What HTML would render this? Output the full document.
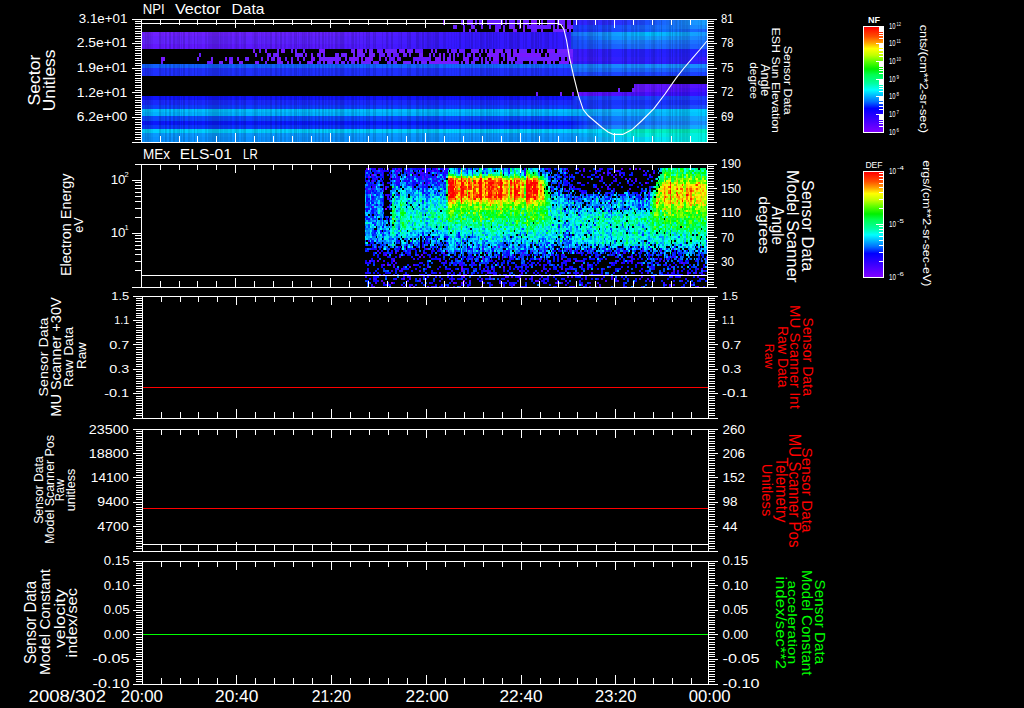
<!DOCTYPE html>
<html><head><meta charset="utf-8"><style>
html,body{margin:0;padding:0;background:#000;width:1024px;height:708px;overflow:hidden}
svg{display:block}
text{font-family:"Liberation Sans",sans-serif}
</style></head><body>
<svg width="1024" height="708" viewBox="0 0 1024 708" shape-rendering="crispEdges">
<defs><linearGradient id="g1" gradientUnits="userSpaceOnUse" x1="573" y1="0" x2="707" y2="0"><stop offset="0" stop-color="#3020ff"/><stop offset="0.35" stop-color="#2a30ff"/><stop offset="0.57" stop-color="#1a50ff"/><stop offset="0.87" stop-color="#1890ff"/><stop offset="1" stop-color="#18a0ff"/></linearGradient><linearGradient id="g2" gradientUnits="userSpaceOnUse" x1="573" y1="0" x2="707" y2="0"><stop offset="0" stop-color="#1a38ff"/><stop offset="0.35" stop-color="#1a50ff"/><stop offset="0.65" stop-color="#1870ff"/><stop offset="1" stop-color="#1890ff"/></linearGradient><linearGradient id="g3" gradientUnits="userSpaceOnUse" x1="573" y1="0" x2="707" y2="0"><stop offset="0" stop-color="#1a30ff"/><stop offset="0.35" stop-color="#1a48ff"/><stop offset="0.72" stop-color="#1070ff"/><stop offset="1" stop-color="#1a60ff"/></linearGradient><linearGradient id="g4" gradientUnits="userSpaceOnUse" x1="141" y1="0" x2="707" y2="0"><stop offset="0" stop-color="#7020ff"/><stop offset="0.33" stop-color="#6420ff"/><stop offset="0.56" stop-color="#3a18ff"/><stop offset="0.76" stop-color="#3018ff"/><stop offset="0.76" stop-color="#1870ff"/><stop offset="0.81" stop-color="#1890ff"/><stop offset="0.9" stop-color="#00c0ff"/><stop offset="1" stop-color="#1898ff"/></linearGradient><linearGradient id="g5" gradientUnits="userSpaceOnUse" x1="141" y1="0" x2="707" y2="0"><stop offset="0" stop-color="#6820ff"/><stop offset="0.33" stop-color="#5c20ff"/><stop offset="0.56" stop-color="#3618ff"/><stop offset="0.76" stop-color="#3018ff"/><stop offset="0.76" stop-color="#1a50ff"/><stop offset="0.83" stop-color="#1090ff"/><stop offset="0.9" stop-color="#10a0ff"/><stop offset="1" stop-color="#1a80ff"/></linearGradient><linearGradient id="g6" gradientUnits="userSpaceOnUse" x1="141" y1="0" x2="707" y2="0"><stop offset="0" stop-color="#6424ff"/><stop offset="0.33" stop-color="#5820ff"/><stop offset="0.56" stop-color="#3418ff"/><stop offset="0.76" stop-color="#3018ff"/><stop offset="0.76" stop-color="#1a48ff"/><stop offset="0.86" stop-color="#1a80ff"/><stop offset="1" stop-color="#1a70ff"/></linearGradient><linearGradient id="g7" gradientUnits="userSpaceOnUse" x1="141" y1="0" x2="707" y2="0"><stop offset="0" stop-color="#6418ff"/><stop offset="0.33" stop-color="#5618ff"/><stop offset="0.56" stop-color="#3218ff"/><stop offset="0.76" stop-color="#3018ff"/><stop offset="0.76" stop-color="#1a48ff"/><stop offset="0.88" stop-color="#1a70ff"/><stop offset="1" stop-color="#1a60ff"/></linearGradient><linearGradient id="g8" gradientUnits="userSpaceOnUse" x1="573" y1="0" x2="707" y2="0"><stop offset="0" stop-color="#3a18ff"/><stop offset="0.35" stop-color="#2820ff"/><stop offset="1" stop-color="#2020ff"/></linearGradient><linearGradient id="g9" gradientUnits="userSpaceOnUse" x1="573" y1="0" x2="707" y2="0"><stop offset="0" stop-color="#3a18ff"/><stop offset="0.35" stop-color="#2820ff"/><stop offset="1" stop-color="#2420ff"/></linearGradient><linearGradient id="g10" gradientUnits="userSpaceOnUse" x1="573" y1="0" x2="707" y2="0"><stop offset="0" stop-color="#4018ff"/><stop offset="0.35" stop-color="#3020ff"/><stop offset="0.87" stop-color="#2a20ff"/><stop offset="1" stop-color="#4018ff"/></linearGradient><linearGradient id="g11" gradientUnits="userSpaceOnUse" x1="573" y1="0" x2="707" y2="0"><stop offset="0" stop-color="#3018ff"/><stop offset="1" stop-color="#2a20ff"/></linearGradient><linearGradient id="g12" gradientUnits="userSpaceOnUse" x1="141" y1="0" x2="707" y2="0"><stop offset="0" stop-color="#1060ff"/><stop offset="0.6" stop-color="#1068ff"/><stop offset="0.67" stop-color="#1070ff"/><stop offset="0.76" stop-color="#1060ff"/><stop offset="0.76" stop-color="#1880ff"/><stop offset="0.9" stop-color="#1890ff"/><stop offset="1" stop-color="#1890ff"/></linearGradient><linearGradient id="g13" gradientUnits="userSpaceOnUse" x1="141" y1="0" x2="707" y2="0"><stop offset="0" stop-color="#1e30ff"/><stop offset="0.76" stop-color="#1e30ff"/><stop offset="0.76" stop-color="#1870ff"/><stop offset="1" stop-color="#1a60ff"/></linearGradient><linearGradient id="g14" gradientUnits="userSpaceOnUse" x1="141" y1="0" x2="707" y2="0"><stop offset="0" stop-color="#1e30ff"/><stop offset="0.76" stop-color="#1e30ff"/><stop offset="0.76" stop-color="#1a48ff"/><stop offset="1" stop-color="#1a40ff"/></linearGradient><linearGradient id="g15" gradientUnits="userSpaceOnUse" x1="634" y1="0" x2="707" y2="0"><stop offset="0" stop-color="#6818ff"/><stop offset="1" stop-color="#5010ff"/></linearGradient><linearGradient id="g16" gradientUnits="userSpaceOnUse" x1="634" y1="0" x2="707" y2="0"><stop offset="0" stop-color="#6818ff"/><stop offset="1" stop-color="#4010ff"/></linearGradient><linearGradient id="g17" gradientUnits="userSpaceOnUse" x1="578" y1="0" x2="707" y2="0"><stop offset="0" stop-color="#6010ff"/><stop offset="1" stop-color="#3010ff"/></linearGradient><linearGradient id="g18" gradientUnits="userSpaceOnUse" x1="141" y1="0" x2="707" y2="0"><stop offset="0" stop-color="#1014ff"/><stop offset="0.76" stop-color="#1014ff"/><stop offset="0.77" stop-color="#1848ff"/><stop offset="1" stop-color="#1a40ff"/></linearGradient><linearGradient id="g19" gradientUnits="userSpaceOnUse" x1="141" y1="0" x2="707" y2="0"><stop offset="0" stop-color="#1828ff"/><stop offset="0.76" stop-color="#1828ff"/><stop offset="0.77" stop-color="#1838ff"/><stop offset="1" stop-color="#1a30ff"/></linearGradient><linearGradient id="g20" gradientUnits="userSpaceOnUse" x1="141" y1="0" x2="707" y2="0"><stop offset="0" stop-color="#0c40ff"/><stop offset="0.76" stop-color="#0c40ff"/><stop offset="0.77" stop-color="#1838ff"/><stop offset="1" stop-color="#1a50ff"/></linearGradient><linearGradient id="g21" gradientUnits="userSpaceOnUse" x1="141" y1="0" x2="707" y2="0"><stop offset="0" stop-color="#00c0ff"/><stop offset="0.76" stop-color="#00c0ff"/><stop offset="0.81" stop-color="#10b0ff"/><stop offset="1" stop-color="#00d0ff"/></linearGradient><linearGradient id="g22" gradientUnits="userSpaceOnUse" x1="141" y1="0" x2="707" y2="0"><stop offset="0" stop-color="#00b0ff"/><stop offset="0.76" stop-color="#00b0ff"/><stop offset="0.81" stop-color="#10a0ff"/><stop offset="1" stop-color="#00c8ff"/></linearGradient><linearGradient id="g23" gradientUnits="userSpaceOnUse" x1="141" y1="0" x2="707" y2="0"><stop offset="0" stop-color="#0a48ff"/><stop offset="0.76" stop-color="#0a48ff"/><stop offset="0.81" stop-color="#1070ff"/><stop offset="1" stop-color="#10a8ff"/></linearGradient><linearGradient id="g24" gradientUnits="userSpaceOnUse" x1="141" y1="0" x2="707" y2="0"><stop offset="0" stop-color="#0a18ff"/><stop offset="0.76" stop-color="#0a18ff"/><stop offset="0.81" stop-color="#1858ff"/><stop offset="1" stop-color="#1890ff"/></linearGradient><linearGradient id="g25" gradientUnits="userSpaceOnUse" x1="141" y1="0" x2="707" y2="0"><stop offset="0" stop-color="#0a38ff"/><stop offset="0.76" stop-color="#0a38ff"/><stop offset="0.81" stop-color="#1a80ff"/><stop offset="1" stop-color="#10b0ff"/></linearGradient><linearGradient id="g26" gradientUnits="userSpaceOnUse" x1="141" y1="0" x2="707" y2="0"><stop offset="0" stop-color="#00d0ff"/><stop offset="0.76" stop-color="#00d0ff"/><stop offset="0.81" stop-color="#00e0ff"/><stop offset="0.88" stop-color="#00f0c0"/><stop offset="1" stop-color="#00f0c0"/></linearGradient><linearGradient id="g27" gradientUnits="userSpaceOnUse" x1="141" y1="0" x2="707" y2="0"><stop offset="0" stop-color="#0898ff"/><stop offset="0.76" stop-color="#0898ff"/><stop offset="0.81" stop-color="#00c0ff"/><stop offset="0.88" stop-color="#00f0e0"/><stop offset="1" stop-color="#00f0e0"/></linearGradient><linearGradient id="g28" gradientUnits="userSpaceOnUse" x1="141" y1="0" x2="707" y2="0"><stop offset="0" stop-color="#0890ff"/><stop offset="0.76" stop-color="#0890ff"/><stop offset="0.81" stop-color="#10b0ff"/><stop offset="0.88" stop-color="#00e0ff"/><stop offset="1" stop-color="#00f0e0"/></linearGradient><linearGradient id="cbg" x1="0" y1="0" x2="0" y2="1"><stop offset="0.0" stop-color="#ff0000"/><stop offset="0.092" stop-color="#ff5000"/><stop offset="0.149" stop-color="#ffa000"/><stop offset="0.206" stop-color="#ffff00"/><stop offset="0.27" stop-color="#c0ff00"/><stop offset="0.327" stop-color="#60ff00"/><stop offset="0.4" stop-color="#00f000"/><stop offset="0.455" stop-color="#00ff50"/><stop offset="0.536" stop-color="#00ffa0"/><stop offset="0.599" stop-color="#00ffff"/><stop offset="0.648" stop-color="#00c0ff"/><stop offset="0.711" stop-color="#0070ff"/><stop offset="0.776" stop-color="#0000ff"/><stop offset="0.89" stop-color="#4000ff"/><stop offset="1.0" stop-color="#8000ff"/></linearGradient></defs>
<rect width="1024" height="708" fill="#000"/>
<rect x="573" y="20" width="134" height="5" fill="url(#g1)"/><rect x="573" y="25" width="134" height="4" fill="url(#g2)"/><rect x="573" y="29" width="134" height="3" fill="url(#g3)"/><rect x="141" y="32" width="566" height="4" fill="url(#g4)"/><rect x="141" y="36" width="566" height="4" fill="url(#g5)"/><rect x="141" y="40" width="566" height="4" fill="url(#g6)"/><rect x="141" y="44" width="566" height="5" fill="url(#g7)"/><rect x="573" y="49" width="134" height="4" fill="url(#g8)"/><rect x="573" y="53" width="134" height="4" fill="url(#g9)"/><rect x="573" y="57" width="134" height="4" fill="url(#g10)"/><rect x="573" y="61" width="134" height="3" fill="url(#g11)"/><rect x="141" y="64" width="566" height="4" fill="url(#g12)"/><rect x="141" y="68" width="566" height="4" fill="url(#g13)"/><rect x="141" y="72" width="566" height="4" fill="url(#g14)"/><rect x="634" y="84" width="73" height="4" fill="url(#g15)"/><rect x="634" y="88" width="73" height="4" fill="url(#g16)"/><rect x="578" y="92" width="129" height="4" fill="url(#g17)"/><rect x="141" y="96" width="566" height="4" fill="url(#g18)"/><rect x="141" y="100" width="566" height="5" fill="url(#g19)"/><rect x="141" y="105" width="566" height="4" fill="url(#g20)"/><rect x="141" y="109" width="566" height="3" fill="url(#g21)"/><rect x="141" y="112" width="566" height="4" fill="url(#g22)"/><rect x="141" y="116" width="566" height="5" fill="url(#g23)"/><rect x="141" y="121" width="566" height="4" fill="url(#g24)"/><rect x="141" y="125" width="566" height="4" fill="url(#g25)"/><rect x="141" y="129" width="566" height="4" fill="url(#g26)"/><rect x="141" y="133" width="566" height="4" fill="url(#g27)"/><rect x="141" y="137" width="566" height="5" fill="url(#g28)"/><rect x="141" y="20" width="1" height="122" fill="#000" fill-opacity="0.1"/><rect x="142" y="20" width="1" height="122" fill="#000" fill-opacity="0.05"/><rect x="143" y="20" width="2" height="122" fill="#000" fill-opacity="0.05"/><rect x="145" y="20" width="1" height="122" fill="#000" fill-opacity="0.15"/><rect x="146" y="20" width="1" height="122" fill="#000" fill-opacity="0.1"/><rect x="147" y="20" width="2" height="122" fill="#000" fill-opacity="0.15"/><rect x="149" y="20" width="2" height="122" fill="#000" fill-opacity="0.1"/><rect x="151" y="20" width="2" height="122" fill="#000" fill-opacity="0.05"/><rect x="159" y="20" width="2" height="122" fill="#000" fill-opacity="0.15"/><rect x="161" y="20" width="1" height="122" fill="#000" fill-opacity="0.05"/><rect x="162" y="20" width="2" height="122" fill="#000" fill-opacity="0.05"/><rect x="165" y="20" width="1" height="122" fill="#000" fill-opacity="0.15"/><rect x="166" y="20" width="1" height="122" fill="#000" fill-opacity="0.1"/><rect x="169" y="20" width="1" height="122" fill="#000" fill-opacity="0.15"/><rect x="170" y="20" width="1" height="122" fill="#000" fill-opacity="0.15"/><rect x="173" y="20" width="2" height="122" fill="#000" fill-opacity="0.15"/><rect x="175" y="20" width="2" height="122" fill="#000" fill-opacity="0.05"/><rect x="177" y="20" width="2" height="122" fill="#000" fill-opacity="0.1"/><rect x="179" y="20" width="1" height="122" fill="#000" fill-opacity="0.15"/><rect x="181" y="20" width="1" height="122" fill="#000" fill-opacity="0.1"/><rect x="183" y="20" width="2" height="122" fill="#000" fill-opacity="0.15"/><rect x="188" y="20" width="2" height="122" fill="#000" fill-opacity="0.1"/><rect x="190" y="20" width="2" height="122" fill="#000" fill-opacity="0.05"/><rect x="194" y="20" width="1" height="122" fill="#000" fill-opacity="0.15"/><rect x="197" y="20" width="1" height="122" fill="#000" fill-opacity="0.1"/><rect x="198" y="20" width="2" height="122" fill="#000" fill-opacity="0.05"/><rect x="200" y="20" width="2" height="122" fill="#000" fill-opacity="0.05"/><rect x="205" y="20" width="2" height="122" fill="#000" fill-opacity="0.1"/><rect x="208" y="20" width="2" height="122" fill="#000" fill-opacity="0.1"/><rect x="210" y="20" width="1" height="122" fill="#000" fill-opacity="0.1"/><rect x="211" y="20" width="1" height="122" fill="#000" fill-opacity="0.1"/><rect x="212" y="20" width="1" height="122" fill="#000" fill-opacity="0.15"/><rect x="213" y="20" width="2" height="122" fill="#000" fill-opacity="0.15"/><rect x="215" y="20" width="1" height="122" fill="#000" fill-opacity="0.15"/><rect x="216" y="20" width="2" height="122" fill="#000" fill-opacity="0.15"/><rect x="218" y="20" width="1" height="122" fill="#000" fill-opacity="0.15"/><rect x="219" y="20" width="1" height="122" fill="#000" fill-opacity="0.05"/><rect x="220" y="20" width="1" height="122" fill="#000" fill-opacity="0.15"/><rect x="221" y="20" width="2" height="122" fill="#000" fill-opacity="0.1"/><rect x="223" y="20" width="1" height="122" fill="#000" fill-opacity="0.05"/><rect x="224" y="20" width="2" height="122" fill="#000" fill-opacity="0.1"/><rect x="226" y="20" width="2" height="122" fill="#000" fill-opacity="0.1"/><rect x="228" y="20" width="1" height="122" fill="#000" fill-opacity="0.05"/><rect x="229" y="20" width="1" height="122" fill="#000" fill-opacity="0.05"/><rect x="230" y="20" width="2" height="122" fill="#000" fill-opacity="0.1"/><rect x="234" y="20" width="1" height="122" fill="#000" fill-opacity="0.05"/><rect x="235" y="20" width="1" height="122" fill="#000" fill-opacity="0.1"/><rect x="236" y="20" width="1" height="122" fill="#000" fill-opacity="0.15"/><rect x="237" y="20" width="2" height="122" fill="#000" fill-opacity="0.1"/><rect x="241" y="20" width="1" height="122" fill="#000" fill-opacity="0.1"/><rect x="242" y="20" width="1" height="122" fill="#000" fill-opacity="0.05"/><rect x="243" y="20" width="1" height="122" fill="#000" fill-opacity="0.1"/><rect x="244" y="20" width="2" height="122" fill="#000" fill-opacity="0.15"/><rect x="252" y="20" width="2" height="122" fill="#000" fill-opacity="0.05"/><rect x="254" y="20" width="1" height="122" fill="#000" fill-opacity="0.15"/><rect x="255" y="20" width="1" height="122" fill="#000" fill-opacity="0.15"/><rect x="256" y="20" width="2" height="122" fill="#000" fill-opacity="0.1"/><rect x="259" y="20" width="1" height="122" fill="#000" fill-opacity="0.05"/><rect x="261" y="20" width="1" height="122" fill="#000" fill-opacity="0.1"/><rect x="262" y="20" width="2" height="122" fill="#000" fill-opacity="0.05"/><rect x="265" y="20" width="2" height="122" fill="#000" fill-opacity="0.1"/><rect x="267" y="20" width="1" height="122" fill="#000" fill-opacity="0.05"/><rect x="268" y="20" width="1" height="122" fill="#000" fill-opacity="0.05"/><rect x="269" y="20" width="1" height="122" fill="#000" fill-opacity="0.05"/><rect x="270" y="20" width="2" height="122" fill="#000" fill-opacity="0.15"/><rect x="275" y="20" width="1" height="122" fill="#000" fill-opacity="0.15"/><rect x="276" y="20" width="1" height="122" fill="#000" fill-opacity="0.15"/><rect x="277" y="20" width="1" height="122" fill="#000" fill-opacity="0.05"/><rect x="278" y="20" width="1" height="122" fill="#000" fill-opacity="0.05"/><rect x="280" y="20" width="2" height="122" fill="#000" fill-opacity="0.15"/><rect x="284" y="20" width="2" height="122" fill="#000" fill-opacity="0.1"/><rect x="288" y="20" width="1" height="122" fill="#000" fill-opacity="0.05"/><rect x="289" y="20" width="1" height="122" fill="#000" fill-opacity="0.05"/><rect x="290" y="20" width="1" height="122" fill="#000" fill-opacity="0.1"/><rect x="291" y="20" width="1" height="122" fill="#000" fill-opacity="0.1"/><rect x="294" y="20" width="1" height="122" fill="#000" fill-opacity="0.15"/><rect x="295" y="20" width="1" height="122" fill="#000" fill-opacity="0.1"/><rect x="296" y="20" width="1" height="122" fill="#000" fill-opacity="0.15"/><rect x="298" y="20" width="1" height="122" fill="#000" fill-opacity="0.1"/><rect x="300" y="20" width="2" height="122" fill="#000" fill-opacity="0.05"/><rect x="302" y="20" width="1" height="122" fill="#000" fill-opacity="0.15"/><rect x="303" y="20" width="1" height="122" fill="#000" fill-opacity="0.1"/><rect x="304" y="20" width="1" height="122" fill="#000" fill-opacity="0.15"/><rect x="305" y="20" width="2" height="122" fill="#000" fill-opacity="0.1"/><rect x="308" y="20" width="2" height="122" fill="#000" fill-opacity="0.15"/><rect x="310" y="20" width="1" height="122" fill="#000" fill-opacity="0.05"/><rect x="311" y="20" width="1" height="122" fill="#000" fill-opacity="0.1"/><rect x="312" y="20" width="1" height="122" fill="#000" fill-opacity="0.05"/><rect x="315" y="20" width="1" height="122" fill="#000" fill-opacity="0.15"/><rect x="316" y="20" width="1" height="122" fill="#000" fill-opacity="0.05"/><rect x="318" y="20" width="1" height="122" fill="#000" fill-opacity="0.1"/><rect x="319" y="20" width="1" height="122" fill="#000" fill-opacity="0.15"/><rect x="322" y="20" width="2" height="122" fill="#000" fill-opacity="0.15"/><rect x="325" y="20" width="1" height="122" fill="#000" fill-opacity="0.1"/><rect x="326" y="20" width="1" height="122" fill="#000" fill-opacity="0.05"/><rect x="328" y="20" width="2" height="122" fill="#000" fill-opacity="0.1"/><rect x="331" y="20" width="2" height="122" fill="#000" fill-opacity="0.1"/><rect x="335" y="20" width="2" height="122" fill="#000" fill-opacity="0.15"/><rect x="337" y="20" width="1" height="122" fill="#000" fill-opacity="0.1"/><rect x="338" y="20" width="2" height="122" fill="#000" fill-opacity="0.05"/><rect x="340" y="20" width="2" height="122" fill="#000" fill-opacity="0.15"/><rect x="342" y="20" width="2" height="122" fill="#000" fill-opacity="0.15"/><rect x="344" y="20" width="1" height="122" fill="#000" fill-opacity="0.05"/><rect x="347" y="20" width="2" height="122" fill="#000" fill-opacity="0.05"/><rect x="351" y="20" width="1" height="122" fill="#000" fill-opacity="0.1"/><rect x="352" y="20" width="2" height="122" fill="#000" fill-opacity="0.15"/><rect x="355" y="20" width="1" height="122" fill="#000" fill-opacity="0.1"/><rect x="356" y="20" width="1" height="122" fill="#000" fill-opacity="0.1"/><rect x="359" y="20" width="1" height="122" fill="#000" fill-opacity="0.1"/><rect x="363" y="20" width="1" height="122" fill="#000" fill-opacity="0.1"/><rect x="366" y="20" width="1" height="122" fill="#000" fill-opacity="0.15"/><rect x="367" y="20" width="2" height="122" fill="#000" fill-opacity="0.1"/><rect x="369" y="20" width="1" height="122" fill="#000" fill-opacity="0.15"/><rect x="373" y="20" width="1" height="122" fill="#000" fill-opacity="0.15"/><rect x="374" y="20" width="1" height="122" fill="#000" fill-opacity="0.1"/><rect x="375" y="20" width="1" height="122" fill="#000" fill-opacity="0.15"/><rect x="382" y="20" width="1" height="122" fill="#000" fill-opacity="0.1"/><rect x="386" y="20" width="2" height="122" fill="#000" fill-opacity="0.15"/><rect x="388" y="20" width="1" height="122" fill="#000" fill-opacity="0.05"/><rect x="391" y="20" width="2" height="122" fill="#000" fill-opacity="0.15"/><rect x="398" y="20" width="1" height="122" fill="#000" fill-opacity="0.05"/><rect x="399" y="20" width="2" height="122" fill="#000" fill-opacity="0.05"/><rect x="401" y="20" width="1" height="122" fill="#000" fill-opacity="0.15"/><rect x="407" y="20" width="1" height="122" fill="#000" fill-opacity="0.15"/><rect x="408" y="20" width="1" height="122" fill="#000" fill-opacity="0.1"/><rect x="409" y="20" width="2" height="122" fill="#000" fill-opacity="0.15"/><rect x="416" y="20" width="1" height="122" fill="#000" fill-opacity="0.15"/><rect x="417" y="20" width="2" height="122" fill="#000" fill-opacity="0.15"/><rect x="419" y="20" width="2" height="122" fill="#000" fill-opacity="0.05"/><rect x="422" y="20" width="2" height="122" fill="#000" fill-opacity="0.15"/><rect x="425" y="20" width="2" height="122" fill="#000" fill-opacity="0.05"/><rect x="427" y="20" width="2" height="122" fill="#000" fill-opacity="0.15"/><rect x="429" y="20" width="2" height="122" fill="#000" fill-opacity="0.1"/><rect x="431" y="20" width="2" height="122" fill="#000" fill-opacity="0.05"/><rect x="433" y="20" width="1" height="122" fill="#000" fill-opacity="0.1"/><rect x="434" y="20" width="1" height="122" fill="#000" fill-opacity="0.05"/><rect x="435" y="20" width="1" height="122" fill="#000" fill-opacity="0.15"/><rect x="436" y="20" width="1" height="122" fill="#000" fill-opacity="0.15"/><rect x="437" y="20" width="1" height="122" fill="#000" fill-opacity="0.15"/><rect x="438" y="20" width="1" height="122" fill="#000" fill-opacity="0.15"/><rect x="443" y="20" width="2" height="122" fill="#000" fill-opacity="0.1"/><rect x="445" y="20" width="1" height="122" fill="#000" fill-opacity="0.1"/><rect x="448" y="20" width="1" height="122" fill="#000" fill-opacity="0.05"/><rect x="451" y="20" width="1" height="122" fill="#000" fill-opacity="0.05"/><rect x="454" y="20" width="1" height="122" fill="#000" fill-opacity="0.05"/><rect x="456" y="20" width="1" height="122" fill="#000" fill-opacity="0.05"/><rect x="459" y="20" width="2" height="122" fill="#000" fill-opacity="0.15"/><rect x="465" y="20" width="1" height="122" fill="#000" fill-opacity="0.1"/><rect x="466" y="20" width="2" height="122" fill="#000" fill-opacity="0.05"/><rect x="468" y="20" width="1" height="122" fill="#000" fill-opacity="0.05"/><rect x="469" y="20" width="1" height="122" fill="#000" fill-opacity="0.1"/><rect x="471" y="20" width="1" height="122" fill="#000" fill-opacity="0.15"/><rect x="472" y="20" width="1" height="122" fill="#000" fill-opacity="0.15"/><rect x="475" y="20" width="1" height="122" fill="#000" fill-opacity="0.1"/><rect x="476" y="20" width="2" height="122" fill="#000" fill-opacity="0.05"/><rect x="478" y="20" width="1" height="122" fill="#000" fill-opacity="0.05"/><rect x="480" y="20" width="2" height="122" fill="#000" fill-opacity="0.15"/><rect x="482" y="20" width="2" height="122" fill="#000" fill-opacity="0.1"/><rect x="484" y="20" width="1" height="122" fill="#000" fill-opacity="0.05"/><rect x="486" y="20" width="2" height="122" fill="#000" fill-opacity="0.15"/><rect x="488" y="20" width="1" height="122" fill="#000" fill-opacity="0.05"/><rect x="489" y="20" width="1" height="122" fill="#000" fill-opacity="0.15"/><rect x="490" y="20" width="1" height="122" fill="#000" fill-opacity="0.1"/><rect x="491" y="20" width="1" height="122" fill="#000" fill-opacity="0.1"/><rect x="493" y="20" width="1" height="122" fill="#000" fill-opacity="0.15"/><rect x="494" y="20" width="2" height="122" fill="#000" fill-opacity="0.05"/><rect x="496" y="20" width="1" height="122" fill="#000" fill-opacity="0.1"/><rect x="497" y="20" width="1" height="122" fill="#000" fill-opacity="0.05"/><rect x="499" y="20" width="1" height="122" fill="#000" fill-opacity="0.1"/><rect x="504" y="20" width="1" height="122" fill="#000" fill-opacity="0.1"/><rect x="505" y="20" width="1" height="122" fill="#000" fill-opacity="0.05"/><rect x="506" y="20" width="1" height="122" fill="#000" fill-opacity="0.1"/><rect x="509" y="20" width="2" height="122" fill="#000" fill-opacity="0.15"/><rect x="511" y="20" width="2" height="122" fill="#000" fill-opacity="0.15"/><rect x="513" y="20" width="2" height="122" fill="#000" fill-opacity="0.05"/><rect x="515" y="20" width="1" height="122" fill="#000" fill-opacity="0.1"/><rect x="516" y="20" width="1" height="122" fill="#000" fill-opacity="0.05"/><rect x="517" y="20" width="1" height="122" fill="#000" fill-opacity="0.15"/><rect x="518" y="20" width="1" height="122" fill="#000" fill-opacity="0.15"/><rect x="519" y="20" width="1" height="122" fill="#000" fill-opacity="0.1"/><rect x="523" y="20" width="1" height="122" fill="#000" fill-opacity="0.1"/><rect x="525" y="20" width="1" height="122" fill="#000" fill-opacity="0.1"/><rect x="526" y="20" width="1" height="122" fill="#000" fill-opacity="0.1"/><rect x="531" y="20" width="1" height="122" fill="#000" fill-opacity="0.15"/><rect x="532" y="20" width="1" height="122" fill="#000" fill-opacity="0.15"/><rect x="533" y="20" width="1" height="122" fill="#000" fill-opacity="0.1"/><rect x="535" y="20" width="1" height="122" fill="#000" fill-opacity="0.15"/><rect x="536" y="20" width="1" height="122" fill="#000" fill-opacity="0.15"/><rect x="537" y="20" width="1" height="122" fill="#000" fill-opacity="0.05"/><rect x="538" y="20" width="1" height="122" fill="#000" fill-opacity="0.15"/><rect x="540" y="20" width="2" height="122" fill="#000" fill-opacity="0.1"/><rect x="544" y="20" width="1" height="122" fill="#000" fill-opacity="0.05"/><rect x="545" y="20" width="1" height="122" fill="#000" fill-opacity="0.1"/><rect x="546" y="20" width="1" height="122" fill="#000" fill-opacity="0.1"/><rect x="547" y="20" width="1" height="122" fill="#000" fill-opacity="0.1"/><rect x="548" y="20" width="1" height="122" fill="#000" fill-opacity="0.15"/><rect x="552" y="20" width="2" height="122" fill="#000" fill-opacity="0.1"/><rect x="556" y="20" width="1" height="122" fill="#000" fill-opacity="0.1"/><rect x="557" y="20" width="1" height="122" fill="#000" fill-opacity="0.05"/><rect x="563" y="20" width="1" height="122" fill="#000" fill-opacity="0.1"/><rect x="567" y="20" width="1" height="122" fill="#000" fill-opacity="0.05"/><rect x="568" y="20" width="2" height="122" fill="#000" fill-opacity="0.05"/><rect x="571" y="20" width="2" height="122" fill="#000" fill-opacity="0.15"/><rect x="573" y="20" width="2" height="122" fill="#000" fill-opacity="0.05"/><rect x="575" y="20" width="2" height="122" fill="#000" fill-opacity="0.05"/><rect x="577" y="20" width="1" height="122" fill="#000" fill-opacity="0.15"/><rect x="578" y="20" width="1" height="122" fill="#000" fill-opacity="0.1"/><rect x="581" y="20" width="1" height="122" fill="#000" fill-opacity="0.05"/><rect x="582" y="20" width="1" height="122" fill="#000" fill-opacity="0.1"/><rect x="583" y="20" width="1" height="122" fill="#000" fill-opacity="0.05"/><rect x="587" y="20" width="2" height="122" fill="#000" fill-opacity="0.1"/><rect x="589" y="20" width="2" height="122" fill="#000" fill-opacity="0.15"/><rect x="591" y="20" width="2" height="122" fill="#000" fill-opacity="0.15"/><rect x="593" y="20" width="1" height="122" fill="#000" fill-opacity="0.05"/><rect x="594" y="20" width="2" height="122" fill="#000" fill-opacity="0.1"/><rect x="597" y="20" width="1" height="122" fill="#000" fill-opacity="0.15"/><rect x="602" y="20" width="1" height="122" fill="#000" fill-opacity="0.15"/><rect x="603" y="20" width="2" height="122" fill="#000" fill-opacity="0.15"/><rect x="605" y="20" width="2" height="122" fill="#000" fill-opacity="0.1"/><rect x="608" y="20" width="2" height="122" fill="#000" fill-opacity="0.15"/><rect x="610" y="20" width="1" height="122" fill="#000" fill-opacity="0.15"/><rect x="611" y="20" width="1" height="122" fill="#000" fill-opacity="0.05"/><rect x="622" y="20" width="1" height="122" fill="#000" fill-opacity="0.1"/><rect x="624" y="20" width="2" height="122" fill="#000" fill-opacity="0.15"/><rect x="626" y="20" width="1" height="122" fill="#000" fill-opacity="0.15"/><rect x="631" y="20" width="2" height="122" fill="#000" fill-opacity="0.1"/><rect x="633" y="20" width="1" height="122" fill="#000" fill-opacity="0.1"/><rect x="635" y="20" width="1" height="122" fill="#000" fill-opacity="0.1"/><rect x="636" y="20" width="1" height="122" fill="#000" fill-opacity="0.15"/><rect x="637" y="20" width="1" height="122" fill="#000" fill-opacity="0.05"/><rect x="639" y="20" width="1" height="122" fill="#000" fill-opacity="0.1"/><rect x="640" y="20" width="1" height="122" fill="#000" fill-opacity="0.1"/><rect x="641" y="20" width="2" height="122" fill="#000" fill-opacity="0.1"/><rect x="643" y="20" width="2" height="122" fill="#000" fill-opacity="0.1"/><rect x="649" y="20" width="1" height="122" fill="#000" fill-opacity="0.05"/><rect x="651" y="20" width="2" height="122" fill="#000" fill-opacity="0.1"/><rect x="653" y="20" width="2" height="122" fill="#000" fill-opacity="0.15"/><rect x="655" y="20" width="1" height="122" fill="#000" fill-opacity="0.05"/><rect x="656" y="20" width="1" height="122" fill="#000" fill-opacity="0.05"/><rect x="659" y="20" width="1" height="122" fill="#000" fill-opacity="0.05"/><rect x="661" y="20" width="1" height="122" fill="#000" fill-opacity="0.15"/><rect x="666" y="20" width="1" height="122" fill="#000" fill-opacity="0.05"/><rect x="667" y="20" width="2" height="122" fill="#000" fill-opacity="0.05"/><rect x="669" y="20" width="2" height="122" fill="#000" fill-opacity="0.15"/><rect x="672" y="20" width="1" height="122" fill="#000" fill-opacity="0.15"/><rect x="674" y="20" width="1" height="122" fill="#000" fill-opacity="0.05"/><rect x="675" y="20" width="1" height="122" fill="#000" fill-opacity="0.1"/><rect x="676" y="20" width="1" height="122" fill="#000" fill-opacity="0.15"/><rect x="677" y="20" width="1" height="122" fill="#000" fill-opacity="0.05"/><rect x="679" y="20" width="2" height="122" fill="#000" fill-opacity="0.15"/><rect x="681" y="20" width="1" height="122" fill="#000" fill-opacity="0.05"/><rect x="682" y="20" width="2" height="122" fill="#000" fill-opacity="0.15"/><rect x="684" y="20" width="1" height="122" fill="#000" fill-opacity="0.15"/><rect x="685" y="20" width="1" height="122" fill="#000" fill-opacity="0.1"/><rect x="686" y="20" width="2" height="122" fill="#000" fill-opacity="0.15"/><rect x="688" y="20" width="1" height="122" fill="#000" fill-opacity="0.1"/><rect x="689" y="20" width="1" height="122" fill="#000" fill-opacity="0.1"/><rect x="698" y="20" width="1" height="122" fill="#000" fill-opacity="0.05"/><rect x="700" y="20" width="1" height="122" fill="#000" fill-opacity="0.05"/><rect x="701" y="20" width="1" height="122" fill="#000" fill-opacity="0.1"/><rect x="705" y="20" width="1" height="122" fill="#000" fill-opacity="0.1"/><rect x="443" y="20" width="2" height="5" fill="#7818ff"/><rect x="461" y="20" width="2" height="5" fill="#6a20ff"/><rect x="467" y="20" width="6" height="5" fill="#7020ff"/><rect x="475" y="20" width="2" height="5" fill="#6418ff"/><rect x="479" y="20" width="4" height="5" fill="#6418ff"/><rect x="487" y="20" width="16" height="5" fill="#6418ff"/><rect x="505" y="20" width="2" height="5" fill="#7020ff"/><rect x="509" y="20" width="6" height="5" fill="#6418ff"/><rect x="517" y="20" width="4" height="5" fill="#6a20ff"/><rect x="523" y="20" width="6" height="5" fill="#6a20ff"/><rect x="531" y="20" width="6" height="5" fill="#7818ff"/><rect x="541" y="20" width="2" height="5" fill="#6a20ff"/><rect x="547" y="20" width="8" height="5" fill="#6418ff"/><rect x="557" y="20" width="8" height="5" fill="#6a20ff"/><rect x="567" y="20" width="4" height="5" fill="#6418ff"/><rect x="453" y="25" width="4" height="4" fill="#6a20ff"/><rect x="463" y="25" width="2" height="4" fill="#6418ff"/><rect x="471" y="25" width="4" height="4" fill="#7020ff"/><rect x="481" y="25" width="2" height="4" fill="#7020ff"/><rect x="489" y="25" width="2" height="4" fill="#6a20ff"/><rect x="495" y="25" width="6" height="4" fill="#6418ff"/><rect x="503" y="25" width="2" height="4" fill="#6a20ff"/><rect x="509" y="25" width="6" height="4" fill="#7020ff"/><rect x="519" y="25" width="2" height="4" fill="#7020ff"/><rect x="523" y="25" width="2" height="4" fill="#7020ff"/><rect x="527" y="25" width="24" height="4" fill="#6418ff"/><rect x="553" y="25" width="2" height="4" fill="#6a20ff"/><rect x="557" y="25" width="2" height="4" fill="#7020ff"/><rect x="563" y="25" width="2" height="4" fill="#6418ff"/><rect x="567" y="25" width="6" height="4" fill="#7020ff"/><rect x="463" y="29" width="2" height="3" fill="#6a20ff"/><rect x="469" y="29" width="2" height="3" fill="#7818ff"/><rect x="475" y="29" width="2" height="3" fill="#6a20ff"/><rect x="495" y="29" width="4" height="3" fill="#6418ff"/><rect x="503" y="29" width="2" height="3" fill="#7020ff"/><rect x="513" y="29" width="4" height="3" fill="#7818ff"/><rect x="523" y="29" width="2" height="3" fill="#7818ff"/><rect x="531" y="29" width="6" height="3" fill="#6418ff"/><rect x="541" y="29" width="2" height="3" fill="#7818ff"/><rect x="553" y="29" width="14" height="3" fill="#7020ff"/><rect x="569" y="29" width="2" height="3" fill="#7818ff"/><rect x="253" y="49" width="2" height="4" fill="#7818ff"/><rect x="259" y="49" width="2" height="4" fill="#6418ff"/><rect x="265" y="49" width="2" height="4" fill="#7818ff"/><rect x="277" y="49" width="2" height="4" fill="#6a20ff"/><rect x="281" y="49" width="4" height="4" fill="#7818ff"/><rect x="291" y="49" width="2" height="4" fill="#6a20ff"/><rect x="295" y="49" width="2" height="4" fill="#6a20ff"/><rect x="303" y="49" width="2" height="4" fill="#6a20ff"/><rect x="319" y="49" width="6" height="4" fill="#7818ff"/><rect x="351" y="49" width="4" height="4" fill="#7020ff"/><rect x="357" y="49" width="6" height="4" fill="#7818ff"/><rect x="365" y="49" width="2" height="4" fill="#6a20ff"/><rect x="369" y="49" width="4" height="4" fill="#6a20ff"/><rect x="377" y="49" width="6" height="4" fill="#6418ff"/><rect x="385" y="49" width="12" height="4" fill="#6a20ff"/><rect x="399" y="49" width="6" height="4" fill="#7818ff"/><rect x="407" y="49" width="6" height="4" fill="#7020ff"/><rect x="415" y="49" width="8" height="4" fill="#6418ff"/><rect x="431" y="49" width="2" height="4" fill="#7818ff"/><rect x="435" y="49" width="2" height="4" fill="#7020ff"/><rect x="447" y="49" width="2" height="4" fill="#7020ff"/><rect x="451" y="49" width="6" height="4" fill="#6418ff"/><rect x="459" y="49" width="6" height="4" fill="#6418ff"/><rect x="471" y="49" width="8" height="4" fill="#7020ff"/><rect x="481" y="49" width="2" height="4" fill="#6a20ff"/><rect x="485" y="49" width="2" height="4" fill="#7818ff"/><rect x="489" y="49" width="4" height="4" fill="#6a20ff"/><rect x="495" y="49" width="8" height="4" fill="#7818ff"/><rect x="505" y="49" width="6" height="4" fill="#6a20ff"/><rect x="513" y="49" width="4" height="4" fill="#7818ff"/><rect x="519" y="49" width="8" height="4" fill="#6a20ff"/><rect x="531" y="49" width="4" height="4" fill="#6418ff"/><rect x="537" y="49" width="2" height="4" fill="#6a20ff"/><rect x="541" y="49" width="2" height="4" fill="#7020ff"/><rect x="547" y="49" width="8" height="4" fill="#7818ff"/><rect x="557" y="49" width="16" height="4" fill="#7020ff"/><rect x="199" y="53" width="2" height="4" fill="#6418ff"/><rect x="255" y="53" width="2" height="4" fill="#7020ff"/><rect x="267" y="53" width="4" height="4" fill="#6418ff"/><rect x="273" y="53" width="6" height="4" fill="#6a20ff"/><rect x="295" y="53" width="8" height="4" fill="#6a20ff"/><rect x="305" y="53" width="2" height="4" fill="#7818ff"/><rect x="311" y="53" width="2" height="4" fill="#7020ff"/><rect x="317" y="53" width="4" height="4" fill="#6a20ff"/><rect x="323" y="53" width="2" height="4" fill="#6418ff"/><rect x="335" y="53" width="4" height="4" fill="#6a20ff"/><rect x="341" y="53" width="6" height="4" fill="#6a20ff"/><rect x="353" y="53" width="2" height="4" fill="#6a20ff"/><rect x="357" y="53" width="8" height="4" fill="#6a20ff"/><rect x="369" y="53" width="6" height="4" fill="#7020ff"/><rect x="379" y="53" width="6" height="4" fill="#6418ff"/><rect x="387" y="53" width="4" height="4" fill="#6a20ff"/><rect x="393" y="53" width="6" height="4" fill="#6418ff"/><rect x="403" y="53" width="4" height="4" fill="#6a20ff"/><rect x="409" y="53" width="2" height="4" fill="#6a20ff"/><rect x="419" y="53" width="4" height="4" fill="#7020ff"/><rect x="429" y="53" width="2" height="4" fill="#7020ff"/><rect x="433" y="53" width="2" height="4" fill="#6418ff"/><rect x="439" y="53" width="2" height="4" fill="#7818ff"/><rect x="443" y="53" width="2" height="4" fill="#7818ff"/><rect x="449" y="53" width="2" height="4" fill="#6a20ff"/><rect x="453" y="53" width="2" height="4" fill="#6a20ff"/><rect x="457" y="53" width="2" height="4" fill="#6a20ff"/><rect x="463" y="53" width="2" height="4" fill="#6418ff"/><rect x="467" y="53" width="4" height="4" fill="#6418ff"/><rect x="473" y="53" width="2" height="4" fill="#7818ff"/><rect x="479" y="53" width="2" height="4" fill="#6418ff"/><rect x="487" y="53" width="12" height="4" fill="#7818ff"/><rect x="501" y="53" width="4" height="4" fill="#6418ff"/><rect x="507" y="53" width="4" height="4" fill="#7020ff"/><rect x="513" y="53" width="28" height="4" fill="#7818ff"/><rect x="545" y="53" width="2" height="4" fill="#7818ff"/><rect x="549" y="53" width="24" height="4" fill="#6a20ff"/><rect x="161" y="57" width="4" height="4" fill="#7818ff"/><rect x="197" y="57" width="2" height="4" fill="#7020ff"/><rect x="211" y="57" width="2" height="4" fill="#7020ff"/><rect x="225" y="57" width="2" height="4" fill="#7818ff"/><rect x="229" y="57" width="4" height="4" fill="#6418ff"/><rect x="237" y="57" width="2" height="4" fill="#7818ff"/><rect x="245" y="57" width="4" height="4" fill="#6a20ff"/><rect x="261" y="57" width="2" height="4" fill="#6418ff"/><rect x="267" y="57" width="2" height="4" fill="#7818ff"/><rect x="271" y="57" width="4" height="4" fill="#6a20ff"/><rect x="277" y="57" width="4" height="4" fill="#7818ff"/><rect x="285" y="57" width="2" height="4" fill="#6418ff"/><rect x="291" y="57" width="2" height="4" fill="#6a20ff"/><rect x="297" y="57" width="2" height="4" fill="#7818ff"/><rect x="303" y="57" width="2" height="4" fill="#6a20ff"/><rect x="311" y="57" width="4" height="4" fill="#7818ff"/><rect x="319" y="57" width="22" height="4" fill="#7020ff"/><rect x="345" y="57" width="2" height="4" fill="#6a20ff"/><rect x="349" y="57" width="10" height="4" fill="#7818ff"/><rect x="361" y="57" width="2" height="4" fill="#7818ff"/><rect x="365" y="57" width="8" height="4" fill="#7818ff"/><rect x="379" y="57" width="2" height="4" fill="#7818ff"/><rect x="385" y="57" width="2" height="4" fill="#7818ff"/><rect x="389" y="57" width="6" height="4" fill="#6418ff"/><rect x="397" y="57" width="4" height="4" fill="#7818ff"/><rect x="413" y="57" width="18" height="4" fill="#6418ff"/><rect x="435" y="57" width="6" height="4" fill="#7818ff"/><rect x="443" y="57" width="2" height="4" fill="#7020ff"/><rect x="447" y="57" width="4" height="4" fill="#7020ff"/><rect x="453" y="57" width="2" height="4" fill="#6418ff"/><rect x="463" y="57" width="6" height="4" fill="#7818ff"/><rect x="473" y="57" width="6" height="4" fill="#6418ff"/><rect x="481" y="57" width="2" height="4" fill="#7818ff"/><rect x="485" y="57" width="2" height="4" fill="#6a20ff"/><rect x="489" y="57" width="2" height="4" fill="#6a20ff"/><rect x="493" y="57" width="6" height="4" fill="#7818ff"/><rect x="503" y="57" width="2" height="4" fill="#6418ff"/><rect x="507" y="57" width="8" height="4" fill="#7020ff"/><rect x="517" y="57" width="42" height="4" fill="#6a20ff"/><rect x="561" y="57" width="4" height="4" fill="#6418ff"/><rect x="567" y="57" width="6" height="4" fill="#6418ff"/><rect x="161" y="61" width="2" height="3" fill="#6418ff"/><rect x="207" y="61" width="6" height="3" fill="#6418ff"/><rect x="219" y="61" width="4" height="3" fill="#7020ff"/><rect x="229" y="61" width="4" height="3" fill="#7020ff"/><rect x="239" y="61" width="4" height="3" fill="#7818ff"/><rect x="255" y="61" width="4" height="3" fill="#7818ff"/><rect x="265" y="61" width="2" height="3" fill="#6a20ff"/><rect x="277" y="61" width="6" height="3" fill="#7020ff"/><rect x="287" y="61" width="2" height="3" fill="#7818ff"/><rect x="291" y="61" width="2" height="3" fill="#7020ff"/><rect x="299" y="61" width="2" height="3" fill="#6418ff"/><rect x="307" y="61" width="6" height="3" fill="#7818ff"/><rect x="317" y="61" width="4" height="3" fill="#6418ff"/><rect x="323" y="61" width="2" height="3" fill="#7020ff"/><rect x="327" y="61" width="6" height="3" fill="#6a20ff"/><rect x="335" y="61" width="4" height="3" fill="#7818ff"/><rect x="341" y="61" width="4" height="3" fill="#6a20ff"/><rect x="347" y="61" width="2" height="3" fill="#6418ff"/><rect x="351" y="61" width="4" height="3" fill="#6a20ff"/><rect x="357" y="61" width="2" height="3" fill="#6a20ff"/><rect x="361" y="61" width="10" height="3" fill="#6a20ff"/><rect x="373" y="61" width="6" height="3" fill="#6a20ff"/><rect x="387" y="61" width="4" height="3" fill="#7020ff"/><rect x="393" y="61" width="4" height="3" fill="#7020ff"/><rect x="403" y="61" width="8" height="3" fill="#7020ff"/><rect x="413" y="61" width="2" height="3" fill="#6418ff"/><rect x="417" y="61" width="2" height="3" fill="#7020ff"/><rect x="421" y="61" width="6" height="3" fill="#7020ff"/><rect x="429" y="61" width="30" height="3" fill="#7818ff"/><rect x="461" y="61" width="2" height="3" fill="#7020ff"/><rect x="465" y="61" width="4" height="3" fill="#7020ff"/><rect x="471" y="61" width="4" height="3" fill="#7020ff"/><rect x="481" y="61" width="2" height="3" fill="#6418ff"/><rect x="485" y="61" width="4" height="3" fill="#6a20ff"/><rect x="491" y="61" width="8" height="3" fill="#6418ff"/><rect x="501" y="61" width="2" height="3" fill="#7020ff"/><rect x="507" y="61" width="2" height="3" fill="#6a20ff"/><rect x="511" y="61" width="2" height="3" fill="#6a20ff"/><rect x="515" y="61" width="8" height="3" fill="#6418ff"/><rect x="529" y="61" width="2" height="3" fill="#6a20ff"/><rect x="533" y="61" width="4" height="3" fill="#6418ff"/><rect x="543" y="61" width="2" height="3" fill="#6418ff"/><rect x="547" y="61" width="4" height="3" fill="#7818ff"/><rect x="553" y="61" width="2" height="3" fill="#7818ff"/><rect x="559" y="61" width="10" height="3" fill="#7818ff"/><rect x="571" y="61" width="2" height="3" fill="#7818ff"/><rect x="618" y="88" width="2" height="4" fill="#6a20ff"/><rect x="632" y="88" width="2" height="4" fill="#6a20ff"/><rect x="536" y="92" width="2" height="4" fill="#7020ff"/><rect x="560" y="92" width="2" height="4" fill="#7020ff"/><rect x="572" y="92" width="2" height="4" fill="#7818ff"/><path fill="#8000ff" d="M368 168v2h2v-2zM371 194v2h1v-2zM372 174v2h2v-2zM425 168v2h1v-2zM436 168v2h1v-2zM437 174v2h1v-2zM539 258v2h1v-2zM385 208h2v2h-2zM391 282h2v2h-2z"/><path fill="#6c00ff" d="M368 176v2h2v-2zM383 184v2h1v-2zM396 170v2h2v-2zM406 170v2h1v-2zM428 182v2h2v-2zM369 260h2v2h-2zM377 260h2v2h-2zM385 188h2v2h-2zM387 264h2v2h-2zM393 260h2v2h-2zM461 268h2v2h-2zM463 276h2v2h-2zM463 280h2v2h-2zM621 168h2v2h-2zM625 272h2v2h-2zM645 182h2v2h-2zM697 286h2v2h-2z"/><path fill="#5800ff" d="M366 168v2h2v-2zM366 204v2h2v-2zM372 180v2h2v-2zM372 206v2h2v-2zM390 176v2h2v-2zM395 172v2h1v-2zM398 168v2h2v-2zM412 172v2h1v-2zM422 168v2h2v-2zM422 176v4h2v-4zM426 248v2h2v-2zM432 170v2h2v-2zM436 176v2h1v-2zM437 168v2h1v-2zM443 176v2h1v-2zM472 258v2h1v-2zM482 248v2h2v-2zM498 246v2h2v-2zM498 256v2h2v-2zM532 250v2h1v-2zM564 188v2h2v-2zM578 252v2h2v-2zM648 192v2h2v-2zM706 258v2h1v-2zM383 264h2v2h-2zM383 282h2v2h-2zM385 254h2v2h-2zM403 278h2v2h-2zM409 266h2v2h-2zM413 286h2v2h-2zM419 256h2v2h-2zM419 280h2v2h-2zM421 254h2v2h-2zM443 252h2v2h-2zM453 282h2v2h-2zM459 274h2v2h-2zM459 286h2v2h-2zM461 266h2v2h-2zM461 270h2v2h-2zM461 282h2v2h-2zM463 274h2v2h-2zM481 278h2v2h-2zM481 286h2v2h-2zM487 272h2v2h-2zM491 278h2v2h-2zM503 266h2v2h-2zM513 284h2v2h-2zM521 272h2v2h-2zM535 280h2v2h-2zM547 270h2v2h-2zM561 258h2v2h-2zM575 260h2v2h-2zM579 182h2v2h-2zM581 264h2v2h-2zM583 168h2v2h-2zM587 264h2v2h-2zM601 176h2v2h-2zM603 172h2v2h-2zM617 170h2v2h-2zM617 280h2v2h-2zM619 174h2v2h-2zM635 168h2v2h-2zM671 266h2v2h-2zM681 262h2v2h-2zM687 272h2v2h-2zM695 272h2v2h-2z"/><path fill="#4400ff" d="M365 172v2h1v-2zM368 190v2h2v-2zM372 188v2h2v-2zM374 186v2h2v-2zM376 170v2h1v-2zM376 246v2h1v-2zM377 176v2h1v-2zM378 168v2h2v-2zM382 172v4h1v-4zM383 170v2h1v-2zM383 188v4h1v-4zM395 182v2h1v-2zM396 176v2h2v-2zM400 170v2h1v-2zM406 176v2h1v-2zM407 244v2h1v-2zM408 172v2h2v-2zM412 186v2h1v-2zM418 182v2h1v-2zM420 172v2h2v-2zM422 172v2h2v-2zM422 182v2h2v-2zM425 172v2h1v-2zM426 174v4h2v-4zM437 170v2h1v-2zM437 180v2h1v-2zM446 250v2h2v-2zM455 250v2h1v-2zM467 250v2h1v-2zM472 172v2h1v-2zM482 256v4h2v-4zM502 256v2h1v-2zM509 256v2h1v-2zM520 256v2h1v-2zM521 254v2h1v-2zM521 258v2h1v-2zM522 252v2h2v-2zM524 172v2h2v-2zM551 176v2h1v-2zM562 168v2h1v-2zM564 170v2h2v-2zM568 170v2h1v-2zM570 186v2h2v-2zM570 248v2h2v-2zM574 200v2h1v-2zM576 198v2h2v-2zM581 250v2h1v-2zM582 192v2h2v-2zM588 252v2h2v-2zM605 248v2h1v-2zM608 202v2h2v-2zM618 252v2h2v-2zM623 198v2h1v-2zM642 250v2h2v-2zM656 258v2h2v-2zM674 256v2h2v-2zM373 286h2v2h-2zM375 282h2v2h-2zM377 250h2v2h-2zM379 252h2v2h-2zM381 280h2v2h-2zM385 186h2v2h-2zM387 194h2v2h-2zM393 264h2v2h-2zM393 266h2v2h-2zM395 252h2v2h-2zM399 256h2v2h-2zM403 274h2v2h-2zM409 278h2v2h-2zM409 286h2v2h-2zM413 264h2v2h-2zM419 270h2v2h-2zM423 252h2v2h-2zM427 266h2v2h-2zM427 286h2v2h-2zM433 286h2v2h-2zM439 260h2v2h-2zM439 272h2v2h-2zM459 264h2v2h-2zM465 274h2v2h-2zM469 280h2v2h-2zM473 262h2v2h-2zM491 268h2v2h-2zM505 276h2v2h-2zM507 276h2v2h-2zM519 270h2v2h-2zM519 278h2v2h-2zM525 278h2v2h-2zM531 264h2v2h-2zM531 278h2v2h-2zM537 280h2v2h-2zM541 270h2v2h-2zM557 282h2v2h-2zM561 268h2v2h-2zM561 282h2v2h-2zM563 254h2v2h-2zM565 260h2v2h-2zM567 276h2v2h-2zM573 286h2v2h-2zM577 272h2v2h-2zM581 260h2v2h-2zM581 284h2v2h-2zM583 170h2v2h-2zM589 274h2v2h-2zM591 272h2v2h-2zM595 172h2v2h-2zM595 186h2v2h-2zM597 274h2v2h-2zM599 286h2v2h-2zM601 178h2v2h-2zM605 280h2v2h-2zM607 172h2v2h-2zM607 186h2v2h-2zM607 188h2v2h-2zM611 262h2v2h-2zM613 176h2v2h-2zM615 174h2v2h-2zM625 178h2v2h-2zM629 178h2v2h-2zM629 188h2v2h-2zM629 256h2v2h-2zM629 260h2v2h-2zM631 256h2v2h-2zM631 260h2v2h-2zM635 178h2v2h-2zM635 180h2v2h-2zM639 168h2v2h-2zM643 170h2v2h-2zM647 272h2v2h-2zM647 278h2v2h-2zM649 174h2v2h-2zM653 172h2v2h-2zM659 274h2v2h-2zM663 260h2v2h-2zM663 282h2v2h-2zM665 274h2v2h-2zM669 274h2v2h-2zM669 284h2v2h-2zM677 270h2v2h-2z"/><path fill="#3000ff" d="M366 180v2h2v-2zM366 188v2h2v-2zM368 192v2h2v-2zM368 240v2h2v-2zM370 244v2h1v-2zM371 174v2h1v-2zM372 176v2h2v-2zM372 184v2h2v-2zM372 198v2h2v-2zM374 168v2h2v-2zM374 178v2h2v-2zM376 174v2h1v-2zM377 178v2h1v-2zM378 172v2h2v-2zM380 170v2h2v-2zM383 168v2h1v-2zM390 174v2h2v-2zM392 168v2h2v-2zM396 174v2h2v-2zM396 178v4h2v-4zM398 170v2h2v-2zM398 180v2h2v-2zM398 194v2h2v-2zM406 180v2h1v-2zM407 176v2h1v-2zM408 174v2h2v-2zM412 168v2h1v-2zM412 180v2h1v-2zM412 188v2h1v-2zM413 172v4h1v-4zM413 180v2h1v-2zM414 174v2h2v-2zM418 172v2h1v-2zM418 176v2h1v-2zM420 170v2h2v-2zM420 174v2h2v-2zM422 174v2h2v-2zM422 184v2h2v-2zM422 246v2h2v-2zM425 176v4h1v-4zM426 172v2h2v-2zM426 242v2h2v-2zM428 168v4h2v-4zM432 178v2h2v-2zM434 176v2h2v-2zM438 182v4h2v-4zM442 170v2h1v-2zM443 168v2h1v-2zM444 168v6h2v-6zM444 176v2h2v-2zM446 168v2h2v-2zM466 258v2h1v-2zM472 246v6h1v-6zM486 252v2h2v-2zM494 246v2h2v-2zM503 250v2h1v-2zM503 254v2h1v-2zM508 250v4h1v-4zM512 254v2h2v-2zM524 168v2h2v-2zM539 250v2h1v-2zM540 258v2h2v-2zM545 168v2h1v-2zM545 250v2h1v-2zM548 168v2h2v-2zM551 254v2h1v-2zM566 168v2h2v-2zM566 176v2h2v-2zM566 180v2h2v-2zM568 192v2h1v-2zM568 248v2h1v-2zM570 250v2h2v-2zM574 252v2h1v-2zM590 248v2h2v-2zM598 196v2h1v-2zM605 192v2h1v-2zM610 200v2h1v-2zM610 252v2h1v-2zM611 212v2h1v-2zM623 194v2h1v-2zM623 252v2h1v-2zM624 252v2h2v-2zM638 194v2h2v-2zM640 250v2h1v-2zM648 194v2h2v-2zM660 250v2h2v-2zM660 258v2h2v-2zM666 258v2h2v-2zM668 256v2h2v-2zM672 248v2h2v-2zM365 262h2v2h-2zM371 284h2v2h-2zM371 286h2v2h-2zM373 260h2v2h-2zM373 278h2v2h-2zM375 278h2v2h-2zM383 168h2v2h-2zM383 274h2v2h-2zM385 194h2v2h-2zM387 168h2v2h-2zM387 196h2v2h-2zM387 198h2v2h-2zM387 206h2v2h-2zM387 284h2v2h-2zM389 284h2v2h-2zM391 258h2v2h-2zM391 270h2v2h-2zM393 258h2v2h-2zM393 274h2v2h-2zM395 262h2v2h-2zM395 278h2v2h-2zM397 250h2v2h-2zM397 268h2v2h-2zM399 270h2v2h-2zM401 268h2v2h-2zM401 270h2v2h-2zM405 284h2v2h-2zM407 274h2v2h-2zM407 276h2v2h-2zM407 280h2v2h-2zM409 250h2v2h-2zM411 284h2v2h-2zM413 258h2v2h-2zM417 254h2v2h-2zM419 278h2v2h-2zM421 274h2v2h-2zM423 256h2v2h-2zM429 274h2v2h-2zM431 286h2v2h-2zM439 258h2v2h-2zM439 280h2v2h-2zM443 262h2v2h-2zM445 260h2v2h-2zM447 272h2v2h-2zM451 278h2v2h-2zM451 280h2v2h-2zM455 282h2v2h-2zM459 262h2v2h-2zM461 262h2v2h-2zM465 282h2v2h-2zM481 280h2v2h-2zM483 268h2v2h-2zM485 270h2v2h-2zM487 270h2v2h-2zM489 276h2v2h-2zM491 272h2v2h-2zM493 274h2v2h-2zM495 260h2v2h-2zM495 274h2v2h-2zM499 280h2v2h-2zM499 282h2v2h-2zM503 284h2v2h-2zM509 272h2v2h-2zM511 276h2v2h-2zM515 266h2v2h-2zM517 276h2v2h-2zM519 276h2v2h-2zM523 264h2v2h-2zM525 286h2v2h-2zM529 260h2v2h-2zM537 262h2v2h-2zM539 264h2v2h-2zM541 276h2v2h-2zM543 268h2v2h-2zM545 278h2v2h-2zM547 278h2v2h-2zM549 268h2v2h-2zM549 274h2v2h-2zM555 282h2v2h-2zM557 280h2v2h-2zM561 262h2v2h-2zM565 264h2v2h-2zM565 270h2v2h-2zM565 280h2v2h-2zM569 260h2v2h-2zM569 272h2v2h-2zM571 268h2v2h-2zM571 276h2v2h-2zM573 186h2v2h-2zM575 272h2v2h-2zM577 188h2v2h-2zM577 260h2v2h-2zM579 170h2v2h-2zM581 174h2v2h-2zM581 274h2v2h-2zM585 278h2v2h-2zM587 268h2v2h-2zM589 282h2v2h-2zM589 286h2v2h-2zM595 170h2v2h-2zM595 256h2v2h-2zM595 286h2v2h-2zM597 188h2v2h-2zM597 282h2v2h-2zM599 168h2v2h-2zM599 180h2v2h-2zM599 274h2v2h-2zM599 284h2v2h-2zM601 168h2v2h-2zM601 278h2v2h-2zM605 184h2v2h-2zM605 274h2v2h-2zM609 172h2v2h-2zM609 266h2v2h-2zM611 276h2v2h-2zM611 278h2v2h-2zM615 170h2v2h-2zM615 178h2v2h-2zM615 180h2v2h-2zM615 256h2v2h-2zM615 262h2v2h-2zM615 278h2v2h-2zM617 260h2v2h-2zM621 262h2v2h-2zM623 286h2v2h-2zM627 182h2v2h-2zM629 168h2v2h-2zM631 180h2v2h-2zM635 254h2v2h-2zM637 262h2v2h-2zM639 278h2v2h-2zM641 264h2v2h-2zM641 276h2v2h-2zM649 186h2v2h-2zM649 266h2v2h-2zM649 280h2v2h-2zM665 264h2v2h-2zM665 284h2v2h-2zM671 272h2v2h-2zM671 276h2v2h-2zM673 270h2v2h-2zM673 284h2v2h-2zM675 274h2v2h-2zM681 280h2v2h-2zM683 262h2v2h-2zM685 262h2v2h-2zM691 284h2v2h-2zM697 268h2v2h-2zM697 276h2v2h-2zM701 268h2v2h-2zM701 272h2v2h-2zM701 278h2v2h-2zM703 270h2v2h-2zM703 274h2v2h-2z"/><path fill="#1c00ff" d="M365 170v2h1v-2zM365 188v2h1v-2zM368 184v2h2v-2zM368 208v2h2v-2zM368 218v2h2v-2zM370 190v2h1v-2zM371 168v2h1v-2zM371 180v2h1v-2zM371 188v2h1v-2zM371 196v2h1v-2zM372 168v2h2v-2zM372 186v2h2v-2zM372 216v2h2v-2zM374 172v2h2v-2zM374 224v2h2v-2zM376 178v2h1v-2zM376 208v2h1v-2zM377 204v2h1v-2zM377 238v4h1v-4zM380 180v2h2v-2zM382 170v2h1v-2zM383 176v2h1v-2zM383 182v2h1v-2zM383 198v2h1v-2zM383 204v2h1v-2zM383 234v2h1v-2zM389 218v4h1v-4zM395 170v2h1v-2zM395 178v2h1v-2zM396 172v2h2v-2zM396 182v4h2v-4zM398 176v4h2v-4zM398 182v2h2v-2zM398 240v2h2v-2zM398 246v2h2v-2zM400 246v2h1v-2zM401 168v2h1v-2zM404 180v2h2v-2zM404 246v2h2v-2zM407 170v2h1v-2zM407 180v2h1v-2zM408 168v4h2v-4zM408 184v2h2v-2zM412 178v2h1v-2zM412 184v2h1v-2zM413 168v2h1v-2zM413 178v2h1v-2zM413 186v2h1v-2zM414 180v2h2v-2zM418 168v2h1v-2zM418 178v2h1v-2zM418 184v2h1v-2zM419 178v2h1v-2zM419 188v2h1v-2zM422 188v6h2v-6zM424 168v2h1v-2zM424 186v2h1v-2zM425 182v2h1v-2zM425 248v2h1v-2zM426 170v2h2v-2zM426 178v4h2v-4zM426 184v4h2v-4zM428 176v2h2v-2zM428 236v2h2v-2zM430 172v2h1v-2zM431 170v2h1v-2zM434 168v2h2v-2zM434 174v2h2v-2zM434 180v2h2v-2zM436 178v4h1v-4zM437 172v2h1v-2zM446 172v2h2v-2zM446 236v2h2v-2zM446 242v2h2v-2zM456 242v2h2v-2zM456 258v2h2v-2zM460 256v2h1v-2zM468 248v2h2v-2zM470 254v2h2v-2zM472 170v2h1v-2zM476 256v2h2v-2zM484 258v2h1v-2zM491 258v2h1v-2zM502 258v2h1v-2zM503 168v2h1v-2zM503 172v2h1v-2zM503 256v2h1v-2zM506 256v2h2v-2zM508 254v2h1v-2zM509 258v2h1v-2zM510 258v2h2v-2zM512 246v2h2v-2zM515 258v2h1v-2zM524 170v2h2v-2zM524 250v2h2v-2zM524 254v2h2v-2zM526 258v2h1v-2zM538 258v2h1v-2zM544 168v2h1v-2zM544 246v2h1v-2zM545 252v2h1v-2zM550 168v2h1v-2zM551 182v2h1v-2zM552 188v2h2v-2zM552 250v2h2v-2zM552 254v2h2v-2zM558 178v2h2v-2zM558 182v2h2v-2zM563 208v2h1v-2zM564 184v2h2v-2zM564 194v2h2v-2zM564 248v2h2v-2zM566 184v2h2v-2zM568 190v2h1v-2zM569 186v2h1v-2zM576 250v2h2v-2zM578 196v2h2v-2zM584 192v2h2v-2zM588 194v2h2v-2zM588 250v2h2v-2zM593 250v2h1v-2zM604 196v2h1v-2zM604 250v2h1v-2zM606 194v2h2v-2zM608 192v2h2v-2zM614 252v2h2v-2zM620 194v2h2v-2zM623 250v2h1v-2zM634 192v2h1v-2zM635 246v2h1v-2zM640 196v4h1v-4zM642 198v2h2v-2zM642 204v2h2v-2zM642 248v2h2v-2zM646 200v2h1v-2zM648 246v2h2v-2zM648 258v2h2v-2zM650 254v2h2v-2zM658 256v2h1v-2zM660 254v2h2v-2zM671 250v2h1v-2zM671 256v4h1v-4zM672 256v2h2v-2zM678 258v2h2v-2zM701 252v2h1v-2zM365 272h2v2h-2zM365 276h2v2h-2zM367 250h2v2h-2zM367 268h2v2h-2zM367 272h2v2h-2zM369 262h2v2h-2zM371 248h2v2h-2zM375 248h2v2h-2zM377 280h2v2h-2zM379 274h2v2h-2zM381 264h2v2h-2zM383 170h2v2h-2zM383 252h2v2h-2zM383 254h2v2h-2zM383 260h2v2h-2zM385 252h2v2h-2zM387 170h2v2h-2zM387 182h2v2h-2zM387 256h2v2h-2zM389 198h2v2h-2zM391 250h2v2h-2zM391 262h2v2h-2zM395 268h2v2h-2zM399 254h2v2h-2zM401 278h2v2h-2zM401 284h2v2h-2zM403 254h2v2h-2zM403 266h2v2h-2zM403 268h2v2h-2zM403 286h2v2h-2zM405 252h2v2h-2zM405 274h2v2h-2zM409 276h2v2h-2zM409 284h2v2h-2zM415 264h2v2h-2zM415 268h2v2h-2zM419 262h2v2h-2zM421 262h2v2h-2zM423 274h2v2h-2zM423 276h2v2h-2zM427 276h2v2h-2zM429 256h2v2h-2zM429 282h2v2h-2zM431 250h2v2h-2zM431 258h2v2h-2zM431 272h2v2h-2zM435 256h2v2h-2zM435 276h2v2h-2zM435 284h2v2h-2zM437 250h2v2h-2zM437 258h2v2h-2zM437 268h2v2h-2zM439 266h2v2h-2zM439 286h2v2h-2zM441 278h2v2h-2zM445 254h2v2h-2zM445 262h2v2h-2zM445 268h2v2h-2zM447 276h2v2h-2zM447 286h2v2h-2zM449 262h2v2h-2zM449 268h2v2h-2zM449 272h2v2h-2zM451 270h2v2h-2zM451 274h2v2h-2zM453 262h2v2h-2zM453 278h2v2h-2zM453 286h2v2h-2zM459 272h2v2h-2zM461 264h2v2h-2zM461 276h2v2h-2zM463 268h2v2h-2zM463 284h2v2h-2zM467 272h2v2h-2zM467 286h2v2h-2zM469 284h2v2h-2zM471 260h2v2h-2zM471 264h2v2h-2zM473 264h2v2h-2zM473 268h2v2h-2zM477 260h2v2h-2zM477 278h2v2h-2zM479 266h2v2h-2zM483 260h2v2h-2zM483 282h2v2h-2zM485 264h2v2h-2zM485 274h2v2h-2zM487 278h2v2h-2zM489 260h2v2h-2zM489 270h2v2h-2zM489 282h2v2h-2zM491 284h2v2h-2zM493 262h2v2h-2zM493 268h2v2h-2zM493 272h2v2h-2zM497 264h2v2h-2zM503 268h2v2h-2zM503 270h2v2h-2zM503 278h2v2h-2zM503 286h2v2h-2zM505 274h2v2h-2zM507 280h2v2h-2zM509 266h2v2h-2zM509 282h2v2h-2zM511 282h2v2h-2zM511 286h2v2h-2zM517 268h2v2h-2zM517 280h2v2h-2zM519 274h2v2h-2zM521 286h2v2h-2zM523 270h2v2h-2zM523 286h2v2h-2zM525 266h2v2h-2zM527 266h2v2h-2zM527 270h2v2h-2zM531 276h2v2h-2zM533 272h2v2h-2zM537 272h2v2h-2zM539 278h2v2h-2zM541 280h2v2h-2zM543 264h2v2h-2zM543 266h2v2h-2zM543 282h2v2h-2zM545 282h2v2h-2zM547 260h2v2h-2zM547 262h2v2h-2zM553 276h2v2h-2zM553 286h2v2h-2zM557 256h2v2h-2zM557 270h2v2h-2zM557 274h2v2h-2zM559 272h2v2h-2zM561 254h2v2h-2zM561 266h2v2h-2zM565 268h2v2h-2zM565 284h2v2h-2zM567 260h2v2h-2zM567 282h2v2h-2zM569 266h2v2h-2zM571 174h2v2h-2zM571 286h2v2h-2zM573 188h2v2h-2zM579 190h2v2h-2zM579 280h2v2h-2zM581 190h2v2h-2zM581 272h2v2h-2zM583 176h2v2h-2zM583 268h2v2h-2zM585 254h2v2h-2zM587 176h2v2h-2zM587 182h2v2h-2zM595 264h2v2h-2zM597 278h2v2h-2zM599 174h2v2h-2zM601 186h2v2h-2zM603 268h2v2h-2zM605 258h2v2h-2zM607 170h2v2h-2zM607 174h2v2h-2zM609 254h2v2h-2zM611 174h2v2h-2zM611 182h2v2h-2zM613 180h2v2h-2zM613 188h2v2h-2zM613 190h2v2h-2zM615 270h2v2h-2zM619 268h2v2h-2zM621 172h2v2h-2zM621 176h2v2h-2zM623 172h2v2h-2zM627 262h2v2h-2zM627 278h2v2h-2zM631 262h2v2h-2zM633 182h2v2h-2zM633 258h2v2h-2zM633 272h2v2h-2zM639 262h2v2h-2zM639 270h2v2h-2zM641 268h2v2h-2zM641 272h2v2h-2zM641 286h2v2h-2zM643 174h2v2h-2zM645 172h2v2h-2zM645 174h2v2h-2zM647 264h2v2h-2zM651 176h2v2h-2zM651 266h2v2h-2zM653 170h2v2h-2zM653 268h2v2h-2zM653 276h2v2h-2zM653 278h2v2h-2zM657 262h2v2h-2zM659 260h2v2h-2zM669 286h2v2h-2zM673 272h2v2h-2zM675 264h2v2h-2zM679 260h2v2h-2zM679 276h2v2h-2zM685 278h2v2h-2zM689 272h2v2h-2zM695 260h2v2h-2zM701 274h2v2h-2zM703 264h2v2h-2z"/><path fill="#0800ff" d="M366 170v2h2v-2zM366 174v4h2v-4zM366 192v2h2v-2zM366 198v4h2v-4zM366 208v4h2v-4zM368 172v2h2v-2zM368 178v2h2v-2zM368 182v2h2v-2zM368 198v2h2v-2zM368 202v2h2v-2zM368 244v2h2v-2zM370 192v2h1v-2zM371 176v2h1v-2zM371 184v2h1v-2zM371 206v2h1v-2zM371 210v2h1v-2zM371 240v2h1v-2zM372 190v2h2v-2zM372 196v2h2v-2zM372 202v2h2v-2zM372 210v4h2v-4zM372 242v2h2v-2zM372 246v2h2v-2zM374 176v2h2v-2zM374 192v2h2v-2zM374 230v2h2v-2zM376 172v2h1v-2zM376 182v2h1v-2zM376 190v2h1v-2zM376 204v2h1v-2zM376 212v2h1v-2zM376 230v2h1v-2zM376 244v2h1v-2zM377 214v2h1v-2zM380 168v2h2v-2zM380 176v2h2v-2zM380 230v2h2v-2zM382 168v2h1v-2zM382 182v2h1v-2zM382 188v2h1v-2zM382 206v2h1v-2zM382 226v2h1v-2zM383 172v4h1v-4zM383 178v2h1v-2zM383 200v2h1v-2zM383 208v4h1v-4zM383 224v4h1v-4zM386 218v2h2v-2zM389 232v2h1v-2zM390 202v2h2v-2zM392 178v2h2v-2zM394 168v2h1v-2zM394 178v2h1v-2zM396 168v2h2v-2zM396 248v2h2v-2zM398 184v2h2v-2zM398 248v2h2v-2zM400 168v2h1v-2zM401 172v2h1v-2zM401 248v2h1v-2zM404 170v2h2v-2zM406 172v2h1v-2zM406 244v2h1v-2zM407 182v2h1v-2zM407 202v2h1v-2zM407 248v2h1v-2zM408 176v2h2v-2zM408 180v2h2v-2zM410 242v2h2v-2zM412 240v2h1v-2zM413 182v4h1v-4zM413 198v2h1v-2zM414 182v2h2v-2zM414 248v2h2v-2zM416 168v2h2v-2zM416 174v4h2v-4zM416 246v2h2v-2zM418 234v2h1v-2zM419 168v2h1v-2zM419 182v2h1v-2zM420 168v2h2v-2zM422 234v2h2v-2zM422 242v4h2v-4zM424 170v2h1v-2zM424 174v2h1v-2zM426 182v2h2v-2zM426 194v2h2v-2zM426 236v2h2v-2zM426 240v2h2v-2zM430 170v2h1v-2zM430 174v2h1v-2zM430 184v2h1v-2zM432 168v2h2v-2zM432 246v2h2v-2zM434 170v2h2v-2zM434 192v2h2v-2zM436 170v2h1v-2zM436 184v2h1v-2zM437 182v2h1v-2zM437 192v2h1v-2zM438 170v2h2v-2zM438 248v2h2v-2zM440 168v2h2v-2zM440 172v2h2v-2zM443 172v4h1v-4zM443 180v2h1v-2zM444 182v2h2v-2zM444 188v2h2v-2zM446 238v2h2v-2zM452 256v2h2v-2zM454 252v2h1v-2zM458 232v2h2v-2zM458 236v2h2v-2zM460 168v2h1v-2zM462 240v2h2v-2zM462 258v2h2v-2zM466 168v2h1v-2zM467 168v2h1v-2zM467 256v4h1v-4zM468 246v2h2v-2zM470 256v2h2v-2zM472 244v2h1v-2zM472 252v2h1v-2zM472 256v2h1v-2zM478 246v2h1v-2zM478 254v2h1v-2zM479 256v2h1v-2zM492 248v4h2v-4zM506 252v2h2v-2zM509 168v2h1v-2zM509 172v2h1v-2zM512 256v4h2v-4zM515 254v4h1v-4zM520 172v2h1v-2zM521 250v2h1v-2zM522 250v2h2v-2zM524 246v2h2v-2zM527 254v2h1v-2zM528 254v2h2v-2zM530 252v2h2v-2zM530 258v2h2v-2zM532 242v2h1v-2zM532 246v2h1v-2zM532 256v4h1v-4zM533 248v2h1v-2zM533 258v2h1v-2zM534 254v2h2v-2zM538 252v2h1v-2zM539 168v4h1v-4zM539 254v2h1v-2zM542 256v2h2v-2zM544 244v2h1v-2zM544 248v4h1v-4zM548 170v2h2v-2zM550 170v2h1v-2zM551 252v2h1v-2zM554 250v2h2v-2zM556 178v2h1v-2zM556 248v2h1v-2zM557 172v2h1v-2zM557 178v2h1v-2zM557 186v2h1v-2zM558 174v2h2v-2zM558 184v4h2v-4zM558 192v4h2v-4zM558 226v2h2v-2zM558 250v2h2v-2zM560 250v2h2v-2zM562 242v2h1v-2zM563 178v2h1v-2zM563 250v2h1v-2zM564 174v4h2v-4zM564 182v2h2v-2zM564 236v2h2v-2zM566 182v2h2v-2zM566 230v2h2v-2zM566 250v2h2v-2zM568 182v2h1v-2zM568 234v2h1v-2zM570 184v2h2v-2zM570 188v2h2v-2zM570 252v2h2v-2zM574 196v4h1v-4zM574 204v2h1v-2zM575 208v2h1v-2zM575 250v2h1v-2zM576 244v2h2v-2zM578 208v2h2v-2zM578 214v2h2v-2zM580 208v2h1v-2zM580 224v2h1v-2zM580 252v2h1v-2zM581 192v2h1v-2zM582 252v2h2v-2zM592 194v2h1v-2zM594 208v2h2v-2zM594 244v2h2v-2zM594 252v2h2v-2zM599 198v2h1v-2zM605 198v2h1v-2zM605 208v2h1v-2zM605 250v2h1v-2zM608 198v2h2v-2zM608 210v2h2v-2zM608 250v2h2v-2zM610 194v2h1v-2zM611 198v2h1v-2zM611 208v2h1v-2zM617 246v2h1v-2zM617 250v4h1v-4zM618 250v2h2v-2zM622 248v2h1v-2zM623 248v2h1v-2zM624 194v2h2v-2zM629 206v2h1v-2zM630 196v2h2v-2zM630 248v2h2v-2zM635 192v2h1v-2zM636 192v2h2v-2zM638 196v2h2v-2zM638 200v2h2v-2zM638 208v2h2v-2zM640 252v2h1v-2zM641 196v2h1v-2zM647 250v2h1v-2zM648 196v4h2v-4zM648 254v4h2v-4zM650 248v2h2v-2zM654 252v2h2v-2zM658 252v2h1v-2zM659 258v2h1v-2zM660 248v2h2v-2zM674 250v2h2v-2zM678 252v4h2v-4zM680 244v2h2v-2zM680 254v2h2v-2zM683 250v2h1v-2zM689 258v2h1v-2zM698 256v2h2v-2zM701 254v2h1v-2zM706 240v2h1v-2zM365 248h2v2h-2zM365 260h2v2h-2zM367 262h2v2h-2zM369 278h2v2h-2zM371 258h2v2h-2zM373 248h2v2h-2zM373 252h2v2h-2zM373 272h2v2h-2zM373 276h2v2h-2zM373 280h2v2h-2zM375 276h2v2h-2zM375 280h2v2h-2zM377 256h2v2h-2zM377 272h2v2h-2zM379 248h2v2h-2zM381 250h2v2h-2zM381 266h2v2h-2zM383 284h2v2h-2zM385 170h2v2h-2zM385 272h2v2h-2zM387 262h2v2h-2zM387 272h2v2h-2zM389 172h2v2h-2zM389 178h2v2h-2zM389 182h2v2h-2zM389 194h2v2h-2zM389 252h2v2h-2zM391 252h2v2h-2zM391 260h2v2h-2zM393 282h2v2h-2zM395 256h2v2h-2zM403 250h2v2h-2zM403 276h2v2h-2zM407 250h2v2h-2zM407 254h2v2h-2zM409 254h2v2h-2zM411 270h2v2h-2zM415 250h2v2h-2zM417 258h2v2h-2zM419 266h2v2h-2zM425 252h2v2h-2zM425 268h2v2h-2zM425 278h2v2h-2zM427 254h2v2h-2zM427 262h2v2h-2zM431 252h2v2h-2zM431 270h2v2h-2zM431 282h2v2h-2zM433 250h2v2h-2zM433 258h2v2h-2zM435 258h2v2h-2zM435 272h2v2h-2zM439 254h2v2h-2zM441 286h2v2h-2zM443 254h2v2h-2zM443 286h2v2h-2zM447 268h2v2h-2zM449 278h2v2h-2zM451 276h2v2h-2zM453 264h2v2h-2zM453 272h2v2h-2zM453 274h2v2h-2zM455 262h2v2h-2zM455 268h2v2h-2zM457 278h2v2h-2zM459 278h2v2h-2zM461 260h2v2h-2zM461 284h2v2h-2zM463 264h2v2h-2zM467 268h2v2h-2zM467 284h2v2h-2zM471 274h2v2h-2zM473 272h2v2h-2zM479 262h2v2h-2zM479 280h2v2h-2zM481 270h2v2h-2zM481 272h2v2h-2zM485 266h2v2h-2zM491 260h2v2h-2zM493 266h2v2h-2zM499 274h2v2h-2zM503 262h2v2h-2zM503 274h2v2h-2zM503 282h2v2h-2zM507 264h2v2h-2zM509 260h2v2h-2zM509 268h2v2h-2zM509 284h2v2h-2zM511 284h2v2h-2zM513 268h2v2h-2zM515 264h2v2h-2zM515 276h2v2h-2zM519 266h2v2h-2zM521 264h2v2h-2zM521 268h2v2h-2zM521 270h2v2h-2zM521 274h2v2h-2zM527 262h2v2h-2zM529 278h2v2h-2zM539 260h2v2h-2zM539 274h2v2h-2zM543 260h2v2h-2zM543 280h2v2h-2zM545 264h2v2h-2zM547 280h2v2h-2zM553 260h2v2h-2zM553 268h2v2h-2zM555 274h2v2h-2zM557 254h2v2h-2zM559 266h2v2h-2zM563 260h2v2h-2zM563 278h2v2h-2zM565 262h2v2h-2zM567 258h2v2h-2zM569 258h2v2h-2zM569 268h2v2h-2zM569 286h2v2h-2zM571 180h2v2h-2zM571 266h2v2h-2zM573 178h2v2h-2zM573 258h2v2h-2zM575 188h2v2h-2zM575 274h2v2h-2zM575 276h2v2h-2zM577 168h2v2h-2zM579 274h2v2h-2zM579 282h2v2h-2zM581 184h2v2h-2zM581 254h2v2h-2zM581 266h2v2h-2zM581 278h2v2h-2zM581 282h2v2h-2zM583 184h2v2h-2zM583 190h2v2h-2zM583 260h2v2h-2zM585 190h2v2h-2zM585 258h2v2h-2zM585 276h2v2h-2zM585 284h2v2h-2zM585 286h2v2h-2zM589 170h2v2h-2zM589 176h2v2h-2zM589 258h2v2h-2zM589 266h2v2h-2zM591 258h2v2h-2zM591 264h2v2h-2zM591 266h2v2h-2zM591 278h2v2h-2zM593 274h2v2h-2zM595 176h2v2h-2zM595 184h2v2h-2zM595 190h2v2h-2zM597 256h2v2h-2zM597 260h2v2h-2zM597 268h2v2h-2zM599 190h2v2h-2zM599 254h2v2h-2zM599 258h2v2h-2zM601 180h2v2h-2zM601 258h2v2h-2zM601 270h2v2h-2zM601 272h2v2h-2zM601 274h2v2h-2zM603 276h2v2h-2zM607 168h2v2h-2zM609 188h2v2h-2zM611 264h2v2h-2zM613 254h2v2h-2zM613 262h2v2h-2zM613 264h2v2h-2zM613 272h2v2h-2zM617 184h2v2h-2zM619 170h2v2h-2zM619 258h2v2h-2zM621 254h2v2h-2zM621 266h2v2h-2zM621 276h2v2h-2zM623 260h2v2h-2zM623 262h2v2h-2zM623 278h2v2h-2zM623 282h2v2h-2zM625 286h2v2h-2zM627 190h2v2h-2zM627 260h2v2h-2zM627 270h2v2h-2zM629 184h2v2h-2zM631 184h2v2h-2zM633 282h2v2h-2zM635 266h2v2h-2zM635 278h2v2h-2zM635 280h2v2h-2zM637 186h2v2h-2zM637 258h2v2h-2zM641 184h2v2h-2zM641 190h2v2h-2zM641 258h2v2h-2zM643 190h2v2h-2zM647 182h2v2h-2zM651 262h2v2h-2zM651 276h2v2h-2zM661 272h2v2h-2zM663 286h2v2h-2zM667 272h2v2h-2zM667 278h2v2h-2zM669 268h2v2h-2zM673 262h2v2h-2zM673 274h2v2h-2zM673 280h2v2h-2zM675 276h2v2h-2zM677 276h2v2h-2zM679 262h2v2h-2zM679 274h2v2h-2zM681 260h2v2h-2zM681 270h2v2h-2zM681 274h2v2h-2zM681 286h2v2h-2zM683 268h2v2h-2zM687 260h2v2h-2zM687 270h2v2h-2zM687 274h2v2h-2zM689 264h2v2h-2zM691 270h2v2h-2zM693 282h2v2h-2zM695 286h2v2h-2zM703 266h2v2h-2zM703 278h2v2h-2zM703 286h2v2h-2z"/><path fill="#0018ff" d="M365 178v4h1v-4zM365 208v2h1v-2zM365 216v2h1v-2zM365 244v2h1v-2zM366 186v2h2v-2zM366 190v2h2v-2zM366 196v2h2v-2zM366 216v4h2v-4zM368 170v2h2v-2zM368 186v2h2v-2zM368 204v2h2v-2zM370 184v2h1v-2zM370 242v2h1v-2zM371 172v2h1v-2zM371 182v2h1v-2zM371 200v4h1v-4zM371 214v2h1v-2zM371 242v2h1v-2zM372 170v2h2v-2zM372 178v2h2v-2zM372 208v2h2v-2zM372 222v2h2v-2zM372 234v2h2v-2zM372 240v2h2v-2zM374 170v2h2v-2zM374 180v2h2v-2zM374 184v2h2v-2zM374 232v2h2v-2zM376 194v2h1v-2zM376 216v2h1v-2zM376 220v2h1v-2zM377 172v2h1v-2zM377 180v2h1v-2zM377 194v2h1v-2zM378 176v2h2v-2zM380 172v2h2v-2zM380 190v2h2v-2zM380 204v2h2v-2zM380 218v2h2v-2zM380 244v2h2v-2zM382 176v2h1v-2zM382 180v2h1v-2zM382 200v2h1v-2zM382 234v2h1v-2zM383 186v2h1v-2zM383 194v2h1v-2zM383 202v2h1v-2zM383 214v2h1v-2zM383 220v2h1v-2zM383 238v2h1v-2zM383 242v6h1v-6zM384 230v2h2v-2zM390 170v2h2v-2zM390 194v2h2v-2zM394 172v2h1v-2zM394 176v2h1v-2zM394 248v2h1v-2zM396 194v2h2v-2zM396 234v2h2v-2zM396 240v4h2v-4zM398 186v2h2v-2zM406 168v2h1v-2zM406 178v2h1v-2zM406 182v4h1v-4zM407 168v2h1v-2zM407 174v2h1v-2zM408 178v2h2v-2zM408 248v2h2v-2zM410 248v2h2v-2zM412 176v2h1v-2zM412 182v2h1v-2zM412 244v2h1v-2zM413 176v2h1v-2zM413 188v2h1v-2zM413 248v2h1v-2zM414 168v4h2v-4zM414 184v2h2v-2zM416 172v2h2v-2zM416 182v2h2v-2zM418 180v2h1v-2zM418 204v2h1v-2zM418 242v4h1v-4zM419 176v2h1v-2zM419 180v2h1v-2zM419 248v2h1v-2zM420 176v4h2v-4zM422 186v2h2v-2zM422 200v2h2v-2zM422 232v2h2v-2zM422 238v2h2v-2zM424 172v2h1v-2zM424 176v2h1v-2zM424 192v2h1v-2zM424 248v2h1v-2zM425 180v2h1v-2zM425 186v2h1v-2zM425 242v2h1v-2zM426 168v2h2v-2zM426 188v2h2v-2zM426 238v2h2v-2zM428 174v2h2v-2zM428 180v2h2v-2zM428 192v2h2v-2zM428 242v2h2v-2zM430 176v2h1v-2zM430 180v2h1v-2zM430 186v2h1v-2zM430 236v2h1v-2zM431 174v4h1v-4zM432 176v2h2v-2zM432 180v4h2v-4zM434 184v2h2v-2zM434 238v2h2v-2zM436 240v4h1v-4zM436 246v4h1v-4zM437 178v2h1v-2zM437 186v2h1v-2zM437 194v2h1v-2zM438 178v2h2v-2zM438 236v2h2v-2zM440 176v2h2v-2zM440 180v2h2v-2zM440 242v2h2v-2zM440 246v2h2v-2zM442 168v2h1v-2zM442 194v2h1v-2zM443 184v4h1v-4zM444 174v2h2v-2zM444 178v2h2v-2zM444 194v2h2v-2zM444 236v2h2v-2zM446 170v2h2v-2zM448 236v2h1v-2zM448 244v2h1v-2zM448 252v2h1v-2zM456 246v2h2v-2zM458 168v4h2v-4zM458 234v2h2v-2zM458 244v2h2v-2zM458 254v2h2v-2zM460 250v4h1v-4zM462 256v2h2v-2zM467 170v4h1v-4zM467 238v2h1v-2zM467 248v2h1v-2zM467 252v2h1v-2zM468 256v2h2v-2zM470 248v2h2v-2zM472 234v2h1v-2zM473 256v2h1v-2zM476 248v2h2v-2zM476 252v2h2v-2zM478 244v2h1v-2zM478 248v2h1v-2zM478 258v2h1v-2zM479 252v2h1v-2zM482 172v2h2v-2zM482 246v2h2v-2zM482 250v2h2v-2zM484 168v2h1v-2zM484 242v2h1v-2zM485 256v2h1v-2zM486 256v2h2v-2zM488 256v4h2v-4zM491 248v2h1v-2zM492 256v2h2v-2zM494 252v2h2v-2zM494 256v2h2v-2zM496 250v2h1v-2zM497 252v4h1v-4zM498 254v2h2v-2zM502 252v2h1v-2zM503 170v2h1v-2zM503 242v4h1v-4zM504 254v2h2v-2zM506 250v2h2v-2zM506 254v2h2v-2zM508 168v4h1v-4zM509 250v6h1v-6zM518 252v2h2v-2zM520 234v2h1v-2zM520 250v2h1v-2zM521 240v2h1v-2zM524 174v2h2v-2zM536 258v2h2v-2zM538 244v2h1v-2zM539 248v2h1v-2zM540 244v2h2v-2zM540 250v2h2v-2zM542 254v2h2v-2zM544 252v2h1v-2zM545 172v2h1v-2zM545 254v2h1v-2zM546 244v2h2v-2zM546 248v2h2v-2zM546 258v2h2v-2zM548 176v4h2v-4zM548 242v2h2v-2zM548 254v2h2v-2zM550 176v4h1v-4zM551 188v2h1v-2zM551 198v2h1v-2zM551 244v2h1v-2zM552 224v2h2v-2zM552 244v4h2v-4zM554 176v2h2v-2zM556 168v2h1v-2zM557 174v2h1v-2zM558 168v2h2v-2zM558 190v2h2v-2zM558 248v2h2v-2zM562 172v2h1v-2zM563 168v8h1v-8zM563 180v2h1v-2zM563 240v2h1v-2zM564 180v2h2v-2zM564 190v2h2v-2zM564 196v2h2v-2zM564 210v2h2v-2zM564 222v2h2v-2zM566 172v2h2v-2zM568 200v2h1v-2zM568 208v2h1v-2zM568 244v2h1v-2zM569 174v2h1v-2zM569 184v2h1v-2zM569 190v2h1v-2zM569 198v2h1v-2zM569 242v2h1v-2zM570 194v4h2v-4zM570 234v2h2v-2zM574 250v2h1v-2zM575 202v2h1v-2zM576 248v2h2v-2zM576 252v2h2v-2zM578 200v2h2v-2zM580 206v2h1v-2zM581 224v2h1v-2zM584 196v2h2v-2zM584 248v4h2v-4zM586 202v2h1v-2zM586 250v2h1v-2zM587 230v2h1v-2zM588 248v2h2v-2zM593 198v2h1v-2zM594 196v2h2v-2zM594 224v2h2v-2zM594 248v2h2v-2zM596 194v2h2v-2zM596 206v2h2v-2zM596 252v2h2v-2zM598 194v2h1v-2zM602 248v2h2v-2zM602 252v2h2v-2zM604 248v2h1v-2zM605 194v2h1v-2zM605 246v2h1v-2zM606 198v2h2v-2zM608 196v2h2v-2zM608 246v2h2v-2zM610 208v2h1v-2zM610 228v2h1v-2zM610 250v2h1v-2zM611 192v2h1v-2zM611 206v2h1v-2zM611 230v2h1v-2zM611 238v2h1v-2zM612 192v2h2v-2zM612 252v2h2v-2zM618 248v2h2v-2zM622 194v4h1v-4zM622 208v2h1v-2zM622 224v2h1v-2zM624 250v2h2v-2zM626 250v2h2v-2zM628 192v2h1v-2zM628 228v2h1v-2zM628 252v2h1v-2zM629 192v4h1v-4zM629 248v2h1v-2zM632 246v2h2v-2zM634 250v2h1v-2zM635 198v2h1v-2zM635 250v2h1v-2zM636 196v2h2v-2zM638 198v2h2v-2zM638 204v2h2v-2zM640 192v2h1v-2zM640 204v2h1v-2zM641 252v2h1v-2zM642 234v2h2v-2zM646 202v2h1v-2zM648 242v2h2v-2zM648 252v2h2v-2zM652 256v4h1v-4zM653 254v2h1v-2zM654 258v2h2v-2zM659 254v2h1v-2zM662 252v2h2v-2zM665 256v2h1v-2zM668 258v2h2v-2zM672 252v2h2v-2zM674 246v2h2v-2zM674 252v4h2v-4zM676 258v2h1v-2zM677 250v2h1v-2zM682 252v2h1v-2zM686 250v2h2v-2zM698 250v2h2v-2zM698 258v2h2v-2zM700 248v2h1v-2zM701 246v2h1v-2zM702 254v4h2v-4zM706 250v2h1v-2zM706 256v2h1v-2zM367 270h2v2h-2zM367 280h2v2h-2zM367 284h2v2h-2zM369 272h2v2h-2zM371 260h2v2h-2zM373 254h2v2h-2zM373 262h2v2h-2zM375 270h2v2h-2zM377 254h2v2h-2zM377 268h2v2h-2zM377 276h2v2h-2zM383 268h2v2h-2zM385 216h2v2h-2zM385 276h2v2h-2zM385 284h2v2h-2zM387 174h2v2h-2zM387 186h2v2h-2zM387 282h2v2h-2zM389 204h2v2h-2zM389 206h2v2h-2zM389 208h2v2h-2zM389 256h2v2h-2zM389 272h2v2h-2zM393 278h2v2h-2zM395 270h2v2h-2zM395 272h2v2h-2zM405 268h2v2h-2zM405 272h2v2h-2zM407 252h2v2h-2zM407 264h2v2h-2zM407 268h2v2h-2zM411 256h2v2h-2zM415 252h2v2h-2zM415 278h2v2h-2zM415 280h2v2h-2zM415 284h2v2h-2zM417 264h2v2h-2zM419 274h2v2h-2zM421 282h2v2h-2zM423 250h2v2h-2zM423 264h2v2h-2zM423 270h2v2h-2zM423 284h2v2h-2zM427 274h2v2h-2zM429 254h2v2h-2zM433 272h2v2h-2zM433 280h2v2h-2zM439 250h2v2h-2zM439 276h2v2h-2zM441 262h2v2h-2zM441 284h2v2h-2zM443 258h2v2h-2zM443 264h2v2h-2zM445 284h2v2h-2zM449 282h2v2h-2zM465 268h2v2h-2zM465 278h2v2h-2zM467 270h2v2h-2zM471 262h2v2h-2zM475 264h2v2h-2zM477 272h2v2h-2zM479 268h2v2h-2zM483 270h2v2h-2zM485 262h2v2h-2zM485 278h2v2h-2zM487 266h2v2h-2zM487 268h2v2h-2zM489 284h2v2h-2zM489 286h2v2h-2zM491 264h2v2h-2zM493 270h2v2h-2zM495 272h2v2h-2zM497 262h2v2h-2zM501 262h2v2h-2zM501 278h2v2h-2zM501 282h2v2h-2zM503 260h2v2h-2zM505 282h2v2h-2zM507 260h2v2h-2zM507 270h2v2h-2zM511 262h2v2h-2zM513 282h2v2h-2zM515 282h2v2h-2zM517 266h2v2h-2zM525 264h2v2h-2zM525 268h2v2h-2zM525 282h2v2h-2zM529 264h2v2h-2zM531 262h2v2h-2zM531 280h2v2h-2zM533 262h2v2h-2zM533 282h2v2h-2zM535 264h2v2h-2zM535 270h2v2h-2zM535 274h2v2h-2zM543 278h2v2h-2zM545 268h2v2h-2zM545 272h2v2h-2zM547 276h2v2h-2zM549 262h2v2h-2zM549 284h2v2h-2zM553 256h2v2h-2zM553 258h2v2h-2zM553 264h2v2h-2zM553 266h2v2h-2zM555 266h2v2h-2zM555 268h2v2h-2zM555 278h2v2h-2zM555 286h2v2h-2zM557 258h2v2h-2zM557 260h2v2h-2zM559 274h2v2h-2zM561 256h2v2h-2zM561 264h2v2h-2zM561 278h2v2h-2zM563 256h2v2h-2zM563 262h2v2h-2zM563 272h2v2h-2zM567 268h2v2h-2zM569 176h2v2h-2zM571 176h2v2h-2zM571 184h2v2h-2zM573 272h2v2h-2zM575 168h2v2h-2zM575 258h2v2h-2zM575 268h2v2h-2zM577 172h2v2h-2zM577 276h2v2h-2zM579 188h2v2h-2zM579 260h2v2h-2zM579 276h2v2h-2zM581 268h2v2h-2zM583 258h2v2h-2zM587 262h2v2h-2zM587 266h2v2h-2zM591 174h2v2h-2zM591 254h2v2h-2zM593 174h2v2h-2zM593 186h2v2h-2zM593 258h2v2h-2zM593 262h2v2h-2zM595 254h2v2h-2zM595 274h2v2h-2zM597 170h2v2h-2zM597 176h2v2h-2zM597 262h2v2h-2zM599 170h2v2h-2zM607 274h2v2h-2zM609 168h2v2h-2zM615 268h2v2h-2zM615 280h2v2h-2zM617 268h2v2h-2zM619 172h2v2h-2zM619 182h2v2h-2zM621 186h2v2h-2zM623 174h2v2h-2zM623 258h2v2h-2zM623 284h2v2h-2zM627 266h2v2h-2zM629 174h2v2h-2zM631 172h2v2h-2zM631 174h2v2h-2zM631 254h2v2h-2zM631 258h2v2h-2zM635 264h2v2h-2zM639 182h2v2h-2zM639 254h2v2h-2zM645 270h2v2h-2zM645 280h2v2h-2zM647 178h2v2h-2zM649 176h2v2h-2zM649 188h2v2h-2zM651 264h2v2h-2zM651 268h2v2h-2zM653 266h2v2h-2zM653 274h2v2h-2zM653 280h2v2h-2zM655 262h2v2h-2zM661 280h2v2h-2zM663 264h2v2h-2zM663 274h2v2h-2zM667 266h2v2h-2zM667 274h2v2h-2zM669 264h2v2h-2zM671 274h2v2h-2zM677 272h2v2h-2zM677 274h2v2h-2zM683 264h2v2h-2zM683 284h2v2h-2zM683 286h2v2h-2zM685 260h2v2h-2zM685 282h2v2h-2zM689 268h2v2h-2zM691 266h2v2h-2zM693 276h2v2h-2zM695 268h2v2h-2zM695 270h2v2h-2zM697 280h2v2h-2zM699 272h2v2h-2zM699 278h2v2h-2zM699 280h2v2h-2zM705 270h2v2h-2zM705 280h2v2h-2z"/><path fill="#0040ff" d="M365 174v2h1v-2zM365 226v2h1v-2zM365 234v2h1v-2zM365 240v2h1v-2zM366 182v2h2v-2zM366 194v2h2v-2zM366 202v2h2v-2zM368 174v2h2v-2zM368 200v2h2v-2zM368 206v2h2v-2zM368 220v2h2v-2zM368 224v4h2v-4zM370 172v2h1v-2zM370 182v2h1v-2zM370 186v2h1v-2zM370 204v2h1v-2zM370 212v2h1v-2zM370 216v2h1v-2zM370 238v2h1v-2zM371 190v2h1v-2zM371 198v2h1v-2zM371 212v2h1v-2zM371 216v2h1v-2zM371 238v2h1v-2zM372 182v2h2v-2zM372 192v2h2v-2zM372 200v2h2v-2zM372 218v2h2v-2zM372 230v4h2v-4zM372 244v2h2v-2zM374 188v4h2v-4zM374 196v4h2v-4zM374 204v2h2v-2zM374 208v4h2v-4zM374 214v2h2v-2zM374 218v2h2v-2zM374 222v2h2v-2zM374 234v2h2v-2zM376 192v2h1v-2zM376 202v2h1v-2zM376 218v2h1v-2zM376 234v2h1v-2zM377 170v2h1v-2zM377 186v2h1v-2zM377 192v2h1v-2zM378 186v2h2v-2zM378 192v4h2v-4zM378 242v2h2v-2zM378 246v2h2v-2zM380 174v2h2v-2zM380 178v2h2v-2zM380 198v4h2v-4zM380 232v2h2v-2zM380 246v2h2v-2zM382 194v2h1v-2zM382 198v2h1v-2zM382 212v2h1v-2zM383 196v2h1v-2zM383 216v2h1v-2zM383 230v4h1v-4zM383 236v2h1v-2zM384 244v2h2v-2zM386 248v2h2v-2zM388 224v2h1v-2zM388 232v2h1v-2zM388 248v2h1v-2zM389 238v2h1v-2zM389 248v2h1v-2zM390 180v2h2v-2zM390 192v2h2v-2zM390 246v2h2v-2zM392 188v2h2v-2zM392 238v2h2v-2zM394 182v6h1v-6zM395 246v4h1v-4zM396 238v2h2v-2zM398 228v2h2v-2zM398 242v2h2v-2zM401 184v2h1v-2zM402 174v2h2v-2zM402 180v2h2v-2zM404 168v2h2v-2zM404 172v2h2v-2zM404 178v2h2v-2zM404 186v2h2v-2zM406 186v2h1v-2zM406 190v2h1v-2zM406 238v4h1v-4zM407 172v2h1v-2zM407 184v2h1v-2zM407 238v2h1v-2zM407 246v2h1v-2zM410 168v2h2v-2zM410 172v2h2v-2zM410 176v4h2v-4zM410 182v4h2v-4zM410 244v2h2v-2zM412 242v2h1v-2zM412 248v2h1v-2zM413 192v2h1v-2zM413 228v2h1v-2zM414 200v2h2v-2zM416 170v2h2v-2zM416 188v2h2v-2zM418 186v2h1v-2zM418 190v2h1v-2zM419 172v2h1v-2zM419 242v2h1v-2zM420 180v2h2v-2zM420 186v2h2v-2zM422 180v2h2v-2zM422 202v2h2v-2zM424 178v2h1v-2zM425 170v2h1v-2zM425 184v2h1v-2zM425 192v2h1v-2zM425 240v2h1v-2zM425 244v2h1v-2zM426 190v2h2v-2zM426 198v4h2v-4zM426 206v2h2v-2zM428 196v2h2v-2zM430 168v2h1v-2zM430 228v2h1v-2zM430 248v2h1v-2zM431 172v2h1v-2zM432 186v4h2v-4zM432 238v2h2v-2zM432 248v2h2v-2zM434 178v2h2v-2zM434 182v2h2v-2zM434 190v2h2v-2zM434 236v2h2v-2zM434 246v2h2v-2zM436 190v2h1v-2zM436 236v2h1v-2zM436 244v2h1v-2zM437 184v2h1v-2zM437 188v2h1v-2zM437 230v4h1v-4zM438 172v2h2v-2zM438 194v2h2v-2zM438 244v2h2v-2zM440 182v2h2v-2zM440 186v2h2v-2zM440 190v2h2v-2zM440 244v2h2v-2zM442 172v4h1v-4zM442 178v2h1v-2zM442 182v2h1v-2zM443 198v2h1v-2zM444 184v4h2v-4zM444 240v2h2v-2zM444 244v2h2v-2zM446 254v2h2v-2zM448 168v2h1v-2zM449 258v2h1v-2zM450 252v2h2v-2zM454 168v2h1v-2zM454 250v2h1v-2zM454 254v2h1v-2zM455 258v2h1v-2zM456 250v2h2v-2zM458 172v2h2v-2zM460 236v2h1v-2zM460 242v2h1v-2zM460 248v2h1v-2zM462 250v2h2v-2zM464 246v2h2v-2zM464 256v2h2v-2zM466 226v2h1v-2zM468 254v2h2v-2zM468 258v2h2v-2zM470 168v2h2v-2zM470 236v2h2v-2zM470 258v2h2v-2zM472 232v2h1v-2zM472 236v2h1v-2zM472 242v2h1v-2zM474 258v2h2v-2zM478 168v2h1v-2zM478 236v2h1v-2zM478 250v4h1v-4zM479 244v2h1v-2zM479 250v2h1v-2zM482 168v2h2v-2zM482 244v2h2v-2zM484 250v4h1v-4zM485 246v2h1v-2zM486 172v2h2v-2zM486 240v2h2v-2zM488 250v2h2v-2zM490 254v2h1v-2zM498 244v2h2v-2zM498 258v2h2v-2zM502 168v2h1v-2zM502 244v2h1v-2zM502 248v2h1v-2zM503 246v2h1v-2zM503 252v2h1v-2zM504 238v2h2v-2zM504 246v2h2v-2zM504 252v2h2v-2zM506 242v2h2v-2zM506 246v2h2v-2zM508 172v2h1v-2zM508 248v2h1v-2zM509 170v2h1v-2zM509 242v4h1v-4zM510 238v2h2v-2zM510 256v2h2v-2zM512 236v2h2v-2zM518 248v2h2v-2zM518 256v4h2v-4zM520 232v2h1v-2zM520 244v4h1v-4zM520 252v2h1v-2zM521 246v2h1v-2zM521 256v2h1v-2zM522 228v2h2v-2zM522 254v4h2v-4zM524 244v2h2v-2zM524 248v2h2v-2zM526 254v2h1v-2zM527 256v2h1v-2zM528 248v2h2v-2zM530 250v2h2v-2zM532 244v2h1v-2zM536 244v2h2v-2zM536 254v2h2v-2zM539 246v2h1v-2zM540 168v2h2v-2zM542 238v4h2v-4zM542 252v2h2v-2zM544 258v2h1v-2zM545 174v2h1v-2zM545 238v2h1v-2zM545 248v2h1v-2zM546 168v2h2v-2zM546 242v2h2v-2zM548 246v2h2v-2zM550 180v2h1v-2zM550 186v2h1v-2zM551 170v2h1v-2zM551 186v2h1v-2zM551 248v2h1v-2zM552 182v2h2v-2zM552 186v2h2v-2zM552 190v2h2v-2zM554 168v2h2v-2zM556 180v4h1v-4zM557 176v2h1v-2zM558 170v2h2v-2zM558 224v2h2v-2zM560 176v2h2v-2zM560 182v2h2v-2zM562 210v2h1v-2zM563 182v4h1v-4zM564 232v4h2v-4zM564 240v2h2v-2zM566 190v2h2v-2zM566 204v2h2v-2zM566 234v2h2v-2zM566 238v2h2v-2zM566 242v2h2v-2zM566 248v2h2v-2zM568 194v4h1v-4zM568 224v2h1v-2zM568 230v2h1v-2zM568 242v2h1v-2zM568 246v2h1v-2zM569 182v2h1v-2zM569 240v2h1v-2zM569 248v4h1v-4zM570 198v2h2v-2zM570 208v2h2v-2zM570 236v2h2v-2zM570 240v4h2v-4zM574 234v2h1v-2zM575 192v2h1v-2zM576 226v2h2v-2zM578 210v2h2v-2zM578 246v4h2v-4zM580 196v2h1v-2zM580 200v2h1v-2zM580 204v2h1v-2zM580 236v2h1v-2zM581 194v2h1v-2zM581 198v4h1v-4zM581 208v2h1v-2zM581 252v2h1v-2zM586 206v2h1v-2zM587 198v2h1v-2zM587 202v2h1v-2zM587 242v2h1v-2zM587 246v2h1v-2zM587 252v2h1v-2zM588 196v2h2v-2zM588 206v2h2v-2zM588 232v2h2v-2zM590 194v2h2v-2zM590 200v2h2v-2zM590 244v2h2v-2zM590 252v2h2v-2zM592 250v2h1v-2zM594 206v2h2v-2zM600 200v2h2v-2zM604 200v2h1v-2zM604 206v2h1v-2zM604 210v2h1v-2zM604 238v2h1v-2zM606 192v2h2v-2zM606 250v2h2v-2zM610 192v2h1v-2zM610 196v2h1v-2zM610 248v2h1v-2zM611 224v2h1v-2zM611 228v2h1v-2zM611 250v2h1v-2zM612 194v2h2v-2zM614 202v2h2v-2zM614 240v2h2v-2zM616 250v2h1v-2zM617 196v2h1v-2zM617 208v2h1v-2zM622 198v2h1v-2zM622 202v2h1v-2zM622 206v2h1v-2zM622 238v2h1v-2zM623 200v2h1v-2zM623 206v2h1v-2zM623 210v2h1v-2zM623 246v2h1v-2zM624 208v2h2v-2zM626 208v2h2v-2zM628 206v2h1v-2zM630 194v2h2v-2zM630 208v2h2v-2zM632 192v4h2v-4zM632 204v2h2v-2zM634 194v2h1v-2zM634 252v2h1v-2zM635 200v2h1v-2zM636 194v2h2v-2zM636 246v4h2v-4zM638 206v2h2v-2zM638 252v2h2v-2zM641 192v2h1v-2zM641 250v2h1v-2zM642 200v4h2v-4zM642 208v2h2v-2zM642 226v2h2v-2zM642 246v2h2v-2zM646 242v2h1v-2zM646 256v2h1v-2zM647 200v2h1v-2zM647 206v2h1v-2zM652 252v2h1v-2zM664 250v2h1v-2zM664 258v2h1v-2zM666 248v2h2v-2zM666 254v2h2v-2zM670 254v2h1v-2zM671 246v2h1v-2zM672 254v2h2v-2zM678 236v2h2v-2zM680 250v4h2v-4zM683 256v2h1v-2zM695 248v2h1v-2zM696 246v2h2v-2zM696 254v2h2v-2zM698 252v2h2v-2zM701 258v2h1v-2zM706 244v2h1v-2zM365 250h2v2h-2zM365 280h2v2h-2zM367 264h2v2h-2zM367 282h2v2h-2zM369 248h2v2h-2zM369 282h2v2h-2zM373 264h2v2h-2zM379 258h2v2h-2zM383 270h2v2h-2zM385 270h2v2h-2zM387 216h2v2h-2zM387 250h2v2h-2zM387 252h2v2h-2zM389 200h2v2h-2zM389 264h2v2h-2zM395 250h2v2h-2zM397 274h2v2h-2zM401 252h2v2h-2zM403 282h2v2h-2zM409 252h2v2h-2zM415 254h2v2h-2zM417 280h2v2h-2zM423 278h2v2h-2zM425 272h2v2h-2zM425 282h2v2h-2zM427 264h2v2h-2zM431 262h2v2h-2zM433 278h2v2h-2zM435 286h2v2h-2zM441 252h2v2h-2zM443 256h2v2h-2zM445 266h2v2h-2zM447 274h2v2h-2zM447 284h2v2h-2zM449 264h2v2h-2zM451 260h2v2h-2zM455 260h2v2h-2zM455 264h2v2h-2zM457 262h2v2h-2zM457 268h2v2h-2zM457 274h2v2h-2zM461 278h2v2h-2zM463 262h2v2h-2zM463 270h2v2h-2zM465 264h2v2h-2zM467 260h2v2h-2zM469 264h2v2h-2zM469 276h2v2h-2zM469 282h2v2h-2zM471 266h2v2h-2zM471 272h2v2h-2zM475 268h2v2h-2zM475 270h2v2h-2zM479 276h2v2h-2zM481 262h2v2h-2zM483 262h2v2h-2zM487 260h2v2h-2zM487 262h2v2h-2zM487 282h2v2h-2zM489 272h2v2h-2zM497 278h2v2h-2zM501 264h2v2h-2zM507 262h2v2h-2zM509 274h2v2h-2zM513 262h2v2h-2zM513 274h2v2h-2zM521 260h2v2h-2zM521 266h2v2h-2zM523 262h2v2h-2zM525 284h2v2h-2zM549 264h2v2h-2zM555 254h2v2h-2zM561 272h2v2h-2zM565 256h2v2h-2zM569 280h2v2h-2zM571 188h2v2h-2zM573 176h2v2h-2zM573 268h2v2h-2zM575 172h2v2h-2zM577 182h2v2h-2zM579 266h2v2h-2zM583 286h2v2h-2zM587 282h2v2h-2zM589 264h2v2h-2zM591 274h2v2h-2zM593 168h2v2h-2zM593 184h2v2h-2zM595 278h2v2h-2zM597 254h2v2h-2zM599 260h2v2h-2zM601 268h2v2h-2zM603 182h2v2h-2zM609 184h2v2h-2zM609 262h2v2h-2zM611 168h2v2h-2zM611 254h2v2h-2zM611 286h2v2h-2zM615 260h2v2h-2zM617 254h2v2h-2zM617 256h2v2h-2zM621 256h2v2h-2zM625 276h2v2h-2zM625 282h2v2h-2zM627 256h2v2h-2zM627 280h2v2h-2zM631 268h2v2h-2zM631 272h2v2h-2zM639 256h2v2h-2zM641 188h2v2h-2zM641 262h2v2h-2zM645 260h2v2h-2zM645 284h2v2h-2zM647 170h2v2h-2zM647 270h2v2h-2zM651 180h2v2h-2zM651 186h2v2h-2zM651 260h2v2h-2zM651 286h2v2h-2zM655 178h2v2h-2zM659 264h2v2h-2zM659 270h2v2h-2zM663 268h2v2h-2zM663 270h2v2h-2zM663 284h2v2h-2zM669 276h2v2h-2zM677 266h2v2h-2zM679 280h2v2h-2zM687 262h2v2h-2zM687 280h2v2h-2zM691 280h2v2h-2zM693 266h2v2h-2zM693 272h2v2h-2zM695 266h2v2h-2zM697 260h2v2h-2zM697 262h2v2h-2zM701 260h2v2h-2z"/><path fill="#0068ff" d="M365 176v2h1v-2zM365 186v2h1v-2zM365 192v2h1v-2zM365 220v2h1v-2zM365 228v2h1v-2zM365 232v2h1v-2zM366 228v2h2v-2zM366 244v2h2v-2zM368 180v2h2v-2zM368 188v2h2v-2zM368 196v2h2v-2zM368 232v2h2v-2zM370 170v2h1v-2zM370 176v2h1v-2zM370 188v2h1v-2zM370 200v2h1v-2zM370 206v2h1v-2zM370 214v2h1v-2zM370 220v2h1v-2zM371 204v2h1v-2zM371 208v2h1v-2zM371 232v2h1v-2zM372 194v2h2v-2zM372 228v2h2v-2zM372 236v2h2v-2zM374 174v2h2v-2zM374 200v2h2v-2zM374 212v2h2v-2zM374 236v2h2v-2zM374 244v2h2v-2zM376 176v2h1v-2zM376 184v2h1v-2zM376 196v2h1v-2zM376 200v2h1v-2zM376 210v2h1v-2zM376 214v2h1v-2zM376 240v4h1v-4zM377 182v4h1v-4zM377 200v2h1v-2zM377 232v2h1v-2zM378 170v2h2v-2zM378 182v2h2v-2zM378 196v4h2v-4zM378 214v2h2v-2zM378 226v2h2v-2zM380 184v2h2v-2zM380 188v2h2v-2zM380 202v2h2v-2zM380 216v2h2v-2zM380 220v6h2v-6zM380 242v2h2v-2zM382 184v2h1v-2zM382 202v2h1v-2zM382 210v2h1v-2zM382 240v2h1v-2zM382 244v2h1v-2zM383 222v2h1v-2zM384 222v2h2v-2zM384 234v2h2v-2zM384 240v2h2v-2zM386 242v2h2v-2zM386 246v2h2v-2zM388 226v2h1v-2zM388 230v2h1v-2zM389 234v2h1v-2zM389 242v2h1v-2zM390 184v2h2v-2zM390 218v2h2v-2zM390 238v2h2v-2zM390 242v2h2v-2zM392 172v4h2v-4zM392 182v2h2v-2zM394 170v2h1v-2zM394 188v2h1v-2zM395 168v2h1v-2zM395 174v2h1v-2zM395 180v2h1v-2zM395 184v6h1v-6zM395 244v2h1v-2zM396 192v2h2v-2zM396 198v2h2v-2zM396 210v2h2v-2zM396 216v2h2v-2zM398 172v2h2v-2zM398 188v2h2v-2zM398 196v2h2v-2zM398 220v2h2v-2zM398 226v2h2v-2zM398 232v2h2v-2zM401 244v2h1v-2zM402 176v2h2v-2zM404 174v2h2v-2zM404 238v2h2v-2zM404 244v2h2v-2zM404 248v2h2v-2zM406 196v2h1v-2zM406 242v2h1v-2zM407 234v2h1v-2zM408 182v2h2v-2zM408 200v2h2v-2zM410 170v2h2v-2zM410 192v2h2v-2zM410 232v2h2v-2zM412 170v2h1v-2zM412 190v2h1v-2zM412 194v2h1v-2zM412 224v2h1v-2zM412 238v2h1v-2zM413 200v2h1v-2zM414 176v2h2v-2zM414 188v4h2v-4zM414 196v2h2v-2zM414 242v2h2v-2zM416 178v2h2v-2zM416 186v2h2v-2zM416 236v2h2v-2zM416 240v2h2v-2zM416 244v2h2v-2zM418 194v4h1v-4zM418 236v2h1v-2zM418 240v2h1v-2zM418 246v2h1v-2zM419 186v2h1v-2zM419 244v2h1v-2zM420 184v2h2v-2zM420 190v2h2v-2zM420 228v2h2v-2zM422 194v2h2v-2zM422 208v2h2v-2zM422 214v2h2v-2zM422 226v2h2v-2zM422 240v2h2v-2zM424 180v2h1v-2zM424 184v2h1v-2zM424 246v2h1v-2zM425 174v2h1v-2zM425 188v2h1v-2zM425 194v4h1v-4zM425 236v2h1v-2zM426 192v2h2v-2zM426 196v2h2v-2zM426 218v2h2v-2zM426 222v2h2v-2zM426 232v2h2v-2zM426 244v2h2v-2zM428 178v2h2v-2zM428 184v2h2v-2zM428 240v2h2v-2zM428 248v2h2v-2zM430 182v2h1v-2zM430 246v2h1v-2zM431 182v4h1v-4zM431 246v2h1v-2zM432 196v2h2v-2zM434 172v2h2v-2zM434 242v2h2v-2zM436 172v2h1v-2zM436 186v2h1v-2zM436 230v2h1v-2zM437 226v2h1v-2zM437 236v2h1v-2zM438 174v2h2v-2zM438 188v2h2v-2zM440 196v2h2v-2zM442 190v2h1v-2zM442 244v2h1v-2zM443 182v2h1v-2zM443 188v2h1v-2zM443 242v2h1v-2zM443 248v2h1v-2zM444 192v2h2v-2zM444 234v2h2v-2zM444 248v2h2v-2zM446 174v2h2v-2zM446 226v4h2v-4zM446 244v4h2v-4zM449 250v2h1v-2zM450 238v2h2v-2zM450 256v2h2v-2zM454 172v2h1v-2zM454 244v2h1v-2zM454 248v2h1v-2zM455 240v2h1v-2zM455 252v4h1v-4zM456 234v4h2v-4zM458 250v2h2v-2zM458 256v2h2v-2zM460 238v2h1v-2zM462 238v2h2v-2zM462 244v2h2v-2zM462 248v2h2v-2zM462 252v4h2v-4zM464 170v2h2v-2zM464 240v2h2v-2zM464 248v4h2v-4zM466 172v2h1v-2zM466 238v4h1v-4zM467 236v2h1v-2zM467 242v2h1v-2zM468 252v2h2v-2zM470 250v4h2v-4zM472 174v2h1v-2zM473 252v2h1v-2zM474 168v2h2v-2zM474 236v2h2v-2zM474 252v2h2v-2zM476 242v4h2v-4zM476 258v2h2v-2zM478 238v2h1v-2zM478 256v2h1v-2zM482 240v4h2v-4zM484 228v2h1v-2zM484 238v2h1v-2zM485 168v2h1v-2zM485 234v2h1v-2zM485 240v2h1v-2zM485 254v2h1v-2zM486 244v2h2v-2zM491 244v2h1v-2zM491 252v2h1v-2zM492 168v4h2v-4zM494 254v2h2v-2zM496 242v2h1v-2zM496 254v2h1v-2zM497 244v2h1v-2zM497 248v2h1v-2zM500 242v4h2v-4zM502 242v2h1v-2zM503 236v2h1v-2zM503 240v2h1v-2zM504 244v2h2v-2zM504 250v2h2v-2zM504 256v2h2v-2zM508 174v2h1v-2zM508 244v4h1v-4zM509 248v2h1v-2zM512 244v2h2v-2zM512 248v2h2v-2zM515 240v2h1v-2zM516 238v2h2v-2zM516 242v2h2v-2zM516 250v4h2v-4zM518 234v2h2v-2zM520 168v2h1v-2zM520 174v2h1v-2zM520 254v2h1v-2zM521 238v2h1v-2zM521 244v2h1v-2zM521 252v2h1v-2zM522 244v2h2v-2zM522 258v2h2v-2zM524 232v4h2v-4zM524 252v2h2v-2zM526 248v2h1v-2zM528 246v2h2v-2zM530 242v2h2v-2zM533 250v4h1v-4zM534 242v2h2v-2zM534 250v2h2v-2zM536 248v2h2v-2zM536 252v2h2v-2zM538 168v2h1v-2zM538 172v2h1v-2zM538 240v4h1v-4zM538 248v2h1v-2zM539 172v2h1v-2zM539 238v2h1v-2zM540 248v2h2v-2zM542 172v2h2v-2zM542 246v4h2v-4zM544 170v4h1v-4zM545 240v4h1v-4zM546 230v2h2v-2zM548 172v2h2v-2zM550 174v2h1v-2zM551 184v2h1v-2zM551 214v2h1v-2zM552 194v2h2v-2zM552 206v2h2v-2zM554 174v2h2v-2zM554 182v2h2v-2zM554 240v2h2v-2zM556 174v2h1v-2zM556 190v2h1v-2zM556 200v2h1v-2zM556 244v2h1v-2zM557 188v2h1v-2zM558 176v2h2v-2zM558 238v6h2v-6zM560 180v2h2v-2zM560 188v2h2v-2zM560 196v2h2v-2zM562 184v4h1v-4zM562 190v2h1v-2zM562 246v2h1v-2zM563 224v2h1v-2zM563 234v2h1v-2zM564 168v2h2v-2zM564 178v2h2v-2zM564 200v2h2v-2zM564 244v2h2v-2zM564 250v2h2v-2zM566 196v4h2v-4zM566 226v2h2v-2zM566 240v2h2v-2zM566 244v2h2v-2zM568 202v2h1v-2zM568 212v2h1v-2zM568 220v2h1v-2zM568 236v2h1v-2zM569 178v2h1v-2zM570 200v2h2v-2zM570 204v4h2v-4zM570 246v2h2v-2zM574 194v2h1v-2zM574 208v2h1v-2zM574 212v2h1v-2zM575 198v2h1v-2zM576 196v2h2v-2zM576 206v2h2v-2zM576 242v2h2v-2zM578 198v2h2v-2zM580 230v2h1v-2zM580 250v2h1v-2zM581 212v2h1v-2zM582 194v2h2v-2zM582 202v2h2v-2zM582 244v4h2v-4zM584 242v2h2v-2zM586 192v2h1v-2zM586 196v2h1v-2zM586 220v2h1v-2zM586 248v2h1v-2zM587 194v2h1v-2zM588 198v2h2v-2zM588 204v2h2v-2zM590 198v2h2v-2zM590 202v4h2v-4zM590 212v2h2v-2zM590 226v2h2v-2zM590 250v2h2v-2zM593 206v2h1v-2zM593 252v2h1v-2zM594 194v2h2v-2zM594 198v4h2v-4zM594 218v2h2v-2zM594 230v2h2v-2zM596 204v2h2v-2zM598 202v2h1v-2zM598 206v2h1v-2zM600 194v2h2v-2zM600 204v4h2v-4zM602 204v2h2v-2zM604 198v2h1v-2zM604 208v2h1v-2zM604 246v2h1v-2zM605 216v2h1v-2zM605 228v2h1v-2zM605 252v2h1v-2zM606 204v2h2v-2zM608 216v2h2v-2zM608 248v2h2v-2zM610 234v2h1v-2zM611 196v2h1v-2zM611 202v2h1v-2zM611 216v2h1v-2zM611 236v2h1v-2zM611 246v2h1v-2zM612 208v2h2v-2zM612 248v2h2v-2zM614 242v2h2v-2zM614 250v2h2v-2zM616 194v2h1v-2zM616 198v2h1v-2zM616 248v2h1v-2zM617 200v2h1v-2zM617 248v2h1v-2zM618 194v2h2v-2zM620 202v2h2v-2zM620 208v2h2v-2zM620 248v2h2v-2zM622 200v2h1v-2zM622 204v2h1v-2zM623 196v2h1v-2zM623 208v2h1v-2zM623 226v2h1v-2zM623 244v2h1v-2zM624 196v2h2v-2zM626 230v2h2v-2zM628 194v2h1v-2zM628 202v2h1v-2zM628 248v2h1v-2zM629 232v2h1v-2zM632 198v2h2v-2zM632 202v2h2v-2zM632 250v2h2v-2zM634 240v2h1v-2zM635 196v2h1v-2zM635 202v2h1v-2zM636 206v2h2v-2zM638 202v2h2v-2zM638 248v2h2v-2zM640 206v2h1v-2zM641 206v2h1v-2zM641 240v2h1v-2zM642 206v2h2v-2zM642 232v2h2v-2zM644 196v2h2v-2zM644 254v2h2v-2zM646 194v4h1v-4zM646 206v2h1v-2zM646 250v4h1v-4zM647 248v2h1v-2zM647 254v2h1v-2zM648 202v4h2v-4zM648 208v2h2v-2zM650 196v2h2v-2zM650 250v2h2v-2zM652 244v2h1v-2zM654 242v2h2v-2zM656 254v2h2v-2zM658 168v2h1v-2zM658 244v2h1v-2zM658 254v2h1v-2zM659 236v2h1v-2zM659 250v2h1v-2zM665 254v2h1v-2zM670 256v2h1v-2zM674 258v2h2v-2zM677 256v2h1v-2zM680 256v4h2v-4zM682 256v2h1v-2zM683 246v2h1v-2zM683 252v4h1v-4zM684 242v2h2v-2zM684 252v2h2v-2zM688 246v2h1v-2zM689 252v2h1v-2zM689 256v2h1v-2zM690 258v2h2v-2zM692 250v4h2v-4zM694 244v2h1v-2zM696 258v2h2v-2zM698 248v2h2v-2zM698 254v2h2v-2zM702 252v2h2v-2zM704 258v2h2v-2zM367 248h2v2h-2zM375 252h2v2h-2zM385 278h2v2h-2zM387 270h2v2h-2zM397 276h2v2h-2zM405 250h2v2h-2zM419 250h2v2h-2zM423 268h2v2h-2zM427 260h2v2h-2zM429 266h2v2h-2zM435 252h2v2h-2zM441 250h2v2h-2zM451 262h2v2h-2zM457 260h2v2h-2zM457 286h2v2h-2zM459 260h2v2h-2zM463 272h2v2h-2zM473 270h2v2h-2zM475 260h2v2h-2zM489 278h2v2h-2zM491 266h2v2h-2zM499 266h2v2h-2zM511 272h2v2h-2zM521 262h2v2h-2zM523 260h2v2h-2zM525 272h2v2h-2zM531 266h2v2h-2zM537 284h2v2h-2zM549 260h2v2h-2zM551 264h2v2h-2zM557 264h2v2h-2zM559 282h2v2h-2zM573 262h2v2h-2zM575 270h2v2h-2zM583 270h2v2h-2zM607 254h2v2h-2zM607 266h2v2h-2zM607 272h2v2h-2zM611 190h2v2h-2zM615 276h2v2h-2zM627 180h2v2h-2zM631 286h2v2h-2zM645 188h2v2h-2zM645 190h2v2h-2zM647 262h2v2h-2zM649 190h2v2h-2zM649 262h2v2h-2zM649 268h2v2h-2zM649 270h2v2h-2zM651 272h2v2h-2zM653 260h2v2h-2zM655 274h2v2h-2zM659 272h2v2h-2zM661 274h2v2h-2zM665 262h2v2h-2zM667 260h2v2h-2zM671 260h2v2h-2zM673 266h2v2h-2zM673 268h2v2h-2zM677 260h2v2h-2zM681 266h2v2h-2zM693 264h2v2h-2zM693 284h2v2h-2zM697 264h2v2h-2zM701 270h2v2h-2zM705 260h2v2h-2z"/><path fill="#008fff" d="M365 184v2h1v-2zM365 190v2h1v-2zM365 202v2h1v-2zM365 210v2h1v-2zM365 214v2h1v-2zM365 218v2h1v-2zM365 224v2h1v-2zM366 172v2h2v-2zM366 184v2h2v-2zM366 206v2h2v-2zM366 224v2h2v-2zM366 230v4h2v-4zM368 194v2h2v-2zM368 228v4h2v-4zM368 234v2h2v-2zM368 238v2h2v-2zM370 168v2h1v-2zM370 210v2h1v-2zM370 218v2h1v-2zM370 228v2h1v-2zM371 192v2h1v-2zM371 220v2h1v-2zM372 220v2h2v-2zM372 238v2h2v-2zM374 238v2h2v-2zM374 246v2h2v-2zM376 206v2h1v-2zM376 222v2h1v-2zM377 190v2h1v-2zM377 198v2h1v-2zM377 210v4h1v-4zM377 226v4h1v-4zM378 180v2h2v-2zM378 188v4h2v-4zM378 204v4h2v-4zM378 236v2h2v-2zM380 192v2h2v-2zM380 206v4h2v-4zM380 212v4h2v-4zM380 240v2h2v-2zM382 190v2h1v-2zM382 204v2h1v-2zM382 218v2h1v-2zM382 228v2h1v-2zM382 232v2h1v-2zM382 236v2h1v-2zM383 212v2h1v-2zM383 228v2h1v-2zM383 240v2h1v-2zM384 224v2h2v-2zM384 228v2h2v-2zM384 242v2h2v-2zM386 220v2h2v-2zM386 226v2h2v-2zM386 230v2h2v-2zM388 234v2h1v-2zM388 242v2h1v-2zM389 230v2h1v-2zM389 236v2h1v-2zM389 240v2h1v-2zM389 244v2h1v-2zM390 190v2h2v-2zM390 196v2h2v-2zM390 200v2h2v-2zM390 226v2h2v-2zM390 236v2h2v-2zM390 240v2h2v-2zM392 176v2h2v-2zM392 180v2h2v-2zM392 190v2h2v-2zM394 190v2h1v-2zM394 202v2h1v-2zM394 236v2h1v-2zM395 192v2h1v-2zM395 236v2h1v-2zM396 202v2h2v-2zM396 236v2h2v-2zM396 246v2h2v-2zM398 198v2h2v-2zM398 208v2h2v-2zM398 224v2h2v-2zM401 170v2h1v-2zM401 174v2h1v-2zM401 178v2h1v-2zM401 182v2h1v-2zM401 192v2h1v-2zM401 230v2h1v-2zM401 242v2h1v-2zM402 182v2h2v-2zM404 184v2h2v-2zM406 192v4h1v-4zM406 236v2h1v-2zM407 178v2h1v-2zM407 190v4h1v-4zM407 196v2h1v-2zM407 204v2h1v-2zM407 242v2h1v-2zM408 190v4h2v-4zM408 204v2h2v-2zM410 186v2h2v-2zM410 194v2h2v-2zM410 246v2h2v-2zM412 202v2h1v-2zM412 236v2h1v-2zM413 190v2h1v-2zM413 194v2h1v-2zM413 216v2h1v-2zM413 238v2h1v-2zM414 232v2h2v-2zM414 236v2h2v-2zM414 244v2h2v-2zM416 194v2h2v-2zM416 206v2h2v-2zM418 192v2h1v-2zM418 232v2h1v-2zM419 170v2h1v-2zM419 184v2h1v-2zM419 208v2h1v-2zM420 232v2h2v-2zM422 218v2h2v-2zM422 230v2h2v-2zM422 236v2h2v-2zM424 244v2h1v-2zM425 190v2h1v-2zM425 210v4h1v-4zM425 222v2h1v-2zM425 226v2h1v-2zM425 232v2h1v-2zM426 204v2h2v-2zM426 210v2h2v-2zM426 224v2h2v-2zM426 228v2h2v-2zM428 188v2h2v-2zM428 194v2h2v-2zM428 232v2h2v-2zM428 238v2h2v-2zM430 190v2h1v-2zM430 238v2h1v-2zM431 178v4h1v-4zM431 228v2h1v-2zM431 244v2h1v-2zM432 232v2h2v-2zM434 186v2h2v-2zM434 194v2h2v-2zM434 204v2h2v-2zM434 218v2h2v-2zM434 232v2h2v-2zM436 182v2h1v-2zM436 194v2h1v-2zM436 214v2h1v-2zM436 224v2h1v-2zM437 200v2h1v-2zM437 204v2h1v-2zM437 242v2h1v-2zM438 176v2h2v-2zM438 180v2h2v-2zM438 186v2h2v-2zM438 192v2h2v-2zM438 234v2h2v-2zM438 242v2h2v-2zM440 178v2h2v-2zM440 184v2h2v-2zM440 202v2h2v-2zM440 232v2h2v-2zM440 248v2h2v-2zM442 184v6h1v-6zM442 240v2h1v-2zM443 178v2h1v-2zM443 192v2h1v-2zM443 240v2h1v-2zM444 190v2h2v-2zM444 198v2h2v-2zM444 206v2h2v-2zM446 234v2h2v-2zM446 248v2h2v-2zM448 242v2h1v-2zM448 248v2h1v-2zM449 246v2h1v-2zM449 252v2h1v-2zM450 242v2h2v-2zM450 250v2h2v-2zM452 252v2h2v-2zM454 238v6h1v-6zM454 246v2h1v-2zM455 224v2h1v-2zM455 248v2h1v-2zM456 168v2h2v-2zM456 244v2h2v-2zM458 242v2h2v-2zM460 240v2h1v-2zM462 170v2h2v-2zM462 242v2h2v-2zM464 234v4h2v-4zM464 244v2h2v-2zM466 170v2h1v-2zM467 174v2h1v-2zM468 168v2h2v-2zM468 238v2h2v-2zM472 230v2h1v-2zM472 240v2h1v-2zM473 236v2h1v-2zM474 240v2h2v-2zM474 248v4h2v-4zM476 168v2h2v-2zM476 240v2h2v-2zM476 246v2h2v-2zM478 170v2h1v-2zM478 240v2h1v-2zM480 250v2h2v-2zM482 170v2h2v-2zM482 228v2h2v-2zM482 232v2h2v-2zM484 232v2h1v-2zM484 244v4h1v-4zM485 258v2h1v-2zM486 168v4h2v-4zM486 234v2h2v-2zM486 246v2h2v-2zM486 250v2h2v-2zM486 258v2h2v-2zM488 242v2h2v-2zM488 248v2h2v-2zM488 252v2h2v-2zM491 250v2h1v-2zM491 254v4h1v-4zM492 238v2h2v-2zM492 246v2h2v-2zM494 168v2h2v-2zM494 242v2h2v-2zM494 248v2h2v-2zM496 234v2h1v-2zM496 238v2h1v-2zM496 246v2h1v-2zM497 168v2h1v-2zM497 236v2h1v-2zM497 240v2h1v-2zM498 242v2h2v-2zM498 248v2h2v-2zM500 248v4h2v-4zM502 246v2h1v-2zM504 236v2h2v-2zM506 168v2h2v-2zM506 240v2h2v-2zM508 234v4h1v-4zM509 234v4h1v-4zM509 240v2h1v-2zM510 242v2h2v-2zM510 248v2h2v-2zM512 168v2h2v-2zM512 222v2h2v-2zM514 242v2h1v-2zM514 246v4h1v-4zM514 256v2h1v-2zM515 250v2h1v-2zM516 246v2h2v-2zM516 258v2h2v-2zM518 246v2h2v-2zM518 250v2h2v-2zM520 170v2h1v-2zM520 248v2h1v-2zM521 170v2h1v-2zM521 228v2h1v-2zM522 170v2h2v-2zM522 246v2h2v-2zM524 240v4h2v-4zM526 238v2h1v-2zM526 250v4h1v-4zM527 258v2h1v-2zM530 168v2h2v-2zM530 248v2h2v-2zM532 170v2h1v-2zM532 254v2h1v-2zM534 258v2h2v-2zM538 174v2h1v-2zM539 174v2h1v-2zM540 170v2h2v-2zM540 238v2h2v-2zM540 242v2h2v-2zM542 170v2h2v-2zM542 236v2h2v-2zM542 250v2h2v-2zM544 176v2h1v-2zM544 238v2h1v-2zM544 254v2h1v-2zM545 176v2h1v-2zM545 234v2h1v-2zM545 246v2h1v-2zM546 172v2h2v-2zM546 254v4h2v-4zM548 238v2h2v-2zM548 256v2h2v-2zM550 236v2h1v-2zM551 190v2h1v-2zM551 194v2h1v-2zM551 228v2h1v-2zM551 238v2h1v-2zM552 176v2h2v-2zM552 196v2h2v-2zM552 252v2h2v-2zM554 178v4h2v-4zM554 194v2h2v-2zM554 200v2h2v-2zM554 216v2h2v-2zM556 186v2h1v-2zM556 194v2h1v-2zM556 206v2h1v-2zM557 234v2h1v-2zM557 240v2h1v-2zM558 198v2h2v-2zM558 202v2h2v-2zM558 212v2h2v-2zM558 216v2h2v-2zM558 228v2h2v-2zM558 232v2h2v-2zM558 244v2h2v-2zM560 168v2h2v-2zM560 172v2h2v-2zM560 192v2h2v-2zM560 244v4h2v-4zM562 194v4h1v-4zM562 202v2h1v-2zM562 206v2h1v-2zM562 218v2h1v-2zM562 238v2h1v-2zM562 248v2h1v-2zM562 252v2h1v-2zM563 202v2h1v-2zM563 226v2h1v-2zM563 242v2h1v-2zM564 204v2h2v-2zM564 224v2h2v-2zM564 242v2h2v-2zM564 246v2h2v-2zM566 200v2h2v-2zM566 212v2h2v-2zM566 224v2h2v-2zM568 206v2h1v-2zM568 210v2h1v-2zM568 222v2h1v-2zM568 232v2h1v-2zM568 252v2h1v-2zM569 188v2h1v-2zM569 194v4h1v-4zM569 202v2h1v-2zM569 206v2h1v-2zM569 222v2h1v-2zM569 236v2h1v-2zM570 192v2h2v-2zM570 226v6h2v-6zM570 244v2h2v-2zM572 196v2h2v-2zM572 250v2h2v-2zM574 210v2h1v-2zM574 238v2h1v-2zM574 246v2h1v-2zM575 196v2h1v-2zM575 200v2h1v-2zM575 218v2h1v-2zM575 224v2h1v-2zM575 232v2h1v-2zM576 200v2h2v-2zM576 204v2h2v-2zM576 228v2h2v-2zM576 246v2h2v-2zM578 202v2h2v-2zM578 234v2h2v-2zM580 198v2h1v-2zM580 214v4h1v-4zM581 202v2h1v-2zM582 196v4h2v-4zM582 240v2h2v-2zM584 210v2h2v-2zM586 194v2h1v-2zM586 204v2h1v-2zM586 228v2h1v-2zM586 244v2h1v-2zM587 196v2h1v-2zM587 250v2h1v-2zM588 230v2h2v-2zM588 246v2h2v-2zM590 236v4h2v-4zM593 192v2h1v-2zM593 202v2h1v-2zM593 248v2h1v-2zM594 202v4h2v-4zM594 236v2h2v-2zM594 242v2h2v-2zM598 200v2h1v-2zM598 204v2h1v-2zM598 214v2h1v-2zM598 248v4h1v-4zM599 192v2h1v-2zM599 202v4h1v-4zM599 242v4h1v-4zM600 198v2h2v-2zM600 234v2h2v-2zM600 244v2h2v-2zM600 248v6h2v-6zM602 198v2h2v-2zM604 194v2h1v-2zM604 202v2h1v-2zM604 244v2h1v-2zM605 196v2h1v-2zM605 200v2h1v-2zM605 210v2h1v-2zM605 236v2h1v-2zM605 242v2h1v-2zM606 196v2h2v-2zM606 200v2h2v-2zM606 206v2h2v-2zM606 214v2h2v-2zM606 232v2h2v-2zM608 204v4h2v-4zM608 212v2h2v-2zM608 222v2h2v-2zM608 244v2h2v-2zM610 218v2h1v-2zM611 194v2h1v-2zM611 214v2h1v-2zM611 232v2h1v-2zM612 198v2h2v-2zM612 204v2h2v-2zM612 244v2h2v-2zM616 202v4h1v-4zM617 202v2h1v-2zM617 230v2h1v-2zM620 196v4h2v-4zM620 206v2h2v-2zM620 250v2h2v-2zM622 216v2h1v-2zM622 222v2h1v-2zM622 226v2h1v-2zM622 250v2h1v-2zM623 204v2h1v-2zM623 232v2h1v-2zM623 242v2h1v-2zM624 198v4h2v-4zM626 196v2h2v-2zM626 206v2h2v-2zM628 246v2h1v-2zM629 198v6h1v-6zM629 224v2h1v-2zM629 244v2h1v-2zM630 198v2h2v-2zM634 248v2h1v-2zM635 204v2h1v-2zM636 198v2h2v-2zM636 204v2h2v-2zM636 210v2h2v-2zM638 224v2h2v-2zM638 232v2h2v-2zM640 210v2h1v-2zM640 230v2h1v-2zM640 248v2h1v-2zM641 200v2h1v-2zM642 224v2h2v-2zM642 240v6h2v-6zM644 194v2h2v-2zM644 198v2h2v-2zM644 228v2h2v-2zM644 250v2h2v-2zM646 246v2h1v-2zM647 194v2h1v-2zM647 220v2h1v-2zM647 240v2h1v-2zM648 206v2h2v-2zM648 232v2h2v-2zM648 236v4h2v-4zM650 258v2h2v-2zM652 254v2h1v-2zM653 244v2h1v-2zM653 250v2h1v-2zM654 250v2h2v-2zM656 250v2h2v-2zM658 172v2h1v-2zM658 248v2h1v-2zM659 244v2h1v-2zM660 236v2h2v-2zM660 242v2h2v-2zM660 252v2h2v-2zM662 236v4h2v-4zM662 244v2h2v-2zM665 250v4h1v-4zM668 250v2h2v-2zM671 230v2h1v-2zM671 244v2h1v-2zM674 238v2h2v-2zM674 244v2h2v-2zM677 248v2h1v-2zM677 252v2h1v-2zM678 244v2h2v-2zM678 248v4h2v-4zM682 258v2h1v-2zM684 246v2h2v-2zM686 252v2h2v-2zM686 258v2h2v-2zM688 248v2h1v-2zM692 246v2h2v-2zM694 252v4h1v-4zM700 244v2h1v-2zM700 252v2h1v-2zM704 252v2h2v-2zM706 242v2h1v-2zM706 252v2h1v-2zM383 248h2v2h-2zM389 254h2v2h-2zM389 286h2v2h-2zM397 266h2v2h-2zM401 254h2v2h-2zM405 266h2v2h-2zM479 264h2v2h-2zM485 260h2v2h-2zM493 278h2v2h-2zM583 262h2v2h-2zM589 256h2v2h-2zM591 178h2v2h-2zM591 268h2v2h-2zM603 256h2v2h-2zM605 272h2v2h-2zM611 274h2v2h-2zM617 270h2v2h-2zM625 260h2v2h-2zM633 280h2v2h-2zM643 286h2v2h-2zM647 266h2v2h-2zM653 264h2v2h-2zM657 264h2v2h-2zM667 268h2v2h-2zM705 262h2v2h-2zM705 266h2v2h-2z"/><path fill="#00b7ff" d="M365 194v2h1v-2zM365 204v4h1v-4zM365 242v2h1v-2zM366 212v2h2v-2zM366 220v2h2v-2zM366 226v2h2v-2zM366 234v4h2v-4zM368 210v4h2v-4zM368 216v2h2v-2zM368 236v2h2v-2zM371 218v2h1v-2zM371 224v2h1v-2zM371 228v2h1v-2zM371 234v2h1v-2zM372 204v2h2v-2zM372 226v2h2v-2zM374 202v2h2v-2zM374 220v2h2v-2zM376 188v2h1v-2zM376 224v2h1v-2zM376 238v2h1v-2zM377 188v2h1v-2zM377 196v2h1v-2zM377 202v2h1v-2zM377 206v4h1v-4zM377 218v2h1v-2zM377 224v2h1v-2zM377 242v2h1v-2zM378 220v6h2v-6zM378 228v2h2v-2zM378 234v2h2v-2zM378 238v4h2v-4zM380 194v2h2v-2zM380 210v2h2v-2zM380 236v2h2v-2zM382 192v2h1v-2zM382 196v2h1v-2zM382 214v4h1v-4zM382 220v2h1v-2zM384 220v2h2v-2zM384 246v2h2v-2zM386 232v2h2v-2zM386 240v2h2v-2zM388 238v2h1v-2zM390 224v2h2v-2zM390 244v2h2v-2zM392 170v2h2v-2zM392 184v2h2v-2zM392 246v2h2v-2zM394 174v2h1v-2zM394 230v2h1v-2zM394 240v2h1v-2zM394 244v2h1v-2zM395 176v2h1v-2zM395 194v8h1v-8zM395 226v2h1v-2zM395 240v4h1v-4zM396 188v2h2v-2zM396 220v2h2v-2zM396 224v4h2v-4zM396 230v2h2v-2zM398 210v2h2v-2zM398 218v2h2v-2zM398 222v2h2v-2zM398 236v2h2v-2zM400 176v2h1v-2zM400 182v4h1v-4zM400 188v2h1v-2zM400 236v2h1v-2zM401 238v2h1v-2zM402 178v2h2v-2zM402 194v2h2v-2zM402 244v2h2v-2zM404 182v2h2v-2zM404 188v2h2v-2zM406 188v2h1v-2zM406 208v4h1v-4zM406 234v2h1v-2zM407 186v2h1v-2zM407 200v2h1v-2zM407 208v2h1v-2zM407 240v2h1v-2zM408 188v2h2v-2zM408 222v2h2v-2zM408 236v2h2v-2zM408 244v2h2v-2zM410 180v2h2v-2zM410 212v2h2v-2zM410 234v2h2v-2zM412 192v2h1v-2zM412 196v6h1v-6zM412 208v2h1v-2zM412 222v2h1v-2zM412 226v2h1v-2zM412 230v4h1v-4zM413 196v2h1v-2zM413 222v2h1v-2zM413 230v2h1v-2zM413 236v2h1v-2zM414 194v2h2v-2zM414 208v2h2v-2zM414 212v2h2v-2zM414 230v2h2v-2zM416 180v2h2v-2zM416 234v2h2v-2zM416 242v2h2v-2zM418 198v6h1v-6zM418 208v2h1v-2zM418 228v2h1v-2zM419 190v2h1v-2zM419 234v2h1v-2zM419 240v2h1v-2zM419 246v2h1v-2zM420 182v2h2v-2zM420 188v2h2v-2zM420 210v2h2v-2zM422 196v2h2v-2zM422 204v4h2v-4zM422 210v4h2v-4zM422 220v2h2v-2zM424 188v2h1v-2zM424 210v2h1v-2zM425 200v2h1v-2zM425 206v2h1v-2zM426 202v2h2v-2zM426 226v2h2v-2zM428 198v2h2v-2zM428 204v2h2v-2zM428 214v2h2v-2zM428 218v2h2v-2zM428 228v4h2v-4zM430 178v2h1v-2zM430 192v2h1v-2zM430 196v2h1v-2zM430 214v2h1v-2zM430 226v2h1v-2zM430 234v2h1v-2zM431 190v2h1v-2zM431 194v2h1v-2zM431 236v2h1v-2zM432 172v2h2v-2zM432 184v2h2v-2zM432 192v2h2v-2zM432 200v4h2v-4zM432 242v2h2v-2zM434 202v2h2v-2zM434 206v2h2v-2zM434 210v2h2v-2zM434 240v2h2v-2zM436 188v2h1v-2zM436 198v2h1v-2zM436 202v2h1v-2zM436 208v4h1v-4zM436 218v2h1v-2zM436 238v2h1v-2zM437 190v2h1v-2zM437 246v2h1v-2zM438 168v2h2v-2zM438 230v2h2v-2zM438 240v2h2v-2zM440 192v2h2v-2zM440 198v4h2v-4zM440 220v2h2v-2zM442 176v2h1v-2zM442 192v2h1v-2zM442 204v2h1v-2zM443 170v2h1v-2zM443 196v2h1v-2zM443 202v2h1v-2zM443 222v2h1v-2zM443 232v2h1v-2zM443 236v2h1v-2zM444 196v2h2v-2zM444 202v2h2v-2zM444 222v2h2v-2zM444 226v4h2v-4zM444 232v2h2v-2zM446 240v2h2v-2zM449 234v4h1v-4zM449 248v2h1v-2zM449 254v2h1v-2zM450 236v2h2v-2zM450 240v2h2v-2zM452 228v2h2v-2zM452 246v2h2v-2zM454 170v2h1v-2zM455 236v2h1v-2zM456 170v4h2v-4zM456 232v2h2v-2zM456 248v2h2v-2zM458 238v2h2v-2zM460 170v2h1v-2zM460 244v4h1v-4zM460 254v2h1v-2zM462 168v2h2v-2zM462 246v2h2v-2zM464 168v2h2v-2zM464 172v2h2v-2zM466 242v8h1v-8zM467 234v2h1v-2zM468 228v2h2v-2zM468 234v2h2v-2zM468 240v2h2v-2zM468 250v2h2v-2zM470 238v2h2v-2zM470 244v2h2v-2zM474 172v2h2v-2zM474 234v2h2v-2zM478 172v2h1v-2zM479 246v2h1v-2zM479 254v2h1v-2zM480 246v2h2v-2zM482 224v2h2v-2zM484 170v4h1v-4zM484 230v2h1v-2zM484 240v2h1v-2zM485 170v2h1v-2zM485 244v2h1v-2zM485 250v2h1v-2zM486 248v2h2v-2zM488 254v2h2v-2zM490 242v2h1v-2zM490 252v2h1v-2zM490 256v2h1v-2zM491 242v2h1v-2zM492 236v2h2v-2zM494 236v2h2v-2zM496 236v2h1v-2zM496 248v2h1v-2zM496 256v2h1v-2zM497 246v2h1v-2zM498 168v2h2v-2zM498 226v2h2v-2zM498 236v2h2v-2zM498 240v2h2v-2zM498 250v2h2v-2zM500 246v2h2v-2zM502 238v2h1v-2zM502 250v2h1v-2zM503 234v2h1v-2zM503 238v2h1v-2zM504 168v4h2v-4zM504 240v2h2v-2zM506 170v2h2v-2zM506 222v2h2v-2zM506 226v2h2v-2zM506 234v2h2v-2zM508 230v2h1v-2zM508 242v2h1v-2zM509 230v2h1v-2zM509 238v2h1v-2zM510 254v2h2v-2zM512 170v2h2v-2zM515 244v2h1v-2zM515 248v2h1v-2zM515 252v2h1v-2zM516 170v2h2v-2zM516 236v2h2v-2zM518 238v2h2v-2zM520 240v4h1v-4zM521 168v2h1v-2zM522 232v2h2v-2zM524 214v2h2v-2zM524 218v2h2v-2zM527 250v4h1v-4zM528 232v2h2v-2zM528 236v2h2v-2zM528 242v2h2v-2zM530 232v2h2v-2zM532 168v2h1v-2zM532 248v2h1v-2zM533 246v2h1v-2zM534 236v2h2v-2zM534 252v2h2v-2zM534 256v2h2v-2zM536 234v2h2v-2zM536 250v2h2v-2zM538 232v2h1v-2zM539 242v2h1v-2zM540 234v2h2v-2zM540 246v2h2v-2zM540 252v2h2v-2zM540 256v2h2v-2zM542 168v2h2v-2zM542 232v2h2v-2zM542 242v4h2v-4zM544 174v2h1v-2zM544 236v2h1v-2zM544 242v2h1v-2zM544 256v2h1v-2zM545 228v2h1v-2zM546 234v2h2v-2zM546 240v2h2v-2zM546 250v2h2v-2zM548 180v2h2v-2zM548 208v2h2v-2zM548 226v2h2v-2zM548 236v2h2v-2zM550 212v2h1v-2zM550 248v2h1v-2zM550 254v2h1v-2zM551 172v2h1v-2zM551 232v2h1v-2zM551 246v2h1v-2zM552 180v2h2v-2zM552 200v2h2v-2zM552 208v2h2v-2zM552 234v2h2v-2zM552 238v2h2v-2zM552 248v2h2v-2zM554 188v2h2v-2zM554 192v2h2v-2zM554 208v2h2v-2zM554 228v2h2v-2zM554 232v4h2v-4zM554 238v2h2v-2zM554 244v2h2v-2zM556 188v2h1v-2zM556 252v2h1v-2zM557 180v2h1v-2zM557 198v2h1v-2zM557 210v2h1v-2zM557 242v2h1v-2zM558 196v2h2v-2zM558 200v2h2v-2zM558 204v2h2v-2zM558 210v2h2v-2zM558 218v2h2v-2zM558 230v2h2v-2zM560 170v2h2v-2zM560 190v2h2v-2zM562 224v4h1v-4zM562 232v2h1v-2zM562 240v2h1v-2zM563 206v2h1v-2zM564 172v2h2v-2zM564 198v2h2v-2zM564 206v2h2v-2zM564 212v2h2v-2zM564 220v2h2v-2zM564 238v2h2v-2zM566 194v2h2v-2zM566 246v2h2v-2zM568 216v2h1v-2zM568 228v2h1v-2zM568 240v2h1v-2zM569 230v2h1v-2zM570 202v2h2v-2zM570 214v4h2v-4zM570 238v2h2v-2zM572 200v2h2v-2zM572 204v2h2v-2zM572 246v2h2v-2zM574 220v6h1v-6zM574 236v2h1v-2zM574 242v2h1v-2zM575 248v2h1v-2zM576 202v2h2v-2zM576 210v2h2v-2zM576 230v2h2v-2zM576 238v2h2v-2zM578 204v2h2v-2zM578 212v2h2v-2zM578 218v2h2v-2zM578 230v2h2v-2zM578 244v2h2v-2zM580 194v2h1v-2zM580 202v2h1v-2zM580 242v4h1v-4zM581 206v2h1v-2zM581 216v2h1v-2zM582 220v2h2v-2zM584 200v2h2v-2zM584 246v2h2v-2zM586 198v2h1v-2zM586 232v2h1v-2zM587 200v2h1v-2zM587 204v2h1v-2zM587 214v2h1v-2zM588 200v2h2v-2zM588 210v4h2v-4zM588 224v2h2v-2zM588 228v2h2v-2zM588 238v2h2v-2zM588 244v2h2v-2zM590 196v2h2v-2zM590 208v2h2v-2zM590 216v2h2v-2zM590 230v4h2v-4zM592 196v2h1v-2zM592 216v2h1v-2zM592 248v2h1v-2zM593 196v2h1v-2zM593 204v2h1v-2zM593 212v2h1v-2zM594 214v2h2v-2zM594 220v2h2v-2zM594 234v2h2v-2zM594 238v4h2v-4zM594 246v2h2v-2zM596 196v2h2v-2zM596 210v2h2v-2zM596 250v2h2v-2zM598 198v2h1v-2zM598 234v2h1v-2zM599 210v2h1v-2zM599 250v2h1v-2zM600 212v2h2v-2zM600 240v2h2v-2zM600 246v2h2v-2zM602 196v2h2v-2zM602 200v2h2v-2zM602 246v2h2v-2zM604 204v2h1v-2zM604 216v2h1v-2zM604 220v2h1v-2zM604 226v2h1v-2zM604 230v2h1v-2zM605 214v2h1v-2zM605 240v2h1v-2zM606 244v2h2v-2zM608 208v2h2v-2zM608 232v4h2v-4zM608 238v2h2v-2zM610 210v4h1v-4zM610 236v2h1v-2zM611 222v2h1v-2zM611 240v4h1v-4zM612 202v2h2v-2zM612 210v2h2v-2zM614 210v2h2v-2zM614 214v2h2v-2zM616 196v2h1v-2zM616 200v2h1v-2zM616 208v2h1v-2zM616 234v2h1v-2zM618 208v2h2v-2zM618 214v2h2v-2zM620 204v2h2v-2zM620 214v4h2v-4zM620 226v4h2v-4zM620 244v2h2v-2zM622 214v2h1v-2zM622 242v2h1v-2zM623 202v2h1v-2zM623 212v2h1v-2zM623 228v2h1v-2zM623 234v2h1v-2zM623 240v2h1v-2zM624 228v2h2v-2zM624 240v2h2v-2zM624 246v2h2v-2zM626 198v2h2v-2zM628 210v2h1v-2zM628 240v2h1v-2zM628 250v2h1v-2zM629 204v2h1v-2zM629 212v2h1v-2zM629 230v2h1v-2zM630 232v2h2v-2zM630 244v2h2v-2zM632 196v2h2v-2zM632 234v2h2v-2zM632 238v2h2v-2zM634 200v2h1v-2zM634 204v6h1v-6zM634 244v2h1v-2zM635 244v2h1v-2zM635 248v2h1v-2zM636 202v2h2v-2zM636 244v2h2v-2zM638 216v2h2v-2zM638 222v2h2v-2zM638 230v2h2v-2zM638 238v2h2v-2zM638 244v2h2v-2zM640 194v2h1v-2zM640 216v2h1v-2zM641 202v2h1v-2zM641 234v2h1v-2zM641 246v2h1v-2zM642 212v2h2v-2zM644 202v2h2v-2zM644 210v2h2v-2zM646 204v2h1v-2zM646 212v2h1v-2zM646 238v2h1v-2zM646 248v2h1v-2zM647 244v2h1v-2zM647 252v2h1v-2zM647 258v2h1v-2zM648 200v2h2v-2zM648 248v2h2v-2zM650 192v2h2v-2zM650 238v2h2v-2zM653 238v2h1v-2zM653 252v2h1v-2zM653 258v2h1v-2zM654 234v2h2v-2zM659 170v2h1v-2zM660 168v4h2v-4zM662 240v4h2v-4zM662 248v2h2v-2zM664 256v2h1v-2zM666 232v2h2v-2zM666 236v2h2v-2zM666 244v2h2v-2zM666 256v2h2v-2zM668 248v2h2v-2zM674 232v4h2v-4zM674 242v2h2v-2zM674 248v2h2v-2zM676 234v2h1v-2zM676 256v2h1v-2zM677 232v2h1v-2zM682 248v2h1v-2zM683 232v2h1v-2zM684 234v2h2v-2zM684 238v4h2v-4zM684 250v2h2v-2zM686 244v2h2v-2zM688 254v4h1v-4zM689 246v6h1v-6zM690 248v8h2v-8zM694 230v2h1v-2zM694 258v2h1v-2zM695 250v2h1v-2zM696 242v2h2v-2zM702 248v2h2v-2zM704 248v4h2v-4zM706 234v2h1v-2zM706 246v4h1v-4zM367 286h2v2h-2zM429 260h2v2h-2zM495 264h2v2h-2zM567 272h2v2h-2zM579 284h2v2h-2zM597 258h2v2h-2zM619 254h2v2h-2zM643 262h2v2h-2zM653 186h2v2h-2zM687 266h2v2h-2z"/><path fill="#00dfff" d="M365 196v6h1v-6zM365 212v2h1v-2zM365 222v2h1v-2zM365 230v2h1v-2zM365 238v2h1v-2zM366 214v2h2v-2zM366 238v2h2v-2zM368 222v2h2v-2zM370 198v2h1v-2zM370 208v2h1v-2zM370 222v2h1v-2zM370 234v2h1v-2zM370 240v2h1v-2zM371 226v2h1v-2zM371 230v2h1v-2zM374 194v2h2v-2zM374 206v2h2v-2zM374 216v2h2v-2zM374 240v2h2v-2zM376 198v2h1v-2zM376 232v2h1v-2zM377 220v2h1v-2zM377 230v2h1v-2zM378 184v2h2v-2zM378 200v4h2v-4zM378 208v2h2v-2zM378 216v2h2v-2zM378 230v2h2v-2zM380 196v2h2v-2zM380 226v2h2v-2zM380 238v2h2v-2zM382 224v2h1v-2zM384 226v2h2v-2zM384 232v2h2v-2zM384 236v2h2v-2zM386 222v2h2v-2zM386 228v2h2v-2zM386 234v6h2v-6zM388 240v2h1v-2zM388 244v2h1v-2zM389 226v2h1v-2zM390 206v2h2v-2zM390 212v2h2v-2zM390 216v2h2v-2zM390 222v2h2v-2zM390 228v2h2v-2zM392 198v2h2v-2zM392 240v4h2v-4zM394 180v2h1v-2zM394 192v2h1v-2zM394 204v2h1v-2zM394 238v2h1v-2zM395 190v2h1v-2zM395 202v2h1v-2zM395 222v2h1v-2zM395 230v2h1v-2zM395 238v2h1v-2zM396 200v2h2v-2zM396 204v2h2v-2zM396 208v2h2v-2zM396 212v2h2v-2zM396 228v2h2v-2zM396 232v2h2v-2zM398 190v2h2v-2zM398 206v2h2v-2zM398 216v2h2v-2zM398 234v2h2v-2zM400 238v2h1v-2zM401 180v2h1v-2zM401 194v2h1v-2zM402 184v4h2v-4zM402 234v2h2v-2zM402 240v2h2v-2zM404 192v2h2v-2zM404 206v2h2v-2zM404 230v2h2v-2zM406 198v4h1v-4zM406 212v2h1v-2zM406 230v4h1v-4zM407 188v2h1v-2zM407 194v2h1v-2zM407 206v2h1v-2zM407 210v2h1v-2zM407 236v2h1v-2zM408 186v2h2v-2zM408 214v2h2v-2zM408 224v2h2v-2zM408 238v2h2v-2zM410 190v2h2v-2zM410 202v2h2v-2zM410 224v2h2v-2zM410 236v2h2v-2zM412 234v2h1v-2zM413 202v4h1v-4zM413 214v2h1v-2zM413 242v2h1v-2zM414 178v2h2v-2zM414 192v2h2v-2zM414 198v2h2v-2zM414 210v2h2v-2zM414 218v4h2v-4zM414 226v2h2v-2zM416 202v2h2v-2zM416 208v2h2v-2zM416 222v2h2v-2zM416 230v4h2v-4zM418 212v2h1v-2zM418 218v2h1v-2zM418 222v2h1v-2zM418 230v2h1v-2zM419 194v2h1v-2zM419 198v2h1v-2zM419 232v2h1v-2zM419 236v2h1v-2zM420 196v2h2v-2zM420 202v2h2v-2zM422 198v2h2v-2zM422 216v2h2v-2zM422 224v2h2v-2zM422 228v2h2v-2zM424 190v2h1v-2zM424 196v4h1v-4zM424 228v4h1v-4zM424 234v2h1v-2zM425 208v2h1v-2zM425 218v4h1v-4zM425 230v2h1v-2zM425 234v2h1v-2zM426 208v2h2v-2zM426 214v2h2v-2zM426 234v2h2v-2zM428 190v2h2v-2zM428 200v2h2v-2zM428 222v2h2v-2zM428 226v2h2v-2zM430 198v2h1v-2zM430 210v2h1v-2zM431 192v2h1v-2zM431 200v2h1v-2zM431 232v4h1v-4zM431 240v4h1v-4zM432 190v2h2v-2zM432 240v2h2v-2zM432 244v2h2v-2zM434 188v2h2v-2zM434 196v2h2v-2zM434 220v2h2v-2zM434 228v4h2v-4zM436 192v2h1v-2zM436 200v2h1v-2zM436 228v2h1v-2zM437 176v2h1v-2zM437 198v2h1v-2zM437 202v2h1v-2zM437 206v2h1v-2zM437 228v2h1v-2zM437 240v2h1v-2zM438 206v2h2v-2zM438 224v2h2v-2zM440 174v2h2v-2zM440 230v2h2v-2zM442 196v2h1v-2zM442 210v2h1v-2zM442 234v2h1v-2zM443 190v2h1v-2zM443 206v2h1v-2zM443 218v2h1v-2zM443 238v2h1v-2zM444 180v2h2v-2zM444 200v2h2v-2zM444 230v2h2v-2zM446 220v2h2v-2zM446 224v2h2v-2zM446 230v4h2v-4zM448 240v2h1v-2zM448 246v2h1v-2zM448 250v2h1v-2zM449 238v4h1v-4zM450 246v4h2v-4zM452 168v2h2v-2zM452 244v2h2v-2zM452 250v2h2v-2zM454 236v2h1v-2zM456 226v2h2v-2zM456 230v2h2v-2zM456 240v2h2v-2zM458 174v2h2v-2zM458 230v2h2v-2zM458 240v2h2v-2zM458 248v2h2v-2zM460 224v2h1v-2zM460 230v2h1v-2zM461 252v2h1v-2zM461 258v2h1v-2zM462 172v2h2v-2zM462 230v2h2v-2zM464 174v2h2v-2zM464 226v2h2v-2zM466 230v2h1v-2zM466 250v2h1v-2zM467 228v4h1v-4zM468 232v2h2v-2zM468 242v2h2v-2zM470 170v2h2v-2zM470 234v2h2v-2zM470 240v2h2v-2zM472 228v2h1v-2zM472 238v2h1v-2zM473 168v4h1v-4zM473 238v2h1v-2zM473 242v2h1v-2zM473 248v4h1v-4zM474 228v2h2v-2zM474 238v2h2v-2zM474 242v6h2v-6zM474 254v2h2v-2zM476 174v2h2v-2zM476 230v4h2v-4zM476 236v4h2v-4zM479 236v4h1v-4zM479 242v2h1v-2zM480 236v2h2v-2zM480 248v2h2v-2zM480 256v2h2v-2zM482 220v2h2v-2zM482 226v2h2v-2zM482 236v2h2v-2zM484 236v2h1v-2zM484 254v2h1v-2zM485 230v2h1v-2zM485 248v2h1v-2zM486 174v2h2v-2zM486 232v2h2v-2zM486 242v2h2v-2zM488 170v2h2v-2zM488 220v2h2v-2zM488 232v2h2v-2zM488 238v2h2v-2zM490 172v2h1v-2zM490 234v2h1v-2zM490 240v2h1v-2zM490 248v4h1v-4zM492 172v2h2v-2zM492 224v2h2v-2zM492 242v4h2v-4zM494 240v2h2v-2zM496 232v2h1v-2zM497 230v2h1v-2zM497 234v2h1v-2zM497 242v2h1v-2zM497 250v2h1v-2zM498 224v2h2v-2zM498 238v2h2v-2zM498 252v2h2v-2zM500 224v2h2v-2zM500 228v2h2v-2zM500 238v2h2v-2zM502 172v2h1v-2zM502 230v2h1v-2zM502 254v2h1v-2zM504 226v2h2v-2zM506 172v2h2v-2zM506 230v2h2v-2zM508 218v2h1v-2zM508 224v2h1v-2zM508 238v2h1v-2zM509 174v2h1v-2zM510 240v2h2v-2zM510 246v2h2v-2zM510 250v4h2v-4zM512 172v2h2v-2zM512 226v2h2v-2zM512 232v4h2v-4zM512 238v2h2v-2zM512 252v2h2v-2zM515 230v2h1v-2zM515 238v2h1v-2zM515 242v2h1v-2zM516 240v2h2v-2zM516 244v2h2v-2zM516 248v2h2v-2zM520 224v4h1v-4zM520 230v2h1v-2zM521 172v2h1v-2zM521 232v2h1v-2zM522 230v2h2v-2zM522 238v2h2v-2zM522 242v2h2v-2zM522 248v2h2v-2zM524 224v2h2v-2zM524 228v2h2v-2zM524 238v2h2v-2zM526 240v2h1v-2zM526 246v2h1v-2zM527 240v2h1v-2zM527 246v4h1v-4zM528 238v4h2v-4zM528 244v2h2v-2zM532 232v2h1v-2zM532 238v2h1v-2zM533 240v4h1v-4zM534 168v2h2v-2zM534 240v2h2v-2zM536 168v2h2v-2zM536 226v2h2v-2zM536 232v2h2v-2zM536 238v2h2v-2zM538 230v2h1v-2zM538 234v2h1v-2zM538 238v2h1v-2zM539 228v2h1v-2zM539 232v2h1v-2zM539 252v2h1v-2zM540 226v2h2v-2zM540 230v2h2v-2zM540 236v2h2v-2zM544 226v2h1v-2zM544 232v4h1v-4zM544 240v2h1v-2zM545 232v2h1v-2zM546 176v2h2v-2zM546 226v2h2v-2zM548 214v2h2v-2zM548 228v2h2v-2zM548 250v2h2v-2zM550 242v6h1v-6zM550 252v2h1v-2zM551 208v2h1v-2zM551 224v2h1v-2zM551 230v2h1v-2zM551 236v2h1v-2zM551 240v4h1v-4zM552 210v2h2v-2zM554 202v6h2v-6zM556 192v2h1v-2zM556 202v2h1v-2zM556 218v6h1v-6zM557 192v6h1v-6zM557 220v2h1v-2zM557 228v2h1v-2zM557 236v2h1v-2zM558 206v2h2v-2zM560 202v2h2v-2zM560 238v2h2v-2zM560 242v2h2v-2zM562 198v2h1v-2zM562 204v2h1v-2zM562 250v2h1v-2zM563 194v2h1v-2zM563 210v2h1v-2zM563 228v4h1v-4zM563 252v2h1v-2zM564 202v2h2v-2zM564 214v6h2v-6zM566 210v2h2v-2zM566 232v2h2v-2zM568 204v2h1v-2zM569 214v4h1v-4zM569 224v2h1v-2zM569 238v2h1v-2zM569 246v2h1v-2zM570 220v4h2v-4zM572 190v2h2v-2zM572 208v4h2v-4zM572 240v2h2v-2zM572 244v2h2v-2zM572 252v2h2v-2zM574 226v6h1v-6zM575 204v2h1v-2zM575 226v2h1v-2zM575 230v2h1v-2zM575 242v2h1v-2zM575 246v2h1v-2zM576 216v2h2v-2zM576 232v2h2v-2zM576 240v2h2v-2zM578 232v2h2v-2zM578 236v2h2v-2zM580 210v2h1v-2zM580 218v2h1v-2zM580 228v2h1v-2zM580 232v4h1v-4zM580 240v2h1v-2zM581 204v2h1v-2zM581 210v2h1v-2zM581 218v2h1v-2zM581 230v2h1v-2zM581 234v2h1v-2zM581 238v2h1v-2zM581 248v2h1v-2zM582 208v2h2v-2zM582 212v4h2v-4zM582 234v2h2v-2zM582 242v2h2v-2zM584 206v4h2v-4zM584 224v2h2v-2zM584 232v2h2v-2zM586 200v2h1v-2zM586 208v2h1v-2zM586 238v2h1v-2zM586 242v2h1v-2zM587 208v2h1v-2zM587 212v2h1v-2zM587 240v2h1v-2zM588 222v2h2v-2zM588 242v2h2v-2zM590 206v2h2v-2zM590 210v2h2v-2zM590 222v2h2v-2zM590 228v2h2v-2zM592 202v2h1v-2zM593 194v2h1v-2zM593 224v2h1v-2zM593 228v2h1v-2zM593 238v2h1v-2zM593 246v2h1v-2zM594 212v2h2v-2zM596 202v2h2v-2zM596 220v2h2v-2zM596 234v2h2v-2zM596 240v2h2v-2zM596 244v2h2v-2zM599 196v2h1v-2zM599 230v2h1v-2zM599 238v2h1v-2zM599 246v2h1v-2zM600 214v2h2v-2zM600 228v4h2v-4zM600 238v2h2v-2zM602 250v2h2v-2zM604 214v2h1v-2zM604 236v2h1v-2zM604 240v4h1v-4zM605 204v4h1v-4zM605 224v2h1v-2zM605 230v4h1v-4zM606 208v4h2v-4zM606 216v2h2v-2zM606 220v2h2v-2zM608 230v2h2v-2zM610 198v2h1v-2zM610 204v4h1v-4zM610 232v2h1v-2zM611 226v2h1v-2zM611 234v2h1v-2zM612 200v2h2v-2zM612 206v2h2v-2zM612 214v2h2v-2zM612 236v2h2v-2zM614 244v4h2v-4zM616 192v2h1v-2zM616 210v2h1v-2zM616 228v2h1v-2zM616 238v2h1v-2zM616 246v2h1v-2zM616 252v2h1v-2zM618 198v4h2v-4zM620 212v2h2v-2zM620 222v2h2v-2zM620 236v2h2v-2zM620 242v2h2v-2zM622 210v2h1v-2zM622 236v2h1v-2zM623 224v2h1v-2zM624 192v2h2v-2zM624 204v2h2v-2zM624 212v2h2v-2zM624 220v2h2v-2zM624 236v2h2v-2zM626 192v4h2v-4zM626 202v2h2v-2zM626 210v2h2v-2zM626 246v4h2v-4zM628 196v4h1v-4zM628 204v2h1v-2zM628 230v2h1v-2zM629 226v4h1v-4zM629 234v2h1v-2zM629 238v4h1v-4zM629 246v2h1v-2zM630 202v4h2v-4zM630 210v4h2v-4zM630 216v4h2v-4zM630 238v2h2v-2zM632 206v2h2v-2zM632 214v2h2v-2zM632 242v2h2v-2zM632 248v2h2v-2zM632 252v2h2v-2zM634 202v2h1v-2zM634 216v2h1v-2zM634 246v2h1v-2zM635 206v4h1v-4zM635 216v2h1v-2zM635 228v4h1v-4zM636 200v2h2v-2zM636 212v2h2v-2zM636 224v2h2v-2zM636 242v2h2v-2zM638 210v4h2v-4zM640 214v2h1v-2zM640 224v4h1v-4zM640 240v4h1v-4zM640 246v2h1v-2zM641 204v2h1v-2zM641 208v2h1v-2zM641 216v2h1v-2zM641 238v2h1v-2zM642 214v2h2v-2zM642 230v2h2v-2zM642 236v2h2v-2zM644 192v2h2v-2zM644 206v2h2v-2zM644 214v2h2v-2zM644 226v2h2v-2zM644 248v2h2v-2zM646 208v2h1v-2zM646 232v2h1v-2zM646 244v2h1v-2zM647 202v2h1v-2zM647 224v2h1v-2zM647 230v4h1v-4zM647 236v2h1v-2zM648 210v2h2v-2zM648 214v2h2v-2zM648 222v2h2v-2zM648 226v2h2v-2zM648 234v2h2v-2zM650 206v2h2v-2zM650 240v2h2v-2zM652 242v2h1v-2zM654 248v2h2v-2zM656 246v2h2v-2zM658 240v2h1v-2zM659 218v2h1v-2zM659 226v2h1v-2zM659 240v4h1v-4zM660 234v2h2v-2zM662 246v2h2v-2zM664 252v4h1v-4zM665 238v2h1v-2zM665 246v4h1v-4zM666 238v2h2v-2zM666 250v2h2v-2zM671 168v2h1v-2zM671 228v2h1v-2zM671 232v2h1v-2zM671 236v2h1v-2zM672 232v2h2v-2zM674 222v2h2v-2zM677 236v2h1v-2zM677 244v2h1v-2zM678 246v2h2v-2zM680 242v2h2v-2zM680 246v2h2v-2zM682 240v4h1v-4zM683 234v2h1v-2zM684 236v2h2v-2zM688 234v2h1v-2zM688 240v4h1v-4zM692 168v2h2v-2zM692 172v2h2v-2zM692 242v4h2v-4zM692 248v2h2v-2zM694 170v2h1v-2zM694 246v4h1v-4zM695 234v6h1v-6zM695 242v2h1v-2zM696 250v2h2v-2zM700 250v2h1v-2zM701 244v2h1v-2zM701 248v4h1v-4zM704 238v2h2v-2zM704 244v2h2v-2zM706 216v2h1v-2zM706 230v2h1v-2zM443 250h2v2h-2zM481 260h2v2h-2z"/><path fill="#00fff7" d="M365 236v2h1v-2zM370 194v4h1v-4zM370 202v2h1v-2zM370 226v2h1v-2zM370 232v2h1v-2zM370 236v2h1v-2zM371 222v2h1v-2zM371 236v2h1v-2zM372 224v2h2v-2zM374 226v2h2v-2zM376 186v2h1v-2zM378 232v2h2v-2zM380 228v2h2v-2zM382 208v2h1v-2zM382 222v2h1v-2zM384 248v2h2v-2zM388 228v2h1v-2zM390 220v2h2v-2zM390 230v2h2v-2zM392 192v2h2v-2zM395 232v2h1v-2zM396 196v2h2v-2zM396 206v2h2v-2zM398 200v6h2v-6zM398 212v4h2v-4zM400 178v2h1v-2zM400 228v2h1v-2zM400 232v2h1v-2zM401 188v4h1v-4zM401 216v2h1v-2zM401 226v2h1v-2zM401 240v2h1v-2zM402 190v4h2v-4zM402 200v2h2v-2zM402 206v2h2v-2zM402 230v2h2v-2zM402 242v2h2v-2zM402 248v2h2v-2zM404 176v2h2v-2zM404 196v4h2v-4zM404 242v2h2v-2zM406 204v2h1v-2zM406 218v2h1v-2zM406 228v2h1v-2zM407 216v2h1v-2zM407 224v2h1v-2zM407 228v2h1v-2zM408 206v2h2v-2zM408 212v2h2v-2zM408 216v4h2v-4zM408 226v4h2v-4zM408 232v4h2v-4zM408 246v2h2v-2zM410 188v2h2v-2zM410 228v2h2v-2zM412 204v2h1v-2zM412 214v2h1v-2zM412 218v2h1v-2zM413 212v2h1v-2zM413 218v4h1v-4zM413 224v2h1v-2zM413 232v4h1v-4zM413 240v2h1v-2zM414 214v2h2v-2zM414 234v2h2v-2zM414 240v2h2v-2zM416 190v2h2v-2zM416 196v4h2v-4zM416 204v2h2v-2zM416 224v4h2v-4zM416 238v2h2v-2zM418 206v2h1v-2zM418 210v2h1v-2zM418 220v2h1v-2zM418 226v2h1v-2zM419 192v2h1v-2zM419 196v2h1v-2zM419 200v4h1v-4zM419 210v2h1v-2zM419 220v2h1v-2zM419 226v2h1v-2zM419 230v2h1v-2zM419 238v2h1v-2zM420 224v2h2v-2zM420 230v2h2v-2zM420 234v2h2v-2zM422 222v2h2v-2zM424 204v4h1v-4zM424 216v2h1v-2zM424 232v2h1v-2zM424 238v2h1v-2zM425 198v2h1v-2zM425 204v2h1v-2zM426 216v2h2v-2zM426 230v2h2v-2zM428 202v2h2v-2zM428 206v2h2v-2zM428 212v2h2v-2zM428 220v2h2v-2zM430 188v2h1v-2zM430 244v2h1v-2zM431 188v2h1v-2zM431 208v2h1v-2zM431 238v2h1v-2zM432 198v2h2v-2zM432 208v2h2v-2zM432 228v2h2v-2zM432 234v2h2v-2zM434 200v2h2v-2zM434 208v2h2v-2zM434 222v2h2v-2zM434 234v2h2v-2zM436 204v2h1v-2zM436 212v2h1v-2zM437 196v2h1v-2zM437 208v2h1v-2zM437 220v2h1v-2zM438 196v2h2v-2zM438 232v2h2v-2zM440 212v2h2v-2zM440 234v4h2v-4zM442 200v2h1v-2zM442 212v2h1v-2zM442 224v2h1v-2zM442 232v2h1v-2zM442 236v4h1v-4zM443 194v2h1v-2zM443 214v2h1v-2zM443 228v2h1v-2zM443 234v2h1v-2zM444 204v2h2v-2zM444 216v2h2v-2zM446 176v2h2v-2zM446 206v2h2v-2zM448 238v2h1v-2zM449 242v2h1v-2zM450 168v2h2v-2zM450 230v2h2v-2zM450 234v2h2v-2zM450 244v2h2v-2zM452 170v4h2v-4zM452 224v2h2v-2zM452 238v6h2v-6zM452 248v2h2v-2zM454 226v2h1v-2zM454 230v6h1v-6zM455 168v4h1v-4zM456 238v2h2v-2zM458 220v2h2v-2zM458 224v2h2v-2zM460 172v2h1v-2zM460 232v2h1v-2zM462 228v2h2v-2zM462 232v4h2v-4zM464 228v2h2v-2zM464 232v2h2v-2zM464 238v2h2v-2zM466 174v2h1v-2zM466 212v2h1v-2zM466 222v2h1v-2zM467 218v2h1v-2zM468 170v4h2v-4zM468 244v2h2v-2zM470 172v4h2v-4zM470 226v2h2v-2zM470 246v2h2v-2zM472 176v2h1v-2zM473 228v2h1v-2zM473 240v2h1v-2zM473 246v2h1v-2zM474 170v2h2v-2zM474 232v2h2v-2zM476 222v2h2v-2zM476 228v2h2v-2zM478 174v2h1v-2zM478 232v2h1v-2zM478 242v2h1v-2zM479 232v2h1v-2zM479 240v2h1v-2zM480 228v2h2v-2zM480 242v2h2v-2zM484 234v2h1v-2zM484 248v2h1v-2zM485 236v4h1v-4zM486 220v2h2v-2zM486 228v4h2v-4zM486 238v2h2v-2zM488 236v2h2v-2zM488 240v2h2v-2zM488 246v2h2v-2zM490 168v2h1v-2zM490 232v2h1v-2zM490 236v2h1v-2zM490 244v4h1v-4zM491 170v2h1v-2zM491 218v2h1v-2zM492 222v2h2v-2zM494 228v2h2v-2zM494 232v2h2v-2zM494 244v2h2v-2zM496 168v2h1v-2zM496 226v2h1v-2zM496 240v2h1v-2zM497 228v2h1v-2zM497 238v2h1v-2zM498 170v4h2v-4zM498 230v6h2v-6zM502 170v2h1v-2zM502 226v2h1v-2zM502 234v2h1v-2zM502 240v2h1v-2zM503 228v2h1v-2zM504 172v2h2v-2zM504 232v2h2v-2zM506 228v2h2v-2zM506 248v2h2v-2zM508 220v2h1v-2zM508 228v2h1v-2zM508 232v2h1v-2zM508 240v2h1v-2zM509 232v2h1v-2zM509 246v2h1v-2zM510 172v2h2v-2zM510 232v2h2v-2zM510 244v2h2v-2zM512 240v2h2v-2zM515 168v2h1v-2zM515 236v2h1v-2zM516 172v2h2v-2zM516 228v2h2v-2zM518 230v2h2v-2zM518 242v2h2v-2zM520 176v2h1v-2zM520 214v2h1v-2zM520 218v2h1v-2zM520 222v2h1v-2zM521 234v2h1v-2zM522 172v4h2v-4zM522 240v2h2v-2zM524 176v2h2v-2zM524 220v2h2v-2zM524 226v2h2v-2zM524 236v2h2v-2zM526 244v2h1v-2zM527 244v2h1v-2zM528 234v2h2v-2zM530 170v2h2v-2zM530 238v2h2v-2zM532 230v2h1v-2zM533 234v2h1v-2zM533 244v2h1v-2zM534 246v4h2v-4zM536 170v2h2v-2zM538 224v2h1v-2zM538 236v2h1v-2zM539 226v2h1v-2zM539 236v2h1v-2zM539 244v2h1v-2zM540 240v2h2v-2zM542 174v2h2v-2zM542 220v2h2v-2zM544 222v4h1v-4zM544 230v2h1v-2zM545 212v2h1v-2zM545 236v2h1v-2zM545 244v2h1v-2zM546 174v2h2v-2zM546 180v2h2v-2zM546 238v2h2v-2zM548 186v2h2v-2zM548 198v2h2v-2zM548 206v2h2v-2zM548 210v4h2v-4zM548 234v2h2v-2zM548 244v2h2v-2zM548 252v2h2v-2zM550 234v2h1v-2zM550 240v2h1v-2zM551 202v4h1v-4zM551 218v2h1v-2zM551 234v2h1v-2zM551 250v2h1v-2zM552 202v2h2v-2zM552 216v2h2v-2zM552 220v2h2v-2zM552 228v6h2v-6zM552 240v4h2v-4zM554 210v4h2v-4zM554 222v2h2v-2zM554 226v2h2v-2zM554 236v2h2v-2zM556 226v2h1v-2zM556 230v2h1v-2zM556 234v2h1v-2zM557 202v4h1v-4zM557 222v2h1v-2zM557 238v2h1v-2zM557 248v2h1v-2zM558 222v2h2v-2zM560 198v4h2v-4zM560 222v2h2v-2zM560 234v2h2v-2zM562 188v2h1v-2zM562 230v2h1v-2zM562 236v2h1v-2zM563 198v4h1v-4zM563 204v2h1v-2zM563 216v6h1v-6zM563 246v2h1v-2zM564 226v2h2v-2zM566 208v2h2v-2zM566 216v2h2v-2zM566 228v2h2v-2zM568 226v2h1v-2zM569 200v2h1v-2zM569 204v2h1v-2zM569 208v2h1v-2zM569 226v2h1v-2zM569 244v2h1v-2zM570 210v4h2v-4zM570 224v2h2v-2zM570 232v2h2v-2zM572 214v2h2v-2zM572 218v4h2v-4zM572 238v2h2v-2zM572 242v2h2v-2zM574 218v2h1v-2zM574 240v2h1v-2zM574 244v2h1v-2zM575 212v6h1v-6zM575 228v2h1v-2zM575 236v2h1v-2zM576 222v2h2v-2zM576 234v4h2v-4zM578 206v2h2v-2zM578 222v2h2v-2zM578 226v4h2v-4zM578 240v2h2v-2zM580 212v2h1v-2zM580 222v2h1v-2zM580 238v2h1v-2zM581 228v2h1v-2zM581 232v2h1v-2zM581 236v2h1v-2zM581 240v4h1v-4zM581 246v2h1v-2zM582 216v2h2v-2zM582 248v2h2v-2zM584 198v2h2v-2zM584 216v2h2v-2zM584 222v2h2v-2zM584 236v2h2v-2zM584 240v2h2v-2zM586 216v2h1v-2zM586 240v2h1v-2zM586 246v2h1v-2zM587 220v2h1v-2zM587 226v2h1v-2zM588 208v2h2v-2zM588 218v2h2v-2zM588 226v2h2v-2zM588 240v2h2v-2zM590 224v2h2v-2zM590 240v2h2v-2zM592 204v2h1v-2zM592 212v2h1v-2zM592 222v2h1v-2zM592 230v6h1v-6zM593 200v2h1v-2zM593 214v2h1v-2zM594 222v2h2v-2zM594 228v2h2v-2zM594 232v2h2v-2zM596 230v4h2v-4zM596 238v2h2v-2zM598 208v2h1v-2zM598 220v2h1v-2zM598 228v2h1v-2zM598 232v2h1v-2zM599 214v2h1v-2zM599 236v2h1v-2zM599 240v2h1v-2zM600 210v2h2v-2zM600 226v2h2v-2zM602 202v2h2v-2zM602 208v2h2v-2zM602 222v2h2v-2zM604 228v2h1v-2zM604 234v2h1v-2zM605 218v4h1v-4zM605 226v2h1v-2zM605 234v2h1v-2zM605 238v2h1v-2zM606 202v2h2v-2zM606 224v2h2v-2zM606 238v2h2v-2zM606 248v2h2v-2zM608 200v2h2v-2zM608 214v2h2v-2zM608 220v2h2v-2zM608 228v2h2v-2zM608 236v2h2v-2zM608 240v4h2v-4zM610 214v2h1v-2zM610 230v2h1v-2zM612 220v2h2v-2zM612 238v2h2v-2zM612 246v2h2v-2zM614 194v2h2v-2zM614 198v2h2v-2zM614 204v4h2v-4zM614 212v2h2v-2zM614 228v2h2v-2zM614 238v2h2v-2zM616 214v2h1v-2zM616 218v2h1v-2zM616 236v2h1v-2zM616 244v2h1v-2zM617 198v2h1v-2zM617 204v4h1v-4zM617 216v2h1v-2zM617 224v2h1v-2zM617 228v2h1v-2zM618 206v2h2v-2zM620 218v2h2v-2zM620 230v2h2v-2zM620 238v2h2v-2zM622 230v2h1v-2zM623 220v4h1v-4zM623 238v2h1v-2zM624 216v4h2v-4zM626 200v2h2v-2zM626 204v2h2v-2zM626 212v2h2v-2zM626 226v4h2v-4zM628 218v2h1v-2zM628 224v2h1v-2zM628 234v2h1v-2zM628 244v2h1v-2zM629 208v2h1v-2zM629 214v2h1v-2zM629 236v2h1v-2zM629 242v2h1v-2zM629 250v2h1v-2zM630 200v2h2v-2zM630 230v2h2v-2zM630 234v2h2v-2zM632 200v2h2v-2zM632 210v2h2v-2zM632 216v4h2v-4zM632 228v4h2v-4zM635 220v2h1v-2zM635 238v2h1v-2zM638 218v2h2v-2zM638 228v2h2v-2zM638 234v2h2v-2zM638 240v2h2v-2zM640 202v2h1v-2zM640 220v4h1v-4zM640 228v2h1v-2zM640 234v2h1v-2zM641 210v6h1v-6zM641 222v4h1v-4zM642 210v2h2v-2zM642 216v2h2v-2zM642 220v2h2v-2zM644 204v2h2v-2zM644 236v4h2v-4zM644 246v2h2v-2zM646 198v2h1v-2zM646 230v2h1v-2zM647 198v2h1v-2zM647 204v2h1v-2zM647 208v4h1v-4zM647 216v4h1v-4zM647 234v2h1v-2zM647 242v2h1v-2zM648 212v2h2v-2zM648 228v4h2v-4zM648 240v2h2v-2zM650 194v2h2v-2zM650 198v2h2v-2zM650 246v2h2v-2zM652 194v2h1v-2zM652 202v2h1v-2zM652 238v2h1v-2zM653 234v2h1v-2zM653 240v2h1v-2zM654 194v2h2v-2zM654 224v2h2v-2zM654 230v2h2v-2zM656 236v4h2v-4zM656 244v2h2v-2zM659 234v2h1v-2zM659 238v2h1v-2zM660 210v2h2v-2zM660 226v2h2v-2zM660 244v4h2v-4zM662 224v2h2v-2zM664 228v2h1v-2zM664 248v2h1v-2zM665 240v4h1v-4zM666 168v2h2v-2zM666 240v2h2v-2zM668 238v2h2v-2zM668 244v2h2v-2zM670 240v2h1v-2zM670 246v2h1v-2zM671 170v2h1v-2zM671 174v2h1v-2zM671 226v2h1v-2zM671 234v2h1v-2zM671 238v2h1v-2zM671 248v2h1v-2zM672 236v2h2v-2zM672 246v2h2v-2zM674 174v2h2v-2zM674 236v2h2v-2zM676 236v2h1v-2zM677 240v2h1v-2zM678 230v2h2v-2zM678 234v2h2v-2zM678 238v4h2v-4zM682 234v2h1v-2zM682 244v2h1v-2zM683 236v2h1v-2zM683 244v2h1v-2zM683 248v2h1v-2zM684 168v6h2v-6zM684 176v2h2v-2zM684 222v2h2v-2zM684 226v2h2v-2zM684 230v2h2v-2zM686 246v2h2v-2zM686 254v2h2v-2zM688 252v2h1v-2zM689 168v2h1v-2zM689 232v2h1v-2zM690 244v4h2v-4zM692 232v2h2v-2zM692 238v4h2v-4zM694 242v2h1v-2zM695 230v2h1v-2zM695 244v2h1v-2zM696 240v2h2v-2zM698 242v2h2v-2zM700 234v2h1v-2zM701 220v2h1v-2zM701 234v2h1v-2zM702 234v2h2v-2zM704 236v2h2v-2zM704 240v2h2v-2zM704 246v2h2v-2zM706 170v2h1v-2zM706 174v2h1v-2zM706 224v2h1v-2z"/><path fill="#00ffcf" d="M366 242v2h2v-2zM370 230v2h1v-2zM377 216v2h1v-2zM377 222v2h1v-2zM377 234v4h1v-4zM378 210v4h2v-4zM380 234v2h2v-2zM384 238v2h2v-2zM388 236v2h1v-2zM390 232v4h2v-4zM392 200v2h2v-2zM392 234v4h2v-4zM394 196v2h1v-2zM394 218v2h1v-2zM394 228v2h1v-2zM394 232v2h1v-2zM395 208v4h1v-4zM395 216v2h1v-2zM396 186v2h2v-2zM396 214v2h2v-2zM396 222v2h2v-2zM400 190v4h1v-4zM400 198v2h1v-2zM400 234v2h1v-2zM401 196v4h1v-4zM401 202v2h1v-2zM401 208v2h1v-2zM402 228v2h2v-2zM402 236v2h2v-2zM402 246v2h2v-2zM404 190v2h2v-2zM404 194v2h2v-2zM404 200v4h2v-4zM404 208v4h2v-4zM404 218v4h2v-4zM404 232v4h2v-4zM406 214v2h1v-2zM406 222v2h1v-2zM406 226v2h1v-2zM407 214v2h1v-2zM407 226v2h1v-2zM407 232v2h1v-2zM408 198v2h2v-2zM408 210v2h2v-2zM410 174v2h2v-2zM410 198v4h2v-4zM410 210v2h2v-2zM410 220v2h2v-2zM410 230v2h2v-2zM412 212v2h1v-2zM412 216v2h1v-2zM412 246v2h1v-2zM413 206v2h1v-2zM413 210v2h1v-2zM414 204v2h2v-2zM416 192v2h2v-2zM416 220v2h2v-2zM416 228v2h2v-2zM418 224v2h1v-2zM419 214v2h1v-2zM419 222v2h1v-2zM420 192v2h2v-2zM420 204v6h2v-6zM420 218v2h2v-2zM420 222v2h2v-2zM420 226v2h2v-2zM424 194v2h1v-2zM424 200v2h1v-2zM425 216v2h1v-2zM425 224v2h1v-2zM425 228v2h1v-2zM430 202v2h1v-2zM430 230v2h1v-2zM431 196v4h1v-4zM431 206v2h1v-2zM431 218v2h1v-2zM431 222v2h1v-2zM431 230v2h1v-2zM432 194v2h2v-2zM432 206v2h2v-2zM432 224v4h2v-4zM436 196v2h1v-2zM436 216v2h1v-2zM436 220v4h1v-4zM436 232v4h1v-4zM437 212v2h1v-2zM437 218v2h1v-2zM438 200v2h2v-2zM438 210v2h2v-2zM438 238v2h2v-2zM440 204v2h2v-2zM440 238v2h2v-2zM442 198v2h1v-2zM442 202v2h1v-2zM442 222v2h1v-2zM442 228v2h1v-2zM443 204v2h1v-2zM443 230v2h1v-2zM444 208v2h2v-2zM444 212v4h2v-4zM446 200v2h2v-2zM446 222v2h2v-2zM448 170v2h1v-2zM448 230v2h1v-2zM448 254v2h1v-2zM449 222v6h1v-6zM449 232v2h1v-2zM450 170v4h2v-4zM452 234v2h2v-2zM454 218v2h1v-2zM454 228v2h1v-2zM455 216v2h1v-2zM455 234v2h1v-2zM455 238v2h1v-2zM455 242v2h1v-2zM456 174v2h2v-2zM456 214v4h2v-4zM456 220v2h2v-2zM456 224v2h2v-2zM458 228v2h2v-2zM461 234v2h1v-2zM461 242v2h1v-2zM461 248v4h1v-4zM464 216v2h2v-2zM466 228v2h1v-2zM466 234v2h1v-2zM467 220v2h1v-2zM467 224v2h1v-2zM467 232v2h1v-2zM470 222v2h2v-2zM470 230v2h2v-2zM472 222v2h1v-2zM473 226v2h1v-2zM473 230v2h1v-2zM473 234v2h1v-2zM476 172v2h2v-2zM476 234v2h2v-2zM476 250v2h2v-2zM478 228v2h1v-2zM478 234v2h1v-2zM479 234v2h1v-2zM480 240v2h2v-2zM482 222v2h2v-2zM482 238v2h2v-2zM484 226v2h1v-2zM485 174v2h1v-2zM488 172v2h2v-2zM488 230v2h2v-2zM488 234v2h2v-2zM491 168v2h1v-2zM491 234v2h1v-2zM491 240v2h1v-2zM492 228v2h2v-2zM492 240v2h2v-2zM494 172v2h2v-2zM494 224v2h2v-2zM494 250v2h2v-2zM496 170v2h1v-2zM496 222v2h1v-2zM497 172v2h1v-2zM497 220v2h1v-2zM497 226v2h1v-2zM500 232v2h2v-2zM502 224v2h1v-2zM502 228v2h1v-2zM503 220v6h1v-6zM503 230v2h1v-2zM504 174v2h2v-2zM504 230v2h2v-2zM504 234v2h2v-2zM506 174v2h2v-2zM506 216v2h2v-2zM506 236v4h2v-4zM508 226v2h1v-2zM509 226v4h1v-4zM510 226v2h2v-2zM512 212v2h2v-2zM512 228v2h2v-2zM514 224v2h1v-2zM514 234v2h1v-2zM515 232v2h1v-2zM516 232v2h2v-2zM518 170v2h2v-2zM518 240v2h2v-2zM520 212v2h1v-2zM520 228v2h1v-2zM520 236v4h1v-4zM521 174v2h1v-2zM521 226v2h1v-2zM521 248v2h1v-2zM526 226v2h1v-2zM526 242v2h1v-2zM527 234v4h1v-4zM528 168v2h2v-2zM530 172v2h2v-2zM530 230v2h2v-2zM530 234v2h2v-2zM532 226v2h1v-2zM532 234v2h1v-2zM533 232v2h1v-2zM533 236v4h1v-4zM534 170v2h2v-2zM534 228v2h2v-2zM534 238v2h2v-2zM536 220v2h2v-2zM536 228v4h2v-4zM538 212v2h1v-2zM538 228v2h1v-2zM539 176v2h1v-2zM539 234v2h1v-2zM540 224v2h2v-2zM542 228v2h2v-2zM544 178v2h1v-2zM545 230v2h1v-2zM546 178v2h2v-2zM546 206v2h2v-2zM546 222v2h2v-2zM546 228v2h2v-2zM546 236v2h2v-2zM546 246v2h2v-2zM548 190v2h2v-2zM548 224v2h2v-2zM548 232v2h2v-2zM548 240v2h2v-2zM550 202v2h1v-2zM550 214v2h1v-2zM550 220v2h1v-2zM550 226v2h1v-2zM551 206v2h1v-2zM551 210v2h1v-2zM552 212v4h2v-4zM552 226v2h2v-2zM552 236v2h2v-2zM554 196v4h2v-4zM554 214v2h2v-2zM554 220v2h2v-2zM554 224v2h2v-2zM556 198v2h1v-2zM556 214v2h1v-2zM556 228v2h1v-2zM556 236v2h1v-2zM556 240v2h1v-2zM557 208v2h1v-2zM557 212v2h1v-2zM557 230v2h1v-2zM558 214v2h2v-2zM560 194v2h2v-2zM560 228v2h2v-2zM562 200v2h1v-2zM562 214v2h1v-2zM563 196v2h1v-2zM563 212v2h1v-2zM566 202v2h2v-2zM566 218v2h2v-2zM566 222v2h2v-2zM566 236v2h2v-2zM568 214v2h1v-2zM569 228v2h1v-2zM572 222v2h2v-2zM572 226v2h2v-2zM572 236v2h2v-2zM574 216v2h1v-2zM574 232v2h1v-2zM575 210v2h1v-2zM575 234v2h1v-2zM575 238v4h1v-4zM576 220v2h2v-2zM576 224v2h2v-2zM578 216v2h2v-2zM581 214v2h1v-2zM582 210v2h2v-2zM582 218v2h2v-2zM582 226v2h2v-2zM582 232v2h2v-2zM584 212v2h2v-2zM584 228v4h2v-4zM584 238v2h2v-2zM586 212v4h1v-4zM586 222v2h1v-2zM587 218v2h1v-2zM587 232v2h1v-2zM587 238v2h1v-2zM588 234v2h2v-2zM590 214v2h2v-2zM590 218v4h2v-4zM590 242v2h2v-2zM592 200v2h1v-2zM592 208v2h1v-2zM592 228v2h1v-2zM592 240v2h1v-2zM592 244v2h1v-2zM593 210v2h1v-2zM593 216v4h1v-4zM593 236v2h1v-2zM593 240v6h1v-6zM596 200v2h2v-2zM596 208v2h2v-2zM596 212v6h2v-6zM596 224v2h2v-2zM596 236v2h2v-2zM598 192v2h1v-2zM598 242v2h1v-2zM599 208v2h1v-2zM599 234v2h1v-2zM600 220v2h2v-2zM600 224v2h2v-2zM600 232v2h2v-2zM600 242v2h2v-2zM602 244v2h2v-2zM604 222v2h1v-2zM605 212v2h1v-2zM606 228v4h2v-4zM606 234v2h2v-2zM608 226v2h2v-2zM610 216v2h1v-2zM610 220v4h1v-4zM610 238v4h1v-4zM610 246v2h1v-2zM611 218v4h1v-4zM611 244v2h1v-2zM612 224v2h2v-2zM612 228v4h2v-4zM614 222v2h2v-2zM614 232v2h2v-2zM614 236v2h2v-2zM616 232v2h1v-2zM616 242v2h1v-2zM617 232v2h1v-2zM617 242v4h1v-4zM618 210v2h2v-2zM618 224v2h2v-2zM618 228v4h2v-4zM618 238v4h2v-4zM618 244v2h2v-2zM620 200v2h2v-2zM622 220v2h1v-2zM622 232v2h1v-2zM622 240v2h1v-2zM623 214v2h1v-2zM623 218v2h1v-2zM624 232v4h2v-4zM626 222v4h2v-4zM628 214v2h1v-2zM628 238v2h1v-2zM628 242v2h1v-2zM629 222v2h1v-2zM630 206v2h2v-2zM630 214v2h2v-2zM630 222v2h2v-2zM630 226v4h2v-4zM630 236v2h2v-2zM632 222v2h2v-2zM632 236v2h2v-2zM632 240v2h2v-2zM634 196v2h1v-2zM634 218v2h1v-2zM634 224v2h1v-2zM634 236v2h1v-2zM635 214v2h1v-2zM635 226v2h1v-2zM635 236v2h1v-2zM635 240v2h1v-2zM636 208v2h2v-2zM636 216v2h2v-2zM636 236v2h2v-2zM640 200v2h1v-2zM640 238v2h1v-2zM641 226v8h1v-8zM641 242v4h1v-4zM642 222v2h2v-2zM642 238v2h2v-2zM644 222v4h2v-4zM644 232v2h2v-2zM646 214v2h1v-2zM646 220v2h1v-2zM646 226v2h1v-2zM646 236v2h1v-2zM647 212v2h1v-2zM647 226v2h1v-2zM650 200v2h2v-2zM650 220v2h2v-2zM650 236v2h2v-2zM652 192v2h1v-2zM652 196v2h1v-2zM652 236v2h1v-2zM653 192v2h1v-2zM653 242v2h1v-2zM653 246v4h1v-4zM654 190v2h2v-2zM654 222v2h2v-2zM654 232v2h2v-2zM654 238v2h2v-2zM658 176v2h1v-2zM658 236v4h1v-4zM658 242v2h1v-2zM659 176v4h1v-4zM659 246v2h1v-2zM660 230v2h2v-2zM660 238v4h2v-4zM662 216v2h2v-2zM662 234v2h2v-2zM664 240v2h1v-2zM664 244v2h1v-2zM665 244v2h1v-2zM666 216v2h2v-2zM666 234v2h2v-2zM666 242v2h2v-2zM668 230v2h2v-2zM668 242v2h2v-2zM672 168v2h2v-2zM672 238v2h2v-2zM672 242v2h2v-2zM676 170v2h1v-2zM676 224v2h1v-2zM676 248v2h1v-2zM677 238v2h1v-2zM678 168v2h2v-2zM678 242v2h2v-2zM682 238v2h1v-2zM682 246v2h1v-2zM684 232v2h2v-2zM684 244v2h2v-2zM688 228v2h1v-2zM688 236v4h1v-4zM688 244v2h1v-2zM689 234v2h1v-2zM689 238v2h1v-2zM692 236v2h2v-2zM694 168v2h1v-2zM694 174v2h1v-2zM694 220v2h1v-2zM694 228v2h1v-2zM695 232v2h1v-2zM695 240v2h1v-2zM696 232v2h2v-2zM698 230v2h2v-2zM698 246v2h2v-2zM700 240v2h1v-2zM701 174v2h1v-2zM701 218v2h1v-2zM701 226v2h1v-2zM701 232v2h1v-2zM701 238v6h1v-6zM702 170v2h2v-2zM702 236v2h2v-2zM702 242v2h2v-2zM706 172v2h1v-2zM706 178v2h1v-2zM706 232v2h1v-2z"/><path fill="#00ffa7" d="M366 222v2h2v-2zM370 224v2h1v-2zM392 208v2h2v-2zM392 230v2h2v-2zM394 212v2h1v-2zM394 222v2h1v-2zM394 234v2h1v-2zM395 204v2h1v-2zM395 212v2h1v-2zM395 224v2h1v-2zM395 234v2h1v-2zM396 218v2h2v-2zM398 230v2h2v-2zM400 194v2h1v-2zM400 200v2h1v-2zM400 224v2h1v-2zM401 224v2h1v-2zM401 232v4h1v-4zM402 196v4h2v-4zM402 218v4h2v-4zM402 232v2h2v-2zM404 214v2h2v-2zM404 222v2h2v-2zM404 236v2h2v-2zM406 216v2h1v-2zM406 224v2h1v-2zM407 212v2h1v-2zM407 218v4h1v-4zM408 208v2h2v-2zM410 196v2h2v-2zM410 214v2h2v-2zM410 222v2h2v-2zM413 226v2h1v-2zM414 202v2h2v-2zM414 206v2h2v-2zM414 216v2h2v-2zM416 200v2h2v-2zM416 214v2h2v-2zM416 218v2h2v-2zM419 206v2h1v-2zM419 216v4h1v-4zM419 228v2h1v-2zM420 194v2h2v-2zM420 198v2h2v-2zM424 212v2h1v-2zM424 222v4h1v-4zM425 202v2h1v-2zM426 220v2h2v-2zM428 208v2h2v-2zM428 224v2h2v-2zM430 194v2h1v-2zM430 204v2h1v-2zM430 216v2h1v-2zM430 222v2h1v-2zM431 202v4h1v-4zM431 220v2h1v-2zM431 226v2h1v-2zM432 204v2h2v-2zM432 210v2h2v-2zM432 218v2h2v-2zM432 222v2h2v-2zM434 214v4h2v-4zM434 224v2h2v-2zM437 214v4h1v-4zM437 234v2h1v-2zM438 202v4h2v-4zM438 214v2h2v-2zM438 218v4h2v-4zM438 226v2h2v-2zM440 188v2h2v-2zM440 194v2h2v-2zM440 206v4h2v-4zM440 214v4h2v-4zM442 226v2h1v-2zM442 230v2h1v-2zM443 200v2h1v-2zM443 210v4h1v-4zM443 216v2h1v-2zM443 220v2h1v-2zM444 218v2h2v-2zM444 224v2h2v-2zM446 184v2h2v-2zM448 224v2h1v-2zM448 234v2h1v-2zM449 168v2h1v-2zM450 222v2h2v-2zM452 226v2h2v-2zM452 232v2h2v-2zM454 174v2h1v-2zM454 212v2h1v-2zM454 220v4h1v-4zM455 226v2h1v-2zM455 244v4h1v-4zM456 228v2h2v-2zM458 226v2h2v-2zM460 228v2h1v-2zM460 234v2h1v-2zM461 230v2h1v-2zM461 236v4h1v-4zM461 244v2h1v-2zM462 174v2h2v-2zM462 216v2h2v-2zM462 220v2h2v-2zM462 226v2h2v-2zM462 236v2h2v-2zM464 214v2h2v-2zM464 224v2h2v-2zM464 230v2h2v-2zM466 232v2h1v-2zM467 216v2h1v-2zM468 174v2h2v-2zM468 218v2h2v-2zM468 226v2h2v-2zM468 230v2h2v-2zM470 210v2h2v-2zM470 218v4h2v-4zM472 220v2h1v-2zM472 224v4h1v-4zM473 172v2h1v-2zM473 232v2h1v-2zM474 222v2h2v-2zM478 230v2h1v-2zM479 170v4h1v-4zM479 218v2h1v-2zM479 226v2h1v-2zM480 170v2h2v-2zM480 226v2h2v-2zM480 230v6h2v-6zM480 252v2h2v-2zM482 174v2h2v-2zM482 212v2h2v-2zM482 230v2h2v-2zM484 174v2h1v-2zM484 216v2h1v-2zM485 212v2h1v-2zM485 228v2h1v-2zM485 232v2h1v-2zM485 242v2h1v-2zM486 216v2h2v-2zM486 224v2h2v-2zM488 168v2h2v-2zM490 218v2h1v-2zM490 222v2h1v-2zM490 226v4h1v-4zM491 172v2h1v-2zM492 226v2h2v-2zM492 232v4h2v-4zM494 220v4h2v-4zM494 238v2h2v-2zM496 172v2h1v-2zM496 218v2h1v-2zM496 224v2h1v-2zM496 230v2h1v-2zM496 244v2h1v-2zM498 174v2h2v-2zM498 218v2h2v-2zM500 218v4h2v-4zM500 236v2h2v-2zM504 214v2h2v-2zM506 232v2h2v-2zM508 176v2h1v-2zM509 176v2h1v-2zM509 222v2h1v-2zM510 234v2h2v-2zM512 174v2h2v-2zM512 208v2h2v-2zM512 218v4h2v-4zM514 232v2h1v-2zM514 236v6h1v-6zM514 244v2h1v-2zM515 222v2h1v-2zM515 226v2h1v-2zM515 234v2h1v-2zM515 246v2h1v-2zM516 168v2h2v-2zM516 230v2h2v-2zM518 168v2h2v-2zM518 172v4h2v-4zM518 224v2h2v-2zM518 232v2h2v-2zM518 236v2h2v-2zM521 214v2h1v-2zM522 208v2h2v-2zM522 224v2h2v-2zM524 230v2h2v-2zM526 230v2h1v-2zM526 236v2h1v-2zM527 242v2h1v-2zM528 216v2h2v-2zM528 226v2h2v-2zM528 230v2h2v-2zM530 222v4h2v-4zM530 240v2h2v-2zM532 222v2h1v-2zM533 168v4h1v-4zM536 172v2h2v-2zM536 236v2h2v-2zM536 240v2h2v-2zM538 218v4h1v-4zM539 208v2h1v-2zM539 222v4h1v-4zM539 230v2h1v-2zM540 228v2h2v-2zM540 232v2h2v-2zM542 230v2h2v-2zM542 234v2h2v-2zM544 208v2h1v-2zM544 228v2h1v-2zM545 178v2h1v-2zM545 194v2h1v-2zM545 226v2h1v-2zM548 188v2h2v-2zM548 220v2h2v-2zM550 200v2h1v-2zM550 228v2h1v-2zM550 232v2h1v-2zM550 238v2h1v-2zM551 196v2h1v-2zM551 200v2h1v-2zM551 212v2h1v-2zM551 216v2h1v-2zM551 222v2h1v-2zM552 218v2h2v-2zM556 212v2h1v-2zM556 216v2h1v-2zM556 224v2h1v-2zM557 200v2h1v-2zM557 216v4h1v-4zM557 232v2h1v-2zM558 208v2h2v-2zM558 234v2h2v-2zM560 204v2h2v-2zM560 214v2h2v-2zM560 218v2h2v-2zM562 212v2h1v-2zM562 220v4h1v-4zM562 228v2h1v-2zM563 222v2h1v-2zM564 228v4h2v-4zM568 218v2h1v-2zM569 212v2h1v-2zM569 218v4h1v-4zM570 218v2h2v-2zM572 216v2h2v-2zM572 224v2h2v-2zM572 230v2h2v-2zM574 214v2h1v-2zM575 220v4h1v-4zM576 208v2h2v-2zM576 218v2h2v-2zM578 220v2h2v-2zM578 224v2h2v-2zM578 238v2h2v-2zM578 242v2h2v-2zM581 220v4h1v-4zM581 226v2h1v-2zM582 228v2h2v-2zM582 236v2h2v-2zM584 214v2h2v-2zM584 226v2h2v-2zM586 210v2h1v-2zM586 226v2h1v-2zM586 230v2h1v-2zM587 224v2h1v-2zM587 234v2h1v-2zM588 214v2h2v-2zM588 236v2h2v-2zM592 210v2h1v-2zM592 214v2h1v-2zM592 220v2h1v-2zM592 236v4h1v-4zM592 242v2h1v-2zM592 246v2h1v-2zM594 226v2h2v-2zM596 242v2h2v-2zM598 210v4h1v-4zM598 224v2h1v-2zM598 238v4h1v-4zM599 218v2h1v-2zM599 222v2h1v-2zM600 216v4h2v-4zM600 222v2h2v-2zM600 236v2h2v-2zM602 218v2h2v-2zM602 224v6h2v-6zM602 234v2h2v-2zM602 238v4h2v-4zM604 212v2h1v-2zM604 224v2h1v-2zM604 232v2h1v-2zM605 222v2h1v-2zM606 236v2h2v-2zM606 240v4h2v-4zM608 218v2h2v-2zM608 224v2h2v-2zM612 216v2h2v-2zM612 222v2h2v-2zM612 226v2h2v-2zM612 234v2h2v-2zM612 240v4h2v-4zM614 224v2h2v-2zM614 230v2h2v-2zM616 212v2h1v-2zM617 212v4h1v-4zM617 234v2h1v-2zM617 240v2h1v-2zM618 202v2h2v-2zM618 218v2h2v-2zM618 226v2h2v-2zM618 232v6h2v-6zM620 220v2h2v-2zM622 228v2h1v-2zM622 234v2h1v-2zM623 230v2h1v-2zM624 210v2h2v-2zM624 230v2h2v-2zM624 238v2h2v-2zM624 242v4h2v-4zM626 244v2h2v-2zM628 232v2h1v-2zM629 210v2h1v-2zM629 216v2h1v-2zM630 240v2h2v-2zM632 220v2h2v-2zM634 234v2h1v-2zM634 242v2h1v-2zM635 222v2h1v-2zM635 234v2h1v-2zM635 242v2h1v-2zM636 214v2h2v-2zM636 226v6h2v-6zM638 214v2h2v-2zM638 220v2h2v-2zM638 226v2h2v-2zM638 236v2h2v-2zM640 212v2h1v-2zM640 218v2h1v-2zM640 232v2h1v-2zM640 244v2h1v-2zM641 236v2h1v-2zM644 216v2h2v-2zM644 244v2h2v-2zM646 216v2h1v-2zM646 224v2h1v-2zM646 234v2h1v-2zM647 214v2h1v-2zM647 238v2h1v-2zM647 246v2h1v-2zM648 218v2h2v-2zM648 244v2h2v-2zM650 202v2h2v-2zM650 208v2h2v-2zM650 228v4h2v-4zM650 234v2h2v-2zM650 242v2h2v-2zM652 208v2h1v-2zM652 232v2h1v-2zM653 212v2h1v-2zM653 232v2h1v-2zM654 186v2h2v-2zM654 240v2h2v-2zM656 178v2h2v-2zM656 184v2h2v-2zM656 228v2h2v-2zM656 234v2h2v-2zM656 240v2h2v-2zM658 180v2h1v-2zM658 230v2h1v-2zM659 232v2h1v-2zM660 232v2h2v-2zM662 168v2h2v-2zM662 176v2h2v-2zM664 224v2h1v-2zM665 236v2h1v-2zM666 176v2h2v-2zM666 224v2h2v-2zM666 228v4h2v-4zM668 226v2h2v-2zM668 236v2h2v-2zM670 228v2h1v-2zM670 242v2h1v-2zM670 250v4h1v-4zM672 174v2h2v-2zM672 224v2h2v-2zM674 168v2h2v-2zM676 242v4h1v-4zM677 234v2h1v-2zM678 170v2h2v-2zM680 232v2h2v-2zM680 236v6h2v-6zM683 218v2h1v-2zM683 238v2h1v-2zM684 220v2h2v-2zM686 170v2h2v-2zM686 232v2h2v-2zM686 238v2h2v-2zM688 216v2h1v-2zM689 216v2h1v-2zM689 240v6h1v-6zM690 168v2h2v-2zM690 236v2h2v-2zM694 232v2h1v-2zM694 236v6h1v-6zM695 170v2h1v-2zM695 220v2h1v-2zM695 228v2h1v-2zM696 224v2h2v-2zM698 224v2h2v-2zM698 228v2h2v-2zM698 240v2h2v-2zM698 244v2h2v-2zM701 168v4h1v-4zM701 176v2h1v-2zM701 230v2h1v-2zM702 226v2h2v-2zM702 230v4h2v-4zM702 240v2h2v-2zM704 220v2h2v-2zM704 228v2h2v-2zM704 232v2h2v-2zM704 242v2h2v-2zM706 222v2h1v-2zM706 228v2h1v-2z"/><path fill="#00ff80" d="M392 202v2h2v-2zM392 206v2h2v-2zM392 220v2h2v-2zM392 228v2h2v-2zM392 244v2h2v-2zM394 214v2h1v-2zM394 224v2h1v-2zM395 218v2h1v-2zM395 228v2h1v-2zM400 196v2h1v-2zM400 206v2h1v-2zM400 220v2h1v-2zM400 226v2h1v-2zM401 218v4h1v-4zM402 204v2h2v-2zM402 216v2h2v-2zM404 204v2h2v-2zM404 216v2h2v-2zM404 224v2h2v-2zM404 228v2h2v-2zM407 198v2h1v-2zM408 202v2h2v-2zM408 230v2h2v-2zM410 206v4h2v-4zM410 218v2h2v-2zM410 226v2h2v-2zM410 240v2h2v-2zM412 210v2h1v-2zM412 220v2h1v-2zM416 210v4h2v-4zM416 216v2h2v-2zM418 214v2h1v-2zM420 212v6h2v-6zM424 202v2h1v-2zM424 220v2h1v-2zM424 226v2h1v-2zM426 212v2h2v-2zM428 210v2h2v-2zM430 206v4h1v-4zM430 218v4h1v-4zM430 224v2h1v-2zM431 214v2h1v-2zM431 224v2h1v-2zM432 212v2h2v-2zM434 198v2h2v-2zM434 226v2h2v-2zM437 210v2h1v-2zM437 222v4h1v-4zM438 198v2h2v-2zM438 212v2h2v-2zM438 222v2h2v-2zM438 228v2h2v-2zM440 218v2h2v-2zM440 222v4h2v-4zM440 228v2h2v-2zM442 206v4h1v-4zM443 224v2h1v-2zM444 210v2h2v-2zM446 188v4h2v-4zM446 208v2h2v-2zM446 214v4h2v-4zM448 222v2h1v-2zM448 232v2h1v-2zM449 172v2h1v-2zM449 244v2h1v-2zM450 218v2h2v-2zM450 224v2h2v-2zM450 228v2h2v-2zM452 222v2h2v-2zM452 236v2h2v-2zM455 172v2h1v-2zM455 220v2h1v-2zM455 228v6h1v-6zM458 208v2h2v-2zM458 222v2h2v-2zM460 174v2h1v-2zM460 218v2h1v-2zM460 222v2h1v-2zM460 226v2h1v-2zM461 232v2h1v-2zM462 222v4h2v-4zM464 220v4h2v-4zM466 218v2h1v-2zM467 176v2h1v-2zM467 226v2h1v-2zM468 220v4h2v-4zM470 232v2h2v-2zM472 214v4h1v-4zM473 224v2h1v-2zM474 230v2h2v-2zM476 212v4h2v-4zM476 220v2h2v-2zM476 224v4h2v-4zM478 216v2h1v-2zM478 224v2h1v-2zM479 228v2h1v-2zM480 168v2h2v-2zM480 244v2h2v-2zM482 176v2h2v-2zM482 214v2h2v-2zM484 218v4h1v-4zM485 172v2h1v-2zM485 222v2h1v-2zM486 222v2h2v-2zM486 226v2h2v-2zM488 224v4h2v-4zM490 230v2h1v-2zM490 238v2h1v-2zM491 230v4h1v-4zM491 236v4h1v-4zM494 174v2h2v-2zM494 210v2h2v-2zM494 230v2h2v-2zM494 234v2h2v-2zM496 174v2h1v-2zM496 206v2h1v-2zM496 220v2h1v-2zM497 174v2h1v-2zM497 232v2h1v-2zM498 220v2h2v-2zM498 228v2h2v-2zM500 168v2h2v-2zM500 230v2h2v-2zM500 234v2h2v-2zM500 240v2h2v-2zM502 174v2h1v-2zM502 222v2h1v-2zM502 232v2h1v-2zM503 212v2h1v-2zM503 226v2h1v-2zM504 220v2h2v-2zM508 212v2h1v-2zM508 222v2h1v-2zM510 168v2h2v-2zM510 174v2h2v-2zM510 220v2h2v-2zM510 228v2h2v-2zM512 214v2h2v-2zM512 230v2h2v-2zM514 168v2h1v-2zM514 222v2h1v-2zM515 170v2h1v-2zM515 218v2h1v-2zM515 228v2h1v-2zM518 222v2h2v-2zM518 228v2h2v-2zM521 208v4h1v-4zM521 220v4h1v-4zM521 230v2h1v-2zM522 234v4h2v-4zM524 212v2h2v-2zM526 168v2h1v-2zM526 232v2h1v-2zM528 170v2h2v-2zM528 228v2h2v-2zM530 236v2h2v-2zM532 174v2h1v-2zM532 236v2h1v-2zM533 224v2h1v-2zM534 226v2h2v-2zM534 230v6h2v-6zM536 174v2h2v-2zM536 224v2h2v-2zM536 242v2h2v-2zM538 176v2h1v-2zM538 206v4h1v-4zM539 216v2h1v-2zM545 182v2h1v-2zM545 216v2h1v-2zM545 224v2h1v-2zM546 182v4h2v-4zM546 200v2h2v-2zM546 220v2h2v-2zM546 224v2h2v-2zM548 200v2h2v-2zM548 218v2h2v-2zM548 222v2h2v-2zM548 230v2h2v-2zM550 192v2h1v-2zM550 208v2h1v-2zM550 230v2h1v-2zM552 222v2h2v-2zM554 230v2h2v-2zM556 210v2h1v-2zM557 206v2h1v-2zM557 214v2h1v-2zM557 224v2h1v-2zM560 206v6h2v-6zM560 216v2h2v-2zM560 224v4h2v-4zM560 230v2h2v-2zM562 208v2h1v-2zM562 216v2h1v-2zM562 234v2h1v-2zM563 214v2h1v-2zM563 236v2h1v-2zM569 210v2h1v-2zM572 202v2h2v-2zM572 212v2h2v-2zM572 228v2h2v-2zM572 232v2h2v-2zM574 206v2h1v-2zM580 220v2h1v-2zM582 222v2h2v-2zM584 218v4h2v-4zM586 218v2h1v-2zM587 228v2h1v-2zM588 216v2h2v-2zM592 224v4h1v-4zM593 208v2h1v-2zM593 220v2h1v-2zM593 226v2h1v-2zM593 230v2h1v-2zM593 234v2h1v-2zM594 216v2h2v-2zM596 198v2h2v-2zM596 222v2h2v-2zM596 226v2h2v-2zM599 224v2h1v-2zM602 212v2h2v-2zM602 230v4h2v-4zM602 236v2h2v-2zM606 212v2h2v-2zM606 218v2h2v-2zM610 226v2h1v-2zM612 212v2h2v-2zM614 218v2h2v-2zM614 226v2h2v-2zM614 234v2h2v-2zM616 224v2h1v-2zM616 230v2h1v-2zM617 218v4h1v-4zM617 236v2h1v-2zM618 204v2h2v-2zM618 212v2h2v-2zM618 216v2h2v-2zM618 222v2h2v-2zM618 242v2h2v-2zM620 224v2h2v-2zM620 234v2h2v-2zM622 218v2h1v-2zM623 236v2h1v-2zM624 214v2h2v-2zM626 218v2h2v-2zM626 234v6h2v-6zM628 200v2h1v-2zM628 212v2h1v-2zM628 216v2h1v-2zM628 220v2h1v-2zM629 220v2h1v-2zM630 220v2h2v-2zM630 224v2h2v-2zM630 242v2h2v-2zM632 208v2h2v-2zM632 212v2h2v-2zM632 244v2h2v-2zM634 222v2h1v-2zM634 226v4h1v-4zM634 238v2h1v-2zM635 210v2h1v-2zM635 218v2h1v-2zM635 224v2h1v-2zM636 220v2h2v-2zM636 238v4h2v-4zM644 200v2h2v-2zM644 212v2h2v-2zM648 224v2h2v-2zM650 214v4h2v-4zM650 226v2h2v-2zM652 198v2h1v-2zM652 204v2h1v-2zM652 210v2h1v-2zM652 216v2h1v-2zM652 240v2h1v-2zM652 246v2h1v-2zM653 190v2h1v-2zM653 194v2h1v-2zM653 226v2h1v-2zM654 208v2h2v-2zM654 218v2h2v-2zM658 232v4h1v-4zM659 182v2h1v-2zM659 216v2h1v-2zM659 222v2h1v-2zM660 174v4h2v-4zM660 212v4h2v-4zM660 222v2h2v-2zM662 174v2h2v-2zM662 178v2h2v-2zM662 220v2h2v-2zM662 226v4h2v-4zM662 232v2h2v-2zM664 230v2h1v-2zM664 238v2h1v-2zM664 246v2h1v-2zM665 168v2h1v-2zM665 234v2h1v-2zM666 170v2h2v-2zM666 226v2h2v-2zM668 224v2h2v-2zM668 232v4h2v-4zM668 240v2h2v-2zM670 244v2h1v-2zM672 230v2h2v-2zM674 170v4h2v-4zM674 224v2h2v-2zM674 228v4h2v-4zM676 230v2h1v-2zM676 238v4h1v-4zM677 242v2h1v-2zM678 174v2h2v-2zM678 232v2h2v-2zM680 218v4h2v-4zM680 230v2h2v-2zM682 230v4h1v-4zM682 236v2h1v-2zM683 172v2h1v-2zM683 228v4h1v-4zM686 168v2h2v-2zM688 168v2h1v-2zM688 230v4h1v-4zM689 236v2h1v-2zM690 224v4h2v-4zM692 176v2h2v-2zM694 234v2h1v-2zM695 168v2h1v-2zM695 174v2h1v-2zM695 218v2h1v-2zM696 168v4h2v-4zM696 220v2h2v-2zM698 170v2h2v-2zM698 222v2h2v-2zM698 234v6h2v-6zM700 228v2h1v-2zM700 232v2h1v-2zM701 178v2h1v-2zM701 224v2h1v-2zM702 168v2h2v-2zM702 174v2h2v-2zM702 218v2h2v-2zM702 238v2h2v-2zM704 168v2h2v-2zM706 176v2h1v-2zM706 206v2h1v-2zM706 226v2h1v-2z"/><path fill="#00ff58" d="M392 186v2h2v-2zM392 204v2h2v-2zM392 212v4h2v-4zM392 226v2h2v-2zM392 232v2h2v-2zM394 200v2h1v-2zM394 206v2h1v-2zM394 210v2h1v-2zM400 210v2h1v-2zM400 214v2h1v-2zM400 218v2h1v-2zM400 222v2h1v-2zM401 206v2h1v-2zM401 210v2h1v-2zM401 222v2h1v-2zM401 228v2h1v-2zM402 202v2h2v-2zM402 208v2h2v-2zM402 226v2h2v-2zM406 220v2h1v-2zM412 228v2h1v-2zM414 222v4h2v-4zM418 216v2h1v-2zM419 212v2h1v-2zM419 224v2h1v-2zM420 200v2h2v-2zM424 214v2h1v-2zM424 218v2h1v-2zM428 216v2h2v-2zM430 212v2h1v-2zM431 210v4h1v-4zM431 216v2h1v-2zM432 214v2h2v-2zM432 220v2h2v-2zM434 212v2h2v-2zM436 206v2h1v-2zM438 208v2h2v-2zM442 216v2h1v-2zM443 208v2h1v-2zM444 220v2h2v-2zM446 186v2h2v-2zM446 202v4h2v-4zM449 230v2h1v-2zM450 226v2h2v-2zM452 216v2h2v-2zM452 220v2h2v-2zM454 214v2h1v-2zM454 224v2h1v-2zM455 174v2h1v-2zM455 212v2h1v-2zM456 208v2h2v-2zM458 212v2h2v-2zM458 218v2h2v-2zM461 224v2h1v-2zM461 240v2h1v-2zM466 176v2h1v-2zM466 220v2h1v-2zM467 222v2h1v-2zM468 214v4h2v-4zM468 224v2h2v-2zM470 214v2h2v-2zM472 206v2h1v-2zM472 212v2h1v-2zM473 216v2h1v-2zM473 222v2h1v-2zM474 174v2h2v-2zM474 224v4h2v-4zM476 218v2h2v-2zM478 220v2h1v-2zM478 226v2h1v-2zM479 220v6h1v-6zM480 222v2h2v-2zM482 206v2h2v-2zM482 234v2h2v-2zM484 210v2h1v-2zM484 224v2h1v-2zM485 210v2h1v-2zM485 216v2h1v-2zM485 220v2h1v-2zM488 228v2h2v-2zM490 170v2h1v-2zM490 212v2h1v-2zM490 224v2h1v-2zM491 214v2h1v-2zM492 174v2h2v-2zM492 230v2h2v-2zM494 212v2h2v-2zM494 216v4h2v-4zM494 226v2h2v-2zM497 218v2h1v-2zM497 222v2h1v-2zM498 222v2h2v-2zM500 170v2h2v-2zM500 222v2h2v-2zM503 176v2h1v-2zM503 214v2h1v-2zM503 218v2h1v-2zM504 218v2h2v-2zM504 222v2h2v-2zM506 212v2h2v-2zM506 218v2h2v-2zM506 224v2h2v-2zM508 210v2h1v-2zM509 210v4h1v-4zM509 224v2h1v-2zM510 170v2h2v-2zM510 218v2h2v-2zM510 222v2h2v-2zM512 176v2h2v-2zM512 216v2h2v-2zM512 224v2h2v-2zM514 216v2h1v-2zM514 220v2h1v-2zM514 226v2h1v-2zM514 250v2h1v-2zM515 172v2h1v-2zM516 174v2h2v-2zM516 218v2h2v-2zM516 226v2h2v-2zM518 226v2h2v-2zM520 220v2h1v-2zM521 176v2h1v-2zM521 216v2h1v-2zM521 224v2h1v-2zM522 216v6h2v-6zM522 226v2h2v-2zM524 192v2h2v-2zM524 206v4h2v-4zM526 212v2h1v-2zM527 228v2h1v-2zM530 212v2h2v-2zM532 172v2h1v-2zM532 224v2h1v-2zM533 210v4h1v-4zM533 228v2h1v-2zM534 222v2h2v-2zM536 212v2h2v-2zM538 210v2h1v-2zM538 214v4h1v-4zM539 212v4h1v-4zM540 206v2h2v-2zM540 216v2h2v-2zM540 222v2h2v-2zM542 178v2h2v-2zM542 206v2h2v-2zM542 222v2h2v-2zM542 226v2h2v-2zM544 180v2h1v-2zM544 216v2h1v-2zM545 180v2h1v-2zM545 186v2h1v-2zM545 208v2h1v-2zM545 220v4h1v-4zM546 198v2h2v-2zM546 208v2h2v-2zM546 216v4h2v-4zM548 194v4h2v-4zM548 204v2h2v-2zM550 204v4h1v-4zM550 224v2h1v-2zM551 226v2h1v-2zM556 208v2h1v-2zM560 212v2h2v-2zM560 232v2h2v-2zM560 236v2h2v-2zM576 214v2h2v-2zM582 224v2h2v-2zM582 230v2h2v-2zM587 222v2h1v-2zM587 236v2h1v-2zM593 232v2h1v-2zM596 218v2h2v-2zM596 228v2h2v-2zM598 216v2h1v-2zM598 236v2h1v-2zM599 226v2h1v-2zM599 232v2h1v-2zM602 206v2h2v-2zM602 242v2h2v-2zM606 222v2h2v-2zM612 218v2h2v-2zM612 232v2h2v-2zM614 216v2h2v-2zM616 216v2h1v-2zM616 220v2h1v-2zM617 222v2h1v-2zM617 238v2h1v-2zM620 232v2h2v-2zM624 224v4h2v-4zM626 216v2h2v-2zM626 240v2h2v-2zM628 236v2h1v-2zM629 218v2h1v-2zM632 232v2h2v-2zM634 212v4h1v-4zM635 232v2h1v-2zM636 222v2h2v-2zM636 232v4h2v-4zM640 236v2h1v-2zM641 220v2h1v-2zM642 218v2h2v-2zM642 228v2h2v-2zM644 234v2h2v-2zM644 242v2h2v-2zM646 218v2h1v-2zM646 222v2h1v-2zM647 222v2h1v-2zM647 228v2h1v-2zM648 216v2h2v-2zM648 220v2h2v-2zM650 222v4h2v-4zM650 232v2h2v-2zM652 226v2h1v-2zM652 234v2h1v-2zM653 214v2h1v-2zM653 220v2h1v-2zM653 236v2h1v-2zM654 220v2h2v-2zM654 236v2h2v-2zM656 222v4h2v-4zM656 230v2h2v-2zM659 220v2h1v-2zM659 228v2h1v-2zM660 178v2h2v-2zM660 220v2h2v-2zM660 224v2h2v-2zM662 170v4h2v-4zM662 180v2h2v-2zM662 230v2h2v-2zM664 170v2h1v-2zM664 234v4h1v-4zM664 242v2h1v-2zM665 218v2h1v-2zM665 232v2h1v-2zM666 212v2h2v-2zM668 218v2h2v-2zM670 236v4h1v-4zM671 172v2h1v-2zM671 180v2h1v-2zM671 210v4h1v-4zM671 222v2h1v-2zM672 170v2h2v-2zM672 178v4h2v-4zM672 222v2h2v-2zM672 228v2h2v-2zM672 234v2h2v-2zM672 240v2h2v-2zM674 214v2h2v-2zM674 218v2h2v-2zM674 226v2h2v-2zM676 168v2h1v-2zM676 172v2h1v-2zM678 172v2h2v-2zM678 224v4h2v-4zM680 172v2h2v-2zM680 228v2h2v-2zM682 228v2h1v-2zM683 168v2h1v-2zM683 222v4h1v-4zM683 240v4h1v-4zM684 174v2h2v-2zM684 224v2h2v-2zM686 230v2h2v-2zM686 234v2h2v-2zM688 170v2h1v-2zM689 228v2h1v-2zM690 170v2h2v-2zM690 234v2h2v-2zM690 242v2h2v-2zM692 178v2h2v-2zM692 230v2h2v-2zM694 218v2h1v-2zM694 224v4h1v-4zM695 212v2h1v-2zM695 226v2h1v-2zM696 172v2h2v-2zM696 214v2h2v-2zM696 226v2h2v-2zM696 230v2h2v-2zM696 238v2h2v-2zM700 168v2h1v-2zM700 172v2h1v-2zM700 222v4h1v-4zM700 230v2h1v-2zM701 212v2h1v-2zM701 216v2h1v-2zM702 228v2h2v-2zM702 244v2h2v-2zM704 174v2h2v-2zM704 226v2h2v-2zM704 234v2h2v-2zM706 218v2h1v-2zM706 238v2h1v-2z"/><path fill="#00ff30" d="M392 194v2h2v-2zM392 216v2h2v-2zM394 208v2h1v-2zM394 216v2h1v-2zM395 214v2h1v-2zM401 200v2h1v-2zM401 214v2h1v-2zM402 210v2h2v-2zM404 226v2h2v-2zM407 222v2h1v-2zM408 220v2h2v-2zM420 220v2h2v-2zM424 208v2h1v-2zM430 200v2h1v-2zM432 216v2h2v-2zM440 226v2h2v-2zM442 214v2h1v-2zM442 220v2h1v-2zM446 180v4h2v-4zM446 192v2h2v-2zM446 198v2h2v-2zM446 210v4h2v-4zM446 218v2h2v-2zM448 172v2h1v-2zM448 214v4h1v-4zM448 220v2h1v-2zM448 226v2h1v-2zM449 214v2h1v-2zM450 174v2h2v-2zM452 230v2h2v-2zM455 204v2h1v-2zM455 218v2h1v-2zM456 176v2h2v-2zM456 210v4h2v-4zM456 218v2h2v-2zM456 222v2h2v-2zM458 202v2h2v-2zM458 206v2h2v-2zM460 216v2h1v-2zM461 222v2h1v-2zM462 214v2h2v-2zM464 212v2h2v-2zM466 206v2h1v-2zM466 216v2h1v-2zM466 224v2h1v-2zM467 204v2h1v-2zM467 212v2h1v-2zM470 212v2h2v-2zM470 224v2h2v-2zM472 204v2h1v-2zM472 210v2h1v-2zM473 174v2h1v-2zM473 204v2h1v-2zM473 210v2h1v-2zM474 216v2h2v-2zM476 216v2h2v-2zM478 176v2h1v-2zM478 202v2h1v-2zM478 208v4h1v-4zM478 214v2h1v-2zM478 222v2h1v-2zM479 216v2h1v-2zM479 230v2h1v-2zM480 172v2h2v-2zM482 216v2h2v-2zM484 214v2h1v-2zM484 222v2h1v-2zM485 224v4h1v-4zM486 236v2h2v-2zM488 214v2h2v-2zM488 222v2h2v-2zM490 174v2h1v-2zM490 210v2h1v-2zM490 216v2h1v-2zM490 220v2h1v-2zM491 220v2h1v-2zM491 228v2h1v-2zM492 214v2h2v-2zM494 214v2h2v-2zM496 228v2h1v-2zM497 212v2h1v-2zM498 210v2h2v-2zM498 216v2h2v-2zM500 214v2h2v-2zM502 236v2h1v-2zM503 208v4h1v-4zM504 176v2h2v-2zM504 224v2h2v-2zM508 208v2h1v-2zM508 214v2h1v-2zM509 214v6h1v-6zM510 216v2h2v-2zM510 224v2h2v-2zM510 230v2h2v-2zM512 206v2h2v-2zM514 170v4h1v-4zM514 218v2h1v-2zM515 174v2h1v-2zM515 224v2h1v-2zM516 216v2h2v-2zM518 214v6h2v-6zM520 210v2h1v-2zM521 218v2h1v-2zM524 178v2h2v-2zM524 202v2h2v-2zM524 210v2h2v-2zM526 220v2h1v-2zM526 228v2h1v-2zM527 212v2h1v-2zM528 172v2h2v-2zM528 220v6h2v-6zM530 174v2h2v-2zM530 214v2h2v-2zM530 220v2h2v-2zM530 226v4h2v-4zM532 204v2h1v-2zM532 214v2h1v-2zM532 228v2h1v-2zM533 226v2h1v-2zM534 172v4h2v-4zM534 218v4h2v-4zM534 224v2h2v-2zM538 226v2h1v-2zM540 218v4h2v-4zM542 176v2h2v-2zM542 208v4h2v-4zM542 224v2h2v-2zM544 190v2h1v-2zM544 206v2h1v-2zM544 212v2h1v-2zM544 220v2h1v-2zM545 188v6h1v-6zM545 196v2h1v-2zM545 218v2h1v-2zM546 190v2h2v-2zM546 196v2h2v-2zM546 204v2h2v-2zM546 232v2h2v-2zM548 202v2h2v-2zM548 216v2h2v-2zM550 216v2h1v-2zM550 222v2h1v-2zM551 220v2h1v-2zM557 226v2h1v-2zM560 220v2h2v-2zM560 240v2h2v-2zM582 238v2h2v-2zM587 216v2h1v-2zM598 230v2h1v-2zM599 212v2h1v-2zM599 216v2h1v-2zM599 220v2h1v-2zM602 214v4h2v-4zM602 220v2h2v-2zM604 218v2h1v-2zM606 226v2h2v-2zM614 220v2h2v-2zM616 222v2h1v-2zM618 220v2h2v-2zM624 222v2h2v-2zM626 242v2h2v-2zM628 222v2h1v-2zM632 224v2h2v-2zM634 220v2h1v-2zM634 230v2h1v-2zM636 218v2h2v-2zM641 218v2h1v-2zM644 220v2h2v-2zM644 230v2h2v-2zM650 204v2h2v-2zM650 218v2h2v-2zM652 206v2h1v-2zM652 214v2h1v-2zM652 218v2h1v-2zM652 224v2h1v-2zM652 228v4h1v-4zM653 198v2h1v-2zM653 208v2h1v-2zM653 224v2h1v-2zM653 228v4h1v-4zM654 192v2h2v-2zM654 198v2h2v-2zM654 210v2h2v-2zM656 186v2h2v-2zM656 226v2h2v-2zM656 242v2h2v-2zM658 220v2h1v-2zM658 224v6h1v-6zM659 184v2h1v-2zM659 212v4h1v-4zM660 180v2h2v-2zM660 218v2h2v-2zM662 204v2h2v-2zM662 212v2h2v-2zM664 210v2h1v-2zM665 220v2h1v-2zM666 178v2h2v-2zM666 222v2h2v-2zM668 170v4h2v-4zM668 176v2h2v-2zM668 222v2h2v-2zM668 228v2h2v-2zM670 168v2h1v-2zM670 224v2h1v-2zM670 232v2h1v-2zM671 178v2h1v-2zM671 206v2h1v-2zM671 218v4h1v-4zM672 172v2h2v-2zM672 204v2h2v-2zM672 218v2h2v-2zM676 222v2h1v-2zM676 226v2h1v-2zM676 232v2h1v-2zM677 168v2h1v-2zM677 230v2h1v-2zM678 176v2h2v-2zM678 218v4h2v-4zM678 228v2h2v-2zM680 174v2h2v-2zM680 222v2h2v-2zM682 224v2h1v-2zM683 210v2h1v-2zM683 220v2h1v-2zM684 204v2h2v-2zM684 212v2h2v-2zM684 216v2h2v-2zM684 228v2h2v-2zM686 172v2h2v-2zM686 218v2h2v-2zM686 222v2h2v-2zM686 228v2h2v-2zM686 236v2h2v-2zM686 240v2h2v-2zM688 172v4h1v-4zM689 174v2h1v-2zM689 214v2h1v-2zM689 224v4h1v-4zM690 218v2h2v-2zM690 228v4h2v-4zM692 174v2h2v-2zM692 206v2h2v-2zM692 212v2h2v-2zM692 222v2h2v-2zM692 226v4h2v-4zM694 176v2h1v-2zM694 214v2h1v-2zM694 222v2h1v-2zM695 222v2h1v-2zM696 222v2h2v-2zM696 228v2h2v-2zM696 236v2h2v-2zM698 226v2h2v-2zM700 174v2h1v-2zM700 178v2h1v-2zM700 218v2h1v-2zM701 172v2h1v-2zM702 224v2h2v-2zM704 224v2h2v-2zM706 220v2h1v-2z"/><path fill="#00ff08" d="M394 198v2h1v-2zM394 226v2h1v-2zM400 202v4h1v-4zM400 208v2h1v-2zM400 216v2h1v-2zM401 212v2h1v-2zM402 212v4h2v-4zM402 224v2h2v-2zM404 212v2h2v-2zM410 216v2h2v-2zM414 228v2h2v-2zM442 218v2h1v-2zM446 196v2h2v-2zM448 174v2h1v-2zM448 228v2h1v-2zM449 210v2h1v-2zM449 216v4h1v-4zM449 228v2h1v-2zM452 174v2h2v-2zM454 206v6h1v-6zM455 214v2h1v-2zM458 204v2h2v-2zM458 210v2h2v-2zM458 216v2h2v-2zM460 204v2h1v-2zM461 214v2h1v-2zM462 208v4h2v-4zM462 218v2h2v-2zM464 210v2h2v-2zM466 236v2h1v-2zM467 208v2h1v-2zM467 214v2h1v-2zM468 210v2h2v-2zM470 206v2h2v-2zM472 218v2h1v-2zM473 218v2h1v-2zM474 220v2h2v-2zM476 204v2h2v-2zM478 218v2h1v-2zM479 168v2h1v-2zM480 212v2h2v-2zM480 238v2h2v-2zM482 210v2h2v-2zM484 176v2h1v-2zM484 212v2h1v-2zM486 212v2h2v-2zM486 218v2h2v-2zM488 210v2h2v-2zM488 216v2h2v-2zM490 214v2h1v-2zM491 216v2h1v-2zM491 222v4h1v-4zM492 212v2h2v-2zM496 204v2h1v-2zM496 210v2h1v-2zM496 214v4h1v-4zM500 216v2h2v-2zM500 226v2h2v-2zM502 208v2h1v-2zM502 214v4h1v-4zM502 220v2h1v-2zM503 204v2h1v-2zM503 216v2h1v-2zM504 210v4h2v-4zM504 216v2h2v-2zM506 208v2h2v-2zM506 214v2h2v-2zM508 216v2h1v-2zM509 220v2h1v-2zM510 210v2h2v-2zM512 202v2h2v-2zM514 228v2h1v-2zM515 206v2h1v-2zM515 212v4h1v-4zM515 220v2h1v-2zM516 212v2h2v-2zM516 224v2h2v-2zM518 206v4h2v-4zM520 204v4h1v-4zM520 216v2h1v-2zM522 176v2h2v-2zM522 222v2h2v-2zM524 196v2h2v-2zM524 204v2h2v-2zM524 216v2h2v-2zM526 170v4h1v-4zM526 210v2h1v-2zM526 214v2h1v-2zM526 224v2h1v-2zM527 216v4h1v-4zM527 226v2h1v-2zM528 218v2h2v-2zM530 176v2h2v-2zM533 220v2h1v-2zM533 230v2h1v-2zM534 210v2h2v-2zM534 214v2h2v-2zM536 214v2h2v-2zM538 204v2h1v-2zM540 176v4h2v-4zM540 210v2h2v-2zM542 212v2h2v-2zM544 182v2h1v-2zM544 186v2h1v-2zM544 210v2h1v-2zM544 218v2h1v-2zM545 204v2h1v-2zM545 210v2h1v-2zM545 214v2h1v-2zM546 192v4h2v-4zM546 202v2h2v-2zM546 210v4h2v-4zM550 198v2h1v-2zM550 218v2h1v-2zM592 218v2h1v-2zM598 222v2h1v-2zM623 216v2h1v-2zM634 232v2h1v-2zM644 218v2h2v-2zM652 200v2h1v-2zM652 212v2h1v-2zM653 204v2h1v-2zM653 218v2h1v-2zM653 222v2h1v-2zM654 206v2h2v-2zM656 182v2h2v-2zM656 192v2h2v-2zM658 186v2h1v-2zM658 208v4h1v-4zM658 216v2h1v-2zM658 222v2h1v-2zM659 202v2h1v-2zM659 210v2h1v-2zM659 224v2h1v-2zM660 216v2h2v-2zM660 228v2h2v-2zM662 214v2h2v-2zM662 222v2h2v-2zM664 168v2h1v-2zM664 172v2h1v-2zM665 170v2h1v-2zM665 180v2h1v-2zM665 216v2h1v-2zM665 222v2h1v-2zM665 228v4h1v-4zM666 174v2h2v-2zM668 168v2h2v-2zM668 174v2h2v-2zM668 220v2h2v-2zM670 170v2h1v-2zM670 216v2h1v-2zM670 230v2h1v-2zM671 176v2h1v-2zM671 208v2h1v-2zM671 224v2h1v-2zM672 212v2h2v-2zM672 220v2h2v-2zM674 220v2h2v-2zM677 218v2h1v-2zM677 222v2h1v-2zM677 228v2h1v-2zM678 210v2h2v-2zM680 168v2h2v-2zM680 176v2h2v-2zM680 234v2h2v-2zM682 168v2h1v-2zM682 208v2h1v-2zM682 220v2h1v-2zM683 170v2h1v-2zM683 174v2h1v-2zM683 214v2h1v-2zM683 226v2h1v-2zM684 180v4h2v-4zM684 208v2h2v-2zM684 218v2h2v-2zM686 212v2h2v-2zM686 220v2h2v-2zM686 224v2h2v-2zM688 218v2h1v-2zM688 222v2h1v-2zM689 170v2h1v-2zM689 176v2h1v-2zM689 212v2h1v-2zM690 172v2h2v-2zM690 214v2h2v-2zM692 170v2h2v-2zM692 208v2h2v-2zM692 220v2h2v-2zM694 178v2h1v-2zM694 208v2h1v-2zM695 172v2h1v-2zM695 206v2h1v-2zM695 224v2h1v-2zM696 216v2h2v-2zM698 172v2h2v-2zM698 210v4h2v-4zM700 170v2h1v-2zM700 216v2h1v-2zM700 236v2h1v-2zM701 214v2h1v-2zM701 222v2h1v-2zM702 172v2h2v-2zM702 220v2h2v-2zM704 170v4h2v-4zM704 222v2h2v-2zM704 230v2h2v-2zM706 182v2h1v-2zM706 186v2h1v-2z"/><path fill="#20ff00" d="M392 210v2h2v-2zM392 222v2h2v-2zM395 220v2h1v-2zM400 212v2h1v-2zM400 230v2h1v-2zM402 222v2h2v-2zM438 216v2h2v-2zM448 210v2h1v-2zM449 220v2h1v-2zM450 208v2h2v-2zM452 206v2h2v-2zM452 214v2h2v-2zM452 218v2h2v-2zM455 210v2h1v-2zM455 222v2h1v-2zM458 176v2h2v-2zM460 212v2h1v-2zM460 220v2h1v-2zM461 168v2h1v-2zM461 208v2h1v-2zM461 228v2h1v-2zM462 204v2h2v-2zM464 204v2h2v-2zM464 208v2h2v-2zM470 208v2h2v-2zM470 216v2h2v-2zM472 180v2h1v-2zM472 202v2h1v-2zM472 208v2h1v-2zM473 208v2h1v-2zM473 214v2h1v-2zM474 210v2h2v-2zM474 218v2h2v-2zM476 176v2h2v-2zM478 204v2h1v-2zM478 212v2h1v-2zM479 174v2h1v-2zM480 210v2h2v-2zM480 224v2h2v-2zM482 204v2h2v-2zM484 204v4h1v-4zM485 204v2h1v-2zM485 214v2h1v-2zM485 218v2h1v-2zM486 206v2h2v-2zM486 210v2h2v-2zM486 214v2h2v-2zM488 212v2h2v-2zM491 212v2h1v-2zM492 206v2h2v-2zM492 210v2h2v-2zM492 216v2h2v-2zM496 208v2h1v-2zM497 210v2h1v-2zM497 214v4h1v-4zM497 224v2h1v-2zM500 174v2h2v-2zM502 176v2h1v-2zM502 212v2h1v-2zM504 204v4h2v-4zM504 228v2h2v-2zM506 176v2h2v-2zM506 220v2h2v-2zM508 204v4h1v-4zM509 204v2h1v-2zM510 204v2h2v-2zM512 204v2h2v-2zM512 210v2h2v-2zM515 210v2h1v-2zM515 216v2h1v-2zM516 210v2h2v-2zM516 214v2h2v-2zM518 176v2h2v-2zM518 204v2h2v-2zM518 220v2h2v-2zM520 208v2h1v-2zM521 206v2h1v-2zM522 202v2h2v-2zM522 214v2h2v-2zM524 188v4h2v-4zM524 222v2h2v-2zM526 216v2h1v-2zM527 170v2h1v-2zM527 214v2h1v-2zM527 222v2h1v-2zM527 232v2h1v-2zM528 208v2h2v-2zM530 218v2h2v-2zM532 206v4h1v-4zM532 220v2h1v-2zM533 174v2h1v-2zM533 204v2h1v-2zM533 216v2h1v-2zM534 206v4h2v-4zM536 210v2h2v-2zM536 216v4h2v-4zM536 222v2h2v-2zM538 178v2h1v-2zM539 202v2h1v-2zM539 210v2h1v-2zM539 218v2h1v-2zM540 208v2h2v-2zM540 212v2h2v-2zM542 204v2h2v-2zM544 198v2h1v-2zM544 214v2h1v-2zM545 184v2h1v-2zM545 198v6h1v-6zM545 206v2h1v-2zM546 214v2h2v-2zM598 226v2h1v-2zM650 212v2h2v-2zM652 220v4h1v-4zM653 196v2h1v-2zM653 200v2h1v-2zM653 206v2h1v-2zM653 210v2h1v-2zM653 216v2h1v-2zM654 200v2h2v-2zM654 216v2h2v-2zM654 228v2h2v-2zM656 218v4h2v-4zM658 182v2h1v-2zM659 180v2h1v-2zM659 196v2h1v-2zM659 206v2h1v-2zM660 182v2h2v-2zM660 192v2h2v-2zM660 208v2h2v-2zM662 206v2h2v-2zM662 218v2h2v-2zM665 178v2h1v-2zM665 210v4h1v-4zM665 224v4h1v-4zM666 172v2h2v-2zM668 216v2h2v-2zM670 226v2h1v-2zM671 204v2h1v-2zM672 176v2h2v-2zM672 208v2h2v-2zM672 216v2h2v-2zM674 178v2h2v-2zM674 210v2h2v-2zM674 216v2h2v-2zM676 214v6h1v-6zM676 228v2h1v-2zM677 226v2h1v-2zM678 180v2h2v-2zM680 224v2h2v-2zM682 172v2h1v-2zM682 222v2h1v-2zM683 176v2h1v-2zM683 180v2h1v-2zM684 202v2h2v-2zM684 206v2h2v-2zM686 208v2h2v-2zM688 176v2h1v-2zM688 212v4h1v-4zM688 220v2h1v-2zM688 224v2h1v-2zM689 180v2h1v-2zM689 208v2h1v-2zM689 218v2h1v-2zM690 216v2h2v-2zM690 232v2h2v-2zM690 238v2h2v-2zM692 180v2h2v-2zM692 210v2h2v-2zM692 218v2h2v-2zM692 224v2h2v-2zM694 172v2h1v-2zM694 180v2h1v-2zM694 202v2h1v-2zM694 206v2h1v-2zM694 210v2h1v-2zM694 216v2h1v-2zM695 180v2h1v-2zM695 210v2h1v-2zM695 214v2h1v-2zM696 176v2h2v-2zM696 204v2h2v-2zM698 178v2h2v-2zM698 214v2h2v-2zM698 218v2h2v-2zM700 212v4h1v-4zM700 220v2h1v-2zM700 226v2h1v-2zM701 206v2h1v-2zM702 222v2h2v-2zM704 178v2h2v-2zM704 212v2h2v-2zM704 216v2h2v-2zM706 180v2h1v-2zM706 204v2h1v-2zM706 208v6h1v-6z"/><path fill="#48ff00" d="M401 204v2h1v-2zM448 208v2h1v-2zM448 212v2h1v-2zM449 174v2h1v-2zM449 208v2h1v-2zM450 216v2h2v-2zM450 220v2h2v-2zM452 204v2h2v-2zM452 208v2h2v-2zM456 202v2h2v-2zM456 206v2h2v-2zM458 214v2h2v-2zM460 176v2h1v-2zM460 210v2h1v-2zM461 220v2h1v-2zM462 176v2h2v-2zM464 202v2h2v-2zM466 204v2h1v-2zM466 210v2h1v-2zM466 214v2h1v-2zM467 202v2h1v-2zM467 206v2h1v-2zM467 210v2h1v-2zM470 176v2h2v-2zM473 206v2h1v-2zM474 214v2h2v-2zM476 202v2h2v-2zM479 208v2h1v-2zM479 212v2h1v-2zM480 214v2h2v-2zM482 208v2h2v-2zM482 218v2h2v-2zM484 208v2h1v-2zM488 206v2h2v-2zM491 206v2h1v-2zM492 204v2h2v-2zM492 208v2h2v-2zM492 218v2h2v-2zM494 176v2h2v-2zM497 176v2h1v-2zM497 206v2h1v-2zM498 212v2h2v-2zM502 218v2h1v-2zM503 202v2h1v-2zM504 208v2h2v-2zM506 204v2h2v-2zM508 178v2h1v-2zM508 188v2h1v-2zM508 198v4h1v-4zM509 208v2h1v-2zM510 176v2h2v-2zM510 214v2h2v-2zM514 210v2h1v-2zM515 176v2h1v-2zM516 206v4h2v-4zM518 210v4h2v-4zM520 178v2h1v-2zM521 202v4h1v-4zM522 210v2h2v-2zM524 184v2h2v-2zM526 218v2h1v-2zM526 222v2h1v-2zM527 174v2h1v-2zM527 230v2h1v-2zM528 210v6h2v-6zM530 206v2h2v-2zM530 210v2h2v-2zM532 176v2h1v-2zM532 216v2h1v-2zM533 208v2h1v-2zM534 216v2h2v-2zM536 206v2h2v-2zM539 178v2h1v-2zM539 204v2h1v-2zM539 220v2h1v-2zM542 184v2h2v-2zM542 202v2h2v-2zM542 214v2h2v-2zM542 218v2h2v-2zM550 210v2h1v-2zM654 202v4h2v-4zM656 188v2h2v-2zM656 216v2h2v-2zM658 196v2h1v-2zM658 212v2h1v-2zM658 218v2h1v-2zM659 194v2h1v-2zM660 184v2h2v-2zM660 200v2h2v-2zM660 204v4h2v-4zM664 220v4h1v-4zM664 226v2h1v-2zM665 172v2h1v-2zM665 176v2h1v-2zM666 206v2h2v-2zM666 214v2h2v-2zM666 218v4h2v-4zM670 172v4h1v-4zM670 218v2h1v-2zM671 198v2h1v-2zM671 214v4h1v-4zM672 206v2h2v-2zM672 210v2h2v-2zM672 226v2h2v-2zM674 176v2h2v-2zM674 212v2h2v-2zM676 206v2h1v-2zM676 220v2h1v-2zM677 170v4h1v-4zM677 176v2h1v-2zM677 224v2h1v-2zM678 182v2h2v-2zM678 202v2h2v-2zM678 212v6h2v-6zM678 222v2h2v-2zM680 170v2h2v-2zM682 170v2h1v-2zM682 210v2h1v-2zM683 178v2h1v-2zM683 186v2h1v-2zM683 206v2h1v-2zM683 212v2h1v-2zM684 178v2h2v-2zM686 214v2h2v-2zM686 226v2h2v-2zM688 226v2h1v-2zM689 172v2h1v-2zM689 230v2h1v-2zM690 174v2h2v-2zM690 180v4h2v-4zM692 182v2h2v-2zM692 214v2h2v-2zM694 212v2h1v-2zM695 198v4h1v-4zM696 174v2h2v-2zM696 218v2h2v-2zM698 174v4h2v-4zM698 220v2h2v-2zM698 232v2h2v-2zM700 176v2h1v-2zM702 212v2h2v-2zM702 216v2h2v-2zM704 176v2h2v-2zM704 182v2h2v-2zM704 206v2h2v-2zM704 214v2h2v-2zM706 188v2h1v-2zM706 214v2h1v-2z"/><path fill="#70ff00" d="M392 218v2h2v-2zM448 204v2h1v-2zM448 218v2h1v-2zM450 212v4h2v-4zM452 176v2h2v-2zM452 212v2h2v-2zM454 216v2h1v-2zM455 208v2h1v-2zM458 200v2h2v-2zM460 206v2h1v-2zM460 214v2h1v-2zM461 172v2h1v-2zM461 204v2h1v-2zM461 210v2h1v-2zM461 218v2h1v-2zM461 226v2h1v-2zM462 206v2h2v-2zM462 212v2h2v-2zM464 176v2h2v-2zM464 206v2h2v-2zM464 218v2h2v-2zM466 200v2h1v-2zM467 190v4h1v-4zM468 206v4h2v-4zM472 200v2h1v-2zM474 204v2h2v-2zM476 208v4h2v-4zM478 206v2h1v-2zM480 218v2h2v-2zM482 202v2h2v-2zM485 176v2h1v-2zM486 176v2h2v-2zM486 202v2h2v-2zM488 174v2h2v-2zM488 208v2h2v-2zM488 218v2h2v-2zM490 206v2h1v-2zM491 174v2h1v-2zM491 208v4h1v-4zM492 220v2h2v-2zM494 204v6h2v-6zM496 212v2h1v-2zM498 214v2h2v-2zM500 172v2h2v-2zM500 210v2h2v-2zM503 206v2h1v-2zM504 202v2h2v-2zM506 178v2h2v-2zM506 206v2h2v-2zM506 210v2h2v-2zM508 196v2h1v-2zM509 178v2h1v-2zM509 184v4h1v-4zM509 194v2h1v-2zM509 198v4h1v-4zM509 206v2h1v-2zM510 212v2h2v-2zM512 178v2h2v-2zM514 212v4h1v-4zM516 176v2h2v-2zM516 220v4h2v-4zM520 202v2h1v-2zM521 200v2h1v-2zM522 178v2h2v-2zM522 204v2h2v-2zM522 212v2h2v-2zM524 186v2h2v-2zM524 194v2h2v-2zM524 200v2h2v-2zM526 174v2h1v-2zM526 206v2h1v-2zM527 172v2h1v-2zM528 206v2h2v-2zM530 204v2h2v-2zM530 208v2h2v-2zM530 216v2h2v-2zM532 200v2h1v-2zM532 210v4h1v-4zM532 218v2h1v-2zM533 214v2h1v-2zM534 212v2h2v-2zM536 176v2h2v-2zM536 200v2h2v-2zM536 208v2h2v-2zM538 200v4h1v-4zM538 222v2h1v-2zM539 196v2h1v-2zM539 206v2h1v-2zM540 200v2h2v-2zM540 214v2h2v-2zM544 194v2h1v-2zM544 204v2h1v-2zM653 202v2h1v-2zM654 226v2h2v-2zM656 196v2h2v-2zM656 208v4h2v-4zM658 206v2h1v-2zM658 214v2h1v-2zM659 204v2h1v-2zM659 208v2h1v-2zM662 202v2h2v-2zM664 178v2h1v-2zM664 216v2h1v-2zM668 208v2h2v-2zM668 214v2h2v-2zM670 220v2h1v-2zM671 194v4h1v-4zM671 202v2h1v-2zM672 182v2h2v-2zM674 180v2h2v-2zM674 184v2h2v-2zM674 192v2h2v-2zM674 198v2h2v-2zM674 206v4h2v-4zM676 174v4h1v-4zM676 210v2h1v-2zM677 174v2h1v-2zM677 178v2h1v-2zM677 212v2h1v-2zM678 178v2h2v-2zM680 178v2h2v-2zM680 182v2h2v-2zM680 210v4h2v-4zM680 216v2h2v-2zM682 176v2h1v-2zM682 182v2h1v-2zM682 216v4h1v-4zM683 202v2h1v-2zM683 208v2h1v-2zM683 216v2h1v-2zM684 184v4h2v-4zM684 190v2h2v-2zM684 200v2h2v-2zM684 210v2h2v-2zM684 214v2h2v-2zM686 178v4h2v-4zM688 208v4h1v-4zM689 206v2h1v-2zM689 220v4h1v-4zM690 208v2h2v-2zM690 212v2h2v-2zM690 220v4h2v-4zM692 194v2h2v-2zM692 204v2h2v-2zM692 216v2h2v-2zM694 182v2h1v-2zM694 198v4h1v-4zM695 182v2h1v-2zM695 204v2h1v-2zM695 216v2h1v-2zM696 210v2h2v-2zM698 180v2h2v-2zM698 216v2h2v-2zM700 180v4h1v-4zM700 208v4h1v-4zM701 196v2h1v-2zM701 208v4h1v-4zM702 176v2h2v-2zM702 182v2h2v-2zM702 208v2h2v-2zM702 214v2h2v-2zM704 202v2h2v-2zM704 210v2h2v-2zM704 218v2h2v-2zM706 184v2h1v-2zM706 200v2h1v-2z"/><path fill="#97ff00" d="M449 206v2h1v-2zM455 206v2h1v-2zM456 200v2h2v-2zM456 204v2h2v-2zM458 188v2h2v-2zM460 202v2h1v-2zM461 216v2h1v-2zM466 208v2h1v-2zM467 180v2h1v-2zM467 196v2h1v-2zM467 200v2h1v-2zM468 202v2h2v-2zM472 178v2h1v-2zM472 198v2h1v-2zM474 208v2h2v-2zM474 212v2h2v-2zM479 176v2h1v-2zM479 204v4h1v-4zM480 174v2h2v-2zM480 204v2h2v-2zM480 220v2h2v-2zM484 178v2h1v-2zM484 202v2h1v-2zM486 200v2h2v-2zM490 208v2h1v-2zM491 176v2h1v-2zM494 200v2h2v-2zM497 200v2h1v-2zM497 204v2h1v-2zM498 202v4h2v-4zM498 208v2h2v-2zM500 206v2h2v-2zM502 200v2h1v-2zM503 184v2h1v-2zM508 192v2h1v-2zM509 190v4h1v-4zM509 202v2h1v-2zM510 202v2h2v-2zM510 208v2h2v-2zM512 198v2h2v-2zM514 176v2h1v-2zM514 204v2h1v-2zM514 208v2h1v-2zM520 184v2h1v-2zM520 188v2h1v-2zM520 198v2h1v-2zM521 178v2h1v-2zM521 198v2h1v-2zM522 198v2h2v-2zM526 204v2h1v-2zM526 208v2h1v-2zM527 208v2h1v-2zM528 174v4h2v-4zM528 204v2h2v-2zM534 176v2h2v-2zM539 180v2h1v-2zM539 194v2h1v-2zM540 204v2h2v-2zM542 216v2h2v-2zM544 184v2h1v-2zM544 202v2h1v-2zM654 212v2h2v-2zM656 212v2h2v-2zM659 200v2h1v-2zM660 194v2h2v-2zM660 198v2h2v-2zM662 196v2h2v-2zM662 208v2h2v-2zM664 174v4h1v-4zM664 212v2h1v-2zM665 206v2h1v-2zM665 214v2h1v-2zM666 182v2h2v-2zM666 208v4h2v-4zM668 178v2h2v-2zM668 194v2h2v-2zM668 198v2h2v-2zM668 210v2h2v-2zM670 176v2h1v-2zM670 210v2h1v-2zM670 222v2h1v-2zM671 182v2h1v-2zM672 190v2h2v-2zM672 194v2h2v-2zM674 200v2h2v-2zM676 180v2h1v-2zM676 208v2h1v-2zM676 212v2h1v-2zM677 214v4h1v-4zM677 220v2h1v-2zM678 192v2h2v-2zM678 200v2h2v-2zM678 204v2h2v-2zM680 208v2h2v-2zM680 214v2h2v-2zM682 174v2h1v-2zM682 212v4h1v-4zM682 226v2h1v-2zM683 194v2h1v-2zM684 188v2h2v-2zM684 194v2h2v-2zM686 176v2h2v-2zM686 216v2h2v-2zM688 178v2h1v-2zM688 202v2h1v-2zM689 210v2h1v-2zM690 176v2h2v-2zM690 210v2h2v-2zM694 194v2h1v-2zM695 176v4h1v-4zM696 180v2h2v-2zM696 206v2h2v-2zM698 192v2h2v-2zM698 208v2h2v-2zM700 206v2h1v-2zM701 180v2h1v-2zM701 202v4h1v-4zM702 180v2h2v-2zM702 206v2h2v-2zM702 210v2h2v-2zM704 200v2h2v-2zM704 208v2h2v-2zM706 194v6h1v-6z"/><path fill="#bfff00" d="M448 206v2h1v-2zM449 212v2h1v-2zM450 210v2h2v-2zM452 200v2h2v-2zM452 210v2h2v-2zM454 176v2h1v-2zM454 204v2h1v-2zM455 176v2h1v-2zM458 198v2h2v-2zM460 178v2h1v-2zM460 208v2h1v-2zM461 212v2h1v-2zM462 198v2h2v-2zM464 200v2h2v-2zM467 178v2h1v-2zM467 194v2h1v-2zM468 176v2h2v-2zM468 204v2h2v-2zM468 212v2h2v-2zM472 184v2h1v-2zM472 188v2h1v-2zM473 220v2h1v-2zM474 206v2h2v-2zM476 206v2h2v-2zM479 198v2h1v-2zM479 214v2h1v-2zM480 216v2h2v-2zM482 200v2h2v-2zM485 178v2h1v-2zM485 202v2h1v-2zM485 206v4h1v-4zM486 204v2h2v-2zM486 208v2h2v-2zM488 176v2h2v-2zM488 204v2h2v-2zM492 176v2h2v-2zM494 202v2h2v-2zM498 176v2h2v-2zM498 200v2h2v-2zM498 206v2h2v-2zM500 176v2h2v-2zM500 212v2h2v-2zM502 202v4h1v-4zM502 210v2h1v-2zM503 178v2h1v-2zM504 178v2h2v-2zM506 200v4h2v-4zM508 184v2h1v-2zM508 190v2h1v-2zM509 182v2h1v-2zM509 188v2h1v-2zM509 196v2h1v-2zM510 200v2h2v-2zM512 180v2h2v-2zM512 186v2h2v-2zM514 174v2h1v-2zM514 206v2h1v-2zM515 202v2h1v-2zM515 208v2h1v-2zM516 200v2h2v-2zM516 204v2h2v-2zM518 198v4h2v-4zM520 180v2h1v-2zM520 190v2h1v-2zM520 196v2h1v-2zM520 200v2h1v-2zM521 212v2h1v-2zM522 180v2h2v-2zM522 206v2h2v-2zM524 180v4h2v-4zM527 210v2h1v-2zM527 224v2h1v-2zM532 202v2h1v-2zM533 176v2h1v-2zM536 202v2h2v-2zM538 182v2h1v-2zM539 184v2h1v-2zM540 202v2h2v-2zM542 180v2h2v-2zM542 200v2h2v-2zM544 196v2h1v-2zM544 200v2h1v-2zM654 214v2h2v-2zM656 194v2h2v-2zM656 200v2h2v-2zM656 214v2h2v-2zM658 190v4h1v-4zM658 204v2h1v-2zM659 190v2h1v-2zM660 188v2h2v-2zM660 202v2h2v-2zM662 182v2h2v-2zM662 200v2h2v-2zM662 210v2h2v-2zM664 182v2h1v-2zM664 206v2h1v-2zM665 174v2h1v-2zM665 204v2h1v-2zM666 190v4h2v-4zM666 198v2h2v-2zM668 196v2h2v-2zM668 204v2h2v-2zM668 212v2h2v-2zM670 214v2h1v-2zM672 186v4h2v-4zM672 192v2h2v-2zM672 200v2h2v-2zM672 214v2h2v-2zM674 190v2h2v-2zM674 196v2h2v-2zM674 202v4h2v-4zM676 178v2h1v-2zM676 190v2h1v-2zM677 198v2h1v-2zM677 204v2h1v-2zM677 208v2h1v-2zM678 184v2h2v-2zM678 208v2h2v-2zM680 180v2h2v-2zM682 178v2h1v-2zM682 196v2h1v-2zM682 204v2h1v-2zM683 192v2h1v-2zM684 196v2h2v-2zM686 174v2h2v-2zM686 204v4h2v-4zM688 204v4h1v-4zM690 178v2h2v-2zM694 190v4h1v-4zM695 196v2h1v-2zM696 192v2h2v-2zM696 208v2h2v-2zM698 204v2h2v-2zM701 188v2h1v-2zM702 178v2h2v-2zM702 198v4h2v-4zM704 196v2h2v-2zM706 190v4h1v-4zM706 202v2h1v-2z"/><path fill="#e7ff00" d="M448 176v2h1v-2zM448 202v2h1v-2zM449 176v2h1v-2zM449 204v2h1v-2zM450 204v4h2v-4zM454 178v2h1v-2zM454 202v2h1v-2zM456 196v2h2v-2zM458 178v2h2v-2zM461 170v2h1v-2zM461 174v2h1v-2zM464 196v2h2v-2zM466 184v2h1v-2zM467 198v2h1v-2zM473 176v2h1v-2zM473 200v4h1v-4zM473 212v2h1v-2zM474 176v2h2v-2zM474 202v2h2v-2zM476 188v4h2v-4zM478 200v2h1v-2zM479 202v2h1v-2zM479 210v2h1v-2zM480 208v2h2v-2zM482 198v2h2v-2zM484 198v2h1v-2zM486 178v2h2v-2zM488 202v2h2v-2zM491 204v2h1v-2zM492 178v2h2v-2zM496 176v2h1v-2zM497 202v2h1v-2zM498 186v2h2v-2zM502 178v2h1v-2zM502 198v2h1v-2zM502 206v2h1v-2zM503 180v2h1v-2zM503 186v2h1v-2zM503 200v2h1v-2zM506 198v2h2v-2zM508 194v2h1v-2zM509 180v2h1v-2zM512 194v2h2v-2zM516 202v2h2v-2zM520 186v2h1v-2zM520 192v2h1v-2zM521 186v2h1v-2zM522 200v2h2v-2zM524 198v2h2v-2zM526 176v2h1v-2zM530 178v2h2v-2zM532 178v2h1v-2zM533 218v2h1v-2zM534 202v4h2v-4zM538 190v2h1v-2zM538 194v2h1v-2zM538 198v2h1v-2zM539 182v2h1v-2zM539 186v4h1v-4zM539 192v2h1v-2zM540 180v2h2v-2zM542 182v2h2v-2zM656 204v2h2v-2zM658 188v2h1v-2zM658 202v2h1v-2zM660 186v2h2v-2zM660 196v2h2v-2zM662 186v2h2v-2zM662 194v2h2v-2zM662 198v2h2v-2zM664 202v2h1v-2zM664 214v2h1v-2zM665 200v2h1v-2zM666 180v2h2v-2zM666 194v2h2v-2zM666 204v2h2v-2zM668 180v2h2v-2zM668 184v2h2v-2zM668 206v2h2v-2zM671 186v8h1v-8zM672 198v2h2v-2zM674 182v2h2v-2zM674 194v2h2v-2zM676 198v2h1v-2zM677 184v2h1v-2zM677 190v2h1v-2zM678 186v6h2v-6zM680 184v2h2v-2zM680 196v2h2v-2zM682 180v2h1v-2zM683 182v2h1v-2zM683 188v4h1v-4zM683 204v2h1v-2zM684 192v2h2v-2zM684 198v2h2v-2zM688 182v2h1v-2zM689 178v2h1v-2zM689 182v2h1v-2zM689 198v2h1v-2zM690 206v2h2v-2zM692 192v2h2v-2zM692 200v2h2v-2zM694 186v2h1v-2zM695 190v2h1v-2zM695 208v2h1v-2zM696 178v2h2v-2zM696 194v2h2v-2zM698 184v2h2v-2zM698 198v2h2v-2zM698 206v2h2v-2zM700 202v2h1v-2zM701 182v2h1v-2zM701 186v2h1v-2zM701 190v2h1v-2zM702 192v2h2v-2zM704 180v2h2v-2zM704 190v2h2v-2z"/><path fill="#ffef00" d="M450 176v2h2v-2zM450 202v2h2v-2zM454 188v2h1v-2zM454 200v2h1v-2zM455 202v2h1v-2zM458 194v2h2v-2zM460 182v2h1v-2zM460 200v2h1v-2zM461 206v2h1v-2zM462 202v2h2v-2zM466 198v2h1v-2zM466 202v2h1v-2zM467 182v6h1v-6zM468 200v2h2v-2zM470 190v2h2v-2zM470 204v2h2v-2zM472 186v2h1v-2zM472 190v2h1v-2zM472 194v4h1v-4zM476 178v4h2v-4zM476 198v4h2v-4zM478 178v2h1v-2zM478 192v2h1v-2zM482 178v4h2v-4zM482 194v2h2v-2zM484 182v4h1v-4zM484 192v2h1v-2zM484 196v2h1v-2zM485 200v2h1v-2zM486 192v2h2v-2zM486 198v2h2v-2zM490 200v2h1v-2zM496 200v4h1v-4zM497 192v2h1v-2zM502 186v2h1v-2zM503 182v2h1v-2zM503 188v6h1v-6zM503 198v2h1v-2zM504 182v2h2v-2zM504 200v2h2v-2zM508 180v2h1v-2zM508 202v2h1v-2zM510 178v2h2v-2zM512 190v2h2v-2zM514 202v2h1v-2zM515 180v2h1v-2zM515 200v2h1v-2zM515 204v2h1v-2zM518 192v2h2v-2zM518 202v2h2v-2zM520 182v2h1v-2zM521 190v2h1v-2zM522 186v2h2v-2zM527 206v2h1v-2zM527 220v2h1v-2zM530 198v4h2v-4zM532 180v2h1v-2zM532 186v2h1v-2zM533 202v2h1v-2zM534 200v2h2v-2zM536 204v2h2v-2zM538 186v2h1v-2zM538 192v2h1v-2zM539 190v2h1v-2zM539 198v4h1v-4zM540 182v2h2v-2zM540 196v2h2v-2zM542 186v10h2v-10zM656 206v2h2v-2zM659 188v2h1v-2zM659 198v2h1v-2zM662 190v4h2v-4zM664 180v2h1v-2zM664 184v2h1v-2zM664 204v2h1v-2zM665 184v2h1v-2zM665 198v2h1v-2zM666 184v4h2v-4zM666 200v4h2v-4zM668 188v2h2v-2zM670 180v2h1v-2zM670 204v4h1v-4zM671 184v2h1v-2zM671 200v2h1v-2zM672 184v2h2v-2zM674 186v4h2v-4zM676 204v2h1v-2zM677 206v2h1v-2zM680 190v2h2v-2zM680 194v2h2v-2zM680 200v6h2v-6zM682 186v2h1v-2zM682 192v2h1v-2zM683 184v2h1v-2zM683 198v4h1v-4zM686 182v2h2v-2zM686 202v2h2v-2zM686 210v2h2v-2zM688 180v2h1v-2zM688 184v4h1v-4zM688 196v4h1v-4zM689 184v2h1v-2zM689 192v2h1v-2zM689 196v2h1v-2zM689 200v2h1v-2zM690 184v2h2v-2zM692 184v4h2v-4zM692 196v2h2v-2zM692 202v2h2v-2zM694 184v2h1v-2zM694 188v2h1v-2zM695 186v2h1v-2zM695 194v2h1v-2zM695 202v2h1v-2zM696 182v2h2v-2zM696 186v2h2v-2zM696 198v2h2v-2zM696 212v2h2v-2zM698 190v2h2v-2zM698 194v4h2v-4zM700 188v2h1v-2zM700 194v2h1v-2zM700 204v2h1v-2zM701 184v2h1v-2zM702 186v2h2v-2zM702 194v2h2v-2zM702 204v2h2v-2zM704 184v6h2v-6zM704 198v2h2v-2z"/><path fill="#ffc700" d="M449 202v2h1v-2zM455 186v2h1v-2zM456 180v4h2v-4zM458 182v2h2v-2zM458 186v2h2v-2zM458 192v2h2v-2zM460 184v2h1v-2zM464 182v2h2v-2zM464 190v2h2v-2zM466 180v2h1v-2zM468 190v2h2v-2zM470 178v2h2v-2zM470 200v4h2v-4zM472 182v2h1v-2zM472 192v2h1v-2zM474 178v2h2v-2zM474 200v2h2v-2zM478 188v2h1v-2zM480 202v2h2v-2zM480 206v2h2v-2zM482 184v4h2v-4zM482 190v2h2v-2zM484 188v4h1v-4zM484 200v2h1v-2zM485 198v2h1v-2zM486 182v2h2v-2zM490 176v2h1v-2zM490 202v2h1v-2zM491 202v2h1v-2zM492 200v4h2v-4zM496 178v4h1v-4zM497 178v4h1v-4zM497 196v2h1v-2zM497 208v2h1v-2zM500 200v6h2v-6zM502 180v2h1v-2zM502 192v2h1v-2zM503 196v2h1v-2zM504 188v6h2v-6zM508 182v2h1v-2zM508 186v2h1v-2zM510 206v2h2v-2zM512 192v2h2v-2zM512 196v2h2v-2zM512 200v2h2v-2zM516 184v4h2v-4zM520 194v2h1v-2zM521 182v2h1v-2zM521 192v2h1v-2zM530 202v2h2v-2zM532 198v2h1v-2zM533 206v2h1v-2zM538 184v2h1v-2zM540 198v2h2v-2zM656 198v2h2v-2zM658 194v2h1v-2zM659 192v2h1v-2zM660 190v2h2v-2zM662 184v2h2v-2zM662 188v2h2v-2zM664 208v2h1v-2zM665 186v10h1v-10zM665 202v2h1v-2zM666 188v2h2v-2zM668 182v2h2v-2zM668 200v2h2v-2zM670 178v2h1v-2zM670 208v2h1v-2zM670 212v2h1v-2zM676 182v2h1v-2zM676 186v2h1v-2zM676 194v2h1v-2zM676 200v4h1v-4zM677 182v2h1v-2zM677 186v2h1v-2zM677 202v2h1v-2zM678 194v2h2v-2zM678 206v2h2v-2zM680 186v2h2v-2zM680 198v2h2v-2zM680 206v2h2v-2zM682 202v2h1v-2zM686 184v4h2v-4zM686 200v2h2v-2zM688 188v4h1v-4zM689 186v2h1v-2zM689 194v2h1v-2zM689 204v2h1v-2zM690 202v2h2v-2zM692 188v2h2v-2zM695 188v2h1v-2zM696 190v2h2v-2zM696 196v2h2v-2zM696 202v2h2v-2zM698 186v4h2v-4zM698 200v4h2v-4zM700 184v2h1v-2zM700 190v2h1v-2zM700 196v4h1v-4zM701 192v4h1v-4zM701 198v4h1v-4zM702 184v2h2v-2zM702 188v2h2v-2zM702 196v2h2v-2zM702 202v2h2v-2zM704 192v4h2v-4zM704 204v2h2v-2z"/><path fill="#ff9f00" d="M448 184v2h1v-2zM448 194v2h1v-2zM449 200v2h1v-2zM452 202v2h2v-2zM454 180v4h1v-4zM455 196v2h1v-2zM455 200v2h1v-2zM456 194v2h2v-2zM456 198v2h2v-2zM458 184v2h2v-2zM462 180v2h2v-2zM462 200v2h2v-2zM464 178v2h2v-2zM464 184v2h2v-2zM464 192v2h2v-2zM464 198v2h2v-2zM466 196v2h1v-2zM467 188v2h1v-2zM468 198v2h2v-2zM470 180v2h2v-2zM470 192v6h2v-6zM473 178v2h1v-2zM473 186v2h1v-2zM474 184v2h2v-2zM476 182v4h2v-4zM478 180v2h1v-2zM478 184v2h1v-2zM478 190v2h1v-2zM478 198v2h1v-2zM479 178v2h1v-2zM480 176v2h2v-2zM480 200v2h2v-2zM482 188v2h2v-2zM482 192v2h2v-2zM484 186v2h1v-2zM484 194v2h1v-2zM485 188v2h1v-2zM486 186v2h2v-2zM486 194v2h2v-2zM488 200v2h2v-2zM492 196v2h2v-2zM494 178v2h2v-2zM494 188v2h2v-2zM494 192v2h2v-2zM497 184v2h1v-2zM497 198v2h1v-2zM498 198v2h2v-2zM500 208v2h2v-2zM504 180v2h2v-2zM504 186v2h2v-2zM504 196v4h2v-4zM506 182v2h2v-2zM506 186v2h2v-2zM506 194v4h2v-4zM510 198v2h2v-2zM512 184v2h2v-2zM512 188v2h2v-2zM515 178v2h1v-2zM516 178v2h2v-2zM518 178v2h2v-2zM521 184v2h1v-2zM521 188v2h1v-2zM521 194v4h1v-4zM522 188v6h2v-6zM526 202v2h1v-2zM527 204v2h1v-2zM528 178v2h2v-2zM528 202v2h2v-2zM532 194v2h1v-2zM533 198v4h1v-4zM534 194v2h2v-2zM536 178v2h2v-2zM538 180v2h1v-2zM538 196v2h1v-2zM540 186v4h2v-4zM540 192v4h2v-4zM542 196v2h2v-2zM658 198v2h1v-2zM664 190v2h1v-2zM664 194v2h1v-2zM665 182v2h1v-2zM665 208v2h1v-2zM666 196v2h2v-2zM668 202v2h2v-2zM672 196v2h2v-2zM672 202v2h2v-2zM676 196v2h1v-2zM677 180v2h1v-2zM677 196v2h1v-2zM677 210v2h1v-2zM678 198v2h2v-2zM680 192v2h2v-2zM683 196v2h1v-2zM686 192v2h2v-2zM689 190v2h1v-2zM689 202v2h1v-2zM690 186v2h2v-2zM692 198v2h2v-2zM694 196v2h1v-2zM695 192v2h1v-2zM696 200v2h2v-2zM700 192v2h1v-2zM700 200v2h1v-2zM702 190v2h2v-2z"/><path fill="#ff7800" d="M448 178v2h1v-2zM449 178v2h1v-2zM450 200v2h2v-2zM452 198v2h2v-2zM454 184v2h1v-2zM454 198v2h1v-2zM455 178v2h1v-2zM456 178v2h2v-2zM456 184v6h2v-6zM458 196v2h2v-2zM460 188v2h1v-2zM460 196v4h1v-4zM462 178v2h2v-2zM466 178v2h1v-2zM466 190v4h1v-4zM470 182v2h2v-2zM470 198v2h2v-2zM473 182v2h1v-2zM474 194v2h2v-2zM476 192v2h2v-2zM478 186v2h1v-2zM478 196v2h1v-2zM479 200v2h1v-2zM482 182v2h2v-2zM482 196v2h2v-2zM485 194v2h1v-2zM486 190v2h2v-2zM488 198v2h2v-2zM490 186v2h1v-2zM491 200v2h1v-2zM492 190v4h2v-4zM492 198v2h2v-2zM494 184v2h2v-2zM494 198v2h2v-2zM496 188v4h1v-4zM497 186v2h1v-2zM497 190v2h1v-2zM498 178v2h2v-2zM502 196v2h1v-2zM506 188v4h2v-4zM510 186v2h2v-2zM510 196v2h2v-2zM512 182v2h2v-2zM514 178v2h1v-2zM515 182v2h1v-2zM516 198v2h2v-2zM518 182v2h2v-2zM518 196v2h2v-2zM521 180v2h1v-2zM522 182v2h2v-2zM526 178v2h1v-2zM527 202v2h1v-2zM528 200v2h2v-2zM532 190v2h1v-2zM534 178v2h2v-2zM536 180v2h2v-2zM536 186v2h2v-2zM536 196v4h2v-4zM542 198v2h2v-2zM658 200v2h1v-2zM664 186v4h1v-4zM664 196v2h1v-2zM668 190v2h2v-2zM670 188v2h1v-2zM670 194v2h1v-2zM670 200v2h1v-2zM676 184v2h1v-2zM676 188v2h1v-2zM677 192v2h1v-2zM678 196v2h2v-2zM682 190v2h1v-2zM682 194v2h1v-2zM682 198v2h1v-2zM682 206v2h1v-2zM686 190v2h2v-2zM686 196v4h2v-4zM688 192v2h1v-2zM688 200v2h1v-2zM689 188v2h1v-2zM690 192v6h2v-6zM690 200v2h2v-2zM690 204v2h2v-2zM692 190v2h2v-2zM694 204v2h1v-2zM695 184v2h1v-2zM698 182v2h2v-2zM700 186v2h1v-2z"/><path fill="#ff5000" d="M448 198v4h1v-4zM449 194v2h1v-2zM450 198v2h2v-2zM452 178v2h2v-2zM454 190v2h1v-2zM456 190v2h2v-2zM458 180v2h2v-2zM458 190v2h2v-2zM460 180v2h1v-2zM460 190v6h1v-6zM461 202v2h1v-2zM462 196v2h2v-2zM464 194v2h2v-2zM466 182v2h1v-2zM466 188v2h1v-2zM468 178v4h2v-4zM468 184v2h2v-2zM468 194v2h2v-2zM470 184v2h2v-2zM473 184v2h1v-2zM473 194v2h1v-2zM474 188v2h2v-2zM474 192v2h2v-2zM474 196v2h2v-2zM476 186v2h2v-2zM484 180v2h1v-2zM485 182v2h1v-2zM486 180v2h2v-2zM486 184v2h2v-2zM486 188v2h2v-2zM488 180v2h2v-2zM490 188v2h1v-2zM490 198v2h1v-2zM490 204v2h1v-2zM491 178v2h1v-2zM491 198v2h1v-2zM492 184v2h2v-2zM492 194v2h2v-2zM494 180v4h2v-4zM494 186v2h2v-2zM494 190v2h2v-2zM494 194v2h2v-2zM496 182v4h1v-4zM497 194v2h1v-2zM498 180v2h2v-2zM498 188v2h2v-2zM500 178v2h2v-2zM502 184v2h1v-2zM502 188v2h1v-2zM502 194v2h1v-2zM503 194v2h1v-2zM504 184v2h2v-2zM504 194v2h2v-2zM506 180v2h2v-2zM506 184v2h2v-2zM506 192v2h2v-2zM510 190v2h2v-2zM510 194v2h2v-2zM514 200v2h1v-2zM515 198v2h1v-2zM516 188v2h2v-2zM516 196v2h2v-2zM518 184v2h2v-2zM522 194v4h2v-4zM527 176v2h1v-2zM527 200v2h1v-2zM528 180v4h2v-4zM528 192v2h2v-2zM530 188v2h2v-2zM532 192v2h1v-2zM532 196v2h1v-2zM533 178v2h1v-2zM536 184v2h2v-2zM538 188v2h1v-2zM540 184v2h2v-2zM656 202v2h2v-2zM664 192v2h1v-2zM664 198v4h1v-4zM668 186v2h2v-2zM668 192v2h2v-2zM670 184v2h1v-2zM670 202v2h1v-2zM677 200v2h1v-2zM680 188v2h2v-2zM682 188v2h1v-2zM686 188v2h2v-2zM688 194v2h1v-2zM690 188v2h2v-2zM696 188v2h2v-2z"/><path fill="#ff2800" d="M448 196v2h1v-2zM449 184v2h1v-2zM449 188v4h1v-4zM449 198v2h1v-2zM450 178v4h2v-4zM450 192v2h2v-2zM452 184v2h2v-2zM454 194v4h1v-4zM455 184v2h1v-2zM455 190v4h1v-4zM456 192v2h2v-2zM461 176v2h1v-2zM462 186v2h2v-2zM462 194v2h2v-2zM464 180v2h2v-2zM464 186v4h2v-4zM466 186v2h1v-2zM468 188v2h2v-2zM470 186v4h2v-4zM473 190v2h1v-2zM473 196v4h1v-4zM474 180v2h2v-2zM474 186v2h2v-2zM474 190v2h2v-2zM476 194v2h2v-2zM478 194v2h1v-2zM479 192v2h1v-2zM485 192v2h1v-2zM485 196v2h1v-2zM486 196v2h2v-2zM488 184v2h2v-2zM488 190v2h2v-2zM490 180v2h1v-2zM490 192v2h1v-2zM491 180v2h1v-2zM491 186v2h1v-2zM491 190v2h1v-2zM491 196v2h1v-2zM492 180v2h2v-2zM492 188v2h2v-2zM496 186v2h1v-2zM496 196v4h1v-4zM497 182v2h1v-2zM498 182v4h2v-4zM498 190v4h2v-4zM500 198v2h2v-2zM502 190v2h1v-2zM510 184v2h2v-2zM510 188v2h2v-2zM515 184v2h1v-2zM515 196v2h1v-2zM516 180v4h2v-4zM516 194v2h2v-2zM518 180v2h2v-2zM518 188v4h2v-4zM522 184v2h2v-2zM526 200v2h1v-2zM528 198v2h2v-2zM530 180v2h2v-2zM530 186v2h2v-2zM530 192v6h2v-6zM532 184v2h1v-2zM533 184v2h1v-2zM533 194v2h1v-2zM534 180v2h2v-2zM536 188v2h2v-2zM536 194v2h2v-2zM540 190v2h2v-2zM665 196v2h1v-2zM670 196v4h1v-4zM676 192v2h1v-2zM677 188v2h1v-2zM682 184v2h1v-2zM690 190v2h2v-2zM690 198v2h2v-2zM696 184v2h2v-2z"/><path fill="#ff0000" d="M448 180v4h1v-4zM448 186v8h1v-8zM449 180v4h1v-4zM449 186v2h1v-2zM449 192v2h1v-2zM449 196v2h1v-2zM450 182v10h2v-10zM450 194v4h2v-4zM452 180v4h2v-4zM452 186v12h2v-12zM454 186v2h1v-2zM454 192v2h1v-2zM455 180v4h1v-4zM455 188v2h1v-2zM455 194v2h1v-2zM455 198v2h1v-2zM460 186v2h1v-2zM461 178v24h1v-24zM462 182v4h2v-4zM462 188v6h2v-6zM466 194v2h1v-2zM468 182v2h2v-2zM468 186v2h2v-2zM468 192v2h2v-2zM468 196v2h2v-2zM473 180v2h1v-2zM473 188v2h1v-2zM473 192v2h1v-2zM474 182v2h2v-2zM474 198v2h2v-2zM476 196v2h2v-2zM478 182v2h1v-2zM479 180v12h1v-12zM479 194v4h1v-4zM480 178v22h2v-22zM485 180v2h1v-2zM485 184v4h1v-4zM485 190v2h1v-2zM488 178v2h2v-2zM488 182v2h2v-2zM488 186v4h2v-4zM488 192v6h2v-6zM490 178v2h1v-2zM490 182v4h1v-4zM490 190v2h1v-2zM490 194v4h1v-4zM491 182v4h1v-4zM491 188v2h1v-2zM491 192v4h1v-4zM492 182v2h2v-2zM492 186v2h2v-2zM494 196v2h2v-2zM496 192v4h1v-4zM497 188v2h1v-2zM498 194v4h2v-4zM500 180v18h2v-18zM502 182v2h1v-2zM510 180v4h2v-4zM510 192v2h2v-2zM514 180v20h1v-20zM515 186v10h1v-10zM516 190v4h2v-4zM518 186v2h2v-2zM518 194v2h2v-2zM526 180v20h1v-20zM527 178v22h1v-22zM528 184v8h2v-8zM528 194v4h2v-4zM530 182v4h2v-4zM530 190v2h2v-2zM532 182v2h1v-2zM532 188v2h1v-2zM533 180v4h1v-4zM533 186v8h1v-8zM533 196v2h1v-2zM534 182v12h2v-12zM534 196v4h2v-4zM536 182v2h2v-2zM536 190v4h2v-4zM670 182v2h1v-2zM670 186v2h1v-2zM670 190v4h1v-4zM677 194v2h1v-2zM682 200v2h1v-2zM686 194v2h2v-2z"/><polyline fill="none" stroke="#fff" stroke-width="1.1" shape-rendering="geometricPrecision" points="141,23.5 558,23.5 561,24.8 564,29.7 566.5,40 569.4,57.2 574,77.5 578.6,95.8 583.2,109.6 588,115.5 595,121.5 602,127.5 608,132 613.5,134.4 622.7,134.4 631.8,129.8 642,120.5 653.9,108.7 665,94 675.9,78.4 684,68 692.5,58.2 700,49.5 707,41"/><rect x="141" y="275" width="567" height="1" fill="#fff"/><rect x="142" y="387" width="567" height="1" fill="#ff0000"/><rect x="142" y="508" width="567" height="1" fill="#ff0000"/><rect x="142" y="544" width="567" height="1" fill="#fff"/><rect x="142" y="634" width="567" height="1" fill="#00ff00"/><rect x="141" y="19" width="567" height="1" fill="#fff"/><rect x="141" y="142" width="567" height="1" fill="#fff"/><rect x="141" y="19" width="1" height="9" fill="#fff"/><rect x="141" y="133" width="1" height="10" fill="#fff"/><rect x="160" y="19" width="1" height="6" fill="#fff"/><rect x="160" y="136" width="1" height="7" fill="#fff"/><rect x="179" y="19" width="1" height="6" fill="#fff"/><rect x="179" y="136" width="1" height="7" fill="#fff"/><rect x="197" y="19" width="1" height="6" fill="#fff"/><rect x="197" y="136" width="1" height="7" fill="#fff"/><rect x="216" y="19" width="1" height="6" fill="#fff"/><rect x="216" y="136" width="1" height="7" fill="#fff"/><rect x="235" y="19" width="1" height="9" fill="#fff"/><rect x="235" y="133" width="1" height="10" fill="#fff"/><rect x="254" y="19" width="1" height="6" fill="#fff"/><rect x="254" y="136" width="1" height="7" fill="#fff"/><rect x="273" y="19" width="1" height="6" fill="#fff"/><rect x="273" y="136" width="1" height="7" fill="#fff"/><rect x="292" y="19" width="1" height="6" fill="#fff"/><rect x="292" y="136" width="1" height="7" fill="#fff"/><rect x="311" y="19" width="1" height="6" fill="#fff"/><rect x="311" y="136" width="1" height="7" fill="#fff"/><rect x="330" y="19" width="1" height="9" fill="#fff"/><rect x="330" y="133" width="1" height="10" fill="#fff"/><rect x="349" y="19" width="1" height="6" fill="#fff"/><rect x="349" y="136" width="1" height="7" fill="#fff"/><rect x="368" y="19" width="1" height="6" fill="#fff"/><rect x="368" y="136" width="1" height="7" fill="#fff"/><rect x="387" y="19" width="1" height="6" fill="#fff"/><rect x="387" y="136" width="1" height="7" fill="#fff"/><rect x="406" y="19" width="1" height="6" fill="#fff"/><rect x="406" y="136" width="1" height="7" fill="#fff"/><rect x="425" y="19" width="1" height="9" fill="#fff"/><rect x="425" y="133" width="1" height="10" fill="#fff"/><rect x="444" y="19" width="1" height="6" fill="#fff"/><rect x="444" y="136" width="1" height="7" fill="#fff"/><rect x="463" y="19" width="1" height="6" fill="#fff"/><rect x="463" y="136" width="1" height="7" fill="#fff"/><rect x="482" y="19" width="1" height="6" fill="#fff"/><rect x="482" y="136" width="1" height="7" fill="#fff"/><rect x="501" y="19" width="1" height="6" fill="#fff"/><rect x="501" y="136" width="1" height="7" fill="#fff"/><rect x="520" y="19" width="1" height="9" fill="#fff"/><rect x="520" y="133" width="1" height="10" fill="#fff"/><rect x="539" y="19" width="1" height="6" fill="#fff"/><rect x="539" y="136" width="1" height="7" fill="#fff"/><rect x="558" y="19" width="1" height="6" fill="#fff"/><rect x="558" y="136" width="1" height="7" fill="#fff"/><rect x="576" y="19" width="1" height="6" fill="#fff"/><rect x="576" y="136" width="1" height="7" fill="#fff"/><rect x="595" y="19" width="1" height="6" fill="#fff"/><rect x="595" y="136" width="1" height="7" fill="#fff"/><rect x="614" y="19" width="1" height="9" fill="#fff"/><rect x="614" y="133" width="1" height="10" fill="#fff"/><rect x="633" y="19" width="1" height="6" fill="#fff"/><rect x="633" y="136" width="1" height="7" fill="#fff"/><rect x="652" y="19" width="1" height="6" fill="#fff"/><rect x="652" y="136" width="1" height="7" fill="#fff"/><rect x="671" y="19" width="1" height="6" fill="#fff"/><rect x="671" y="136" width="1" height="7" fill="#fff"/><rect x="690" y="19" width="1" height="6" fill="#fff"/><rect x="690" y="136" width="1" height="7" fill="#fff"/><rect x="707" y="19" width="1" height="9" fill="#fff"/><rect x="707" y="133" width="1" height="10" fill="#fff"/><rect x="141" y="164" width="567" height="1" fill="#fff"/><rect x="141" y="287" width="567" height="1" fill="#fff"/><rect x="141" y="164" width="1" height="9" fill="#fff"/><rect x="141" y="278" width="1" height="10" fill="#fff"/><rect x="160" y="164" width="1" height="6" fill="#fff"/><rect x="160" y="281" width="1" height="7" fill="#fff"/><rect x="179" y="164" width="1" height="6" fill="#fff"/><rect x="179" y="281" width="1" height="7" fill="#fff"/><rect x="197" y="164" width="1" height="6" fill="#fff"/><rect x="197" y="281" width="1" height="7" fill="#fff"/><rect x="216" y="164" width="1" height="6" fill="#fff"/><rect x="216" y="281" width="1" height="7" fill="#fff"/><rect x="235" y="164" width="1" height="9" fill="#fff"/><rect x="235" y="278" width="1" height="10" fill="#fff"/><rect x="254" y="164" width="1" height="6" fill="#fff"/><rect x="254" y="281" width="1" height="7" fill="#fff"/><rect x="273" y="164" width="1" height="6" fill="#fff"/><rect x="273" y="281" width="1" height="7" fill="#fff"/><rect x="292" y="164" width="1" height="6" fill="#fff"/><rect x="292" y="281" width="1" height="7" fill="#fff"/><rect x="311" y="164" width="1" height="6" fill="#fff"/><rect x="311" y="281" width="1" height="7" fill="#fff"/><rect x="330" y="164" width="1" height="9" fill="#fff"/><rect x="330" y="278" width="1" height="10" fill="#fff"/><rect x="349" y="164" width="1" height="6" fill="#fff"/><rect x="349" y="281" width="1" height="7" fill="#fff"/><rect x="368" y="164" width="1" height="6" fill="#fff"/><rect x="368" y="281" width="1" height="7" fill="#fff"/><rect x="387" y="164" width="1" height="6" fill="#fff"/><rect x="387" y="281" width="1" height="7" fill="#fff"/><rect x="406" y="164" width="1" height="6" fill="#fff"/><rect x="406" y="281" width="1" height="7" fill="#fff"/><rect x="425" y="164" width="1" height="9" fill="#fff"/><rect x="425" y="278" width="1" height="10" fill="#fff"/><rect x="444" y="164" width="1" height="6" fill="#fff"/><rect x="444" y="281" width="1" height="7" fill="#fff"/><rect x="463" y="164" width="1" height="6" fill="#fff"/><rect x="463" y="281" width="1" height="7" fill="#fff"/><rect x="482" y="164" width="1" height="6" fill="#fff"/><rect x="482" y="281" width="1" height="7" fill="#fff"/><rect x="501" y="164" width="1" height="6" fill="#fff"/><rect x="501" y="281" width="1" height="7" fill="#fff"/><rect x="520" y="164" width="1" height="9" fill="#fff"/><rect x="520" y="278" width="1" height="10" fill="#fff"/><rect x="539" y="164" width="1" height="6" fill="#fff"/><rect x="539" y="281" width="1" height="7" fill="#fff"/><rect x="558" y="164" width="1" height="6" fill="#fff"/><rect x="558" y="281" width="1" height="7" fill="#fff"/><rect x="576" y="164" width="1" height="6" fill="#fff"/><rect x="576" y="281" width="1" height="7" fill="#fff"/><rect x="595" y="164" width="1" height="6" fill="#fff"/><rect x="595" y="281" width="1" height="7" fill="#fff"/><rect x="614" y="164" width="1" height="9" fill="#fff"/><rect x="614" y="278" width="1" height="10" fill="#fff"/><rect x="633" y="164" width="1" height="6" fill="#fff"/><rect x="633" y="281" width="1" height="7" fill="#fff"/><rect x="652" y="164" width="1" height="6" fill="#fff"/><rect x="652" y="281" width="1" height="7" fill="#fff"/><rect x="671" y="164" width="1" height="6" fill="#fff"/><rect x="671" y="281" width="1" height="7" fill="#fff"/><rect x="690" y="164" width="1" height="6" fill="#fff"/><rect x="690" y="281" width="1" height="7" fill="#fff"/><rect x="707" y="164" width="1" height="9" fill="#fff"/><rect x="707" y="278" width="1" height="10" fill="#fff"/><rect x="142" y="296" width="567" height="1" fill="#fff"/><rect x="142" y="418" width="567" height="1" fill="#fff"/><rect x="142" y="296" width="1" height="9" fill="#fff"/><rect x="142" y="409" width="1" height="10" fill="#fff"/><rect x="161" y="296" width="1" height="6" fill="#fff"/><rect x="161" y="412" width="1" height="7" fill="#fff"/><rect x="180" y="296" width="1" height="6" fill="#fff"/><rect x="180" y="412" width="1" height="7" fill="#fff"/><rect x="198" y="296" width="1" height="6" fill="#fff"/><rect x="198" y="412" width="1" height="7" fill="#fff"/><rect x="217" y="296" width="1" height="6" fill="#fff"/><rect x="217" y="412" width="1" height="7" fill="#fff"/><rect x="236" y="296" width="1" height="9" fill="#fff"/><rect x="236" y="409" width="1" height="10" fill="#fff"/><rect x="255" y="296" width="1" height="6" fill="#fff"/><rect x="255" y="412" width="1" height="7" fill="#fff"/><rect x="274" y="296" width="1" height="6" fill="#fff"/><rect x="274" y="412" width="1" height="7" fill="#fff"/><rect x="293" y="296" width="1" height="6" fill="#fff"/><rect x="293" y="412" width="1" height="7" fill="#fff"/><rect x="312" y="296" width="1" height="6" fill="#fff"/><rect x="312" y="412" width="1" height="7" fill="#fff"/><rect x="331" y="296" width="1" height="9" fill="#fff"/><rect x="331" y="409" width="1" height="10" fill="#fff"/><rect x="350" y="296" width="1" height="6" fill="#fff"/><rect x="350" y="412" width="1" height="7" fill="#fff"/><rect x="369" y="296" width="1" height="6" fill="#fff"/><rect x="369" y="412" width="1" height="7" fill="#fff"/><rect x="388" y="296" width="1" height="6" fill="#fff"/><rect x="388" y="412" width="1" height="7" fill="#fff"/><rect x="407" y="296" width="1" height="6" fill="#fff"/><rect x="407" y="412" width="1" height="7" fill="#fff"/><rect x="426" y="296" width="1" height="9" fill="#fff"/><rect x="426" y="409" width="1" height="10" fill="#fff"/><rect x="445" y="296" width="1" height="6" fill="#fff"/><rect x="445" y="412" width="1" height="7" fill="#fff"/><rect x="464" y="296" width="1" height="6" fill="#fff"/><rect x="464" y="412" width="1" height="7" fill="#fff"/><rect x="483" y="296" width="1" height="6" fill="#fff"/><rect x="483" y="412" width="1" height="7" fill="#fff"/><rect x="502" y="296" width="1" height="6" fill="#fff"/><rect x="502" y="412" width="1" height="7" fill="#fff"/><rect x="521" y="296" width="1" height="9" fill="#fff"/><rect x="521" y="409" width="1" height="10" fill="#fff"/><rect x="540" y="296" width="1" height="6" fill="#fff"/><rect x="540" y="412" width="1" height="7" fill="#fff"/><rect x="559" y="296" width="1" height="6" fill="#fff"/><rect x="559" y="412" width="1" height="7" fill="#fff"/><rect x="577" y="296" width="1" height="6" fill="#fff"/><rect x="577" y="412" width="1" height="7" fill="#fff"/><rect x="596" y="296" width="1" height="6" fill="#fff"/><rect x="596" y="412" width="1" height="7" fill="#fff"/><rect x="615" y="296" width="1" height="9" fill="#fff"/><rect x="615" y="409" width="1" height="10" fill="#fff"/><rect x="634" y="296" width="1" height="6" fill="#fff"/><rect x="634" y="412" width="1" height="7" fill="#fff"/><rect x="653" y="296" width="1" height="6" fill="#fff"/><rect x="653" y="412" width="1" height="7" fill="#fff"/><rect x="672" y="296" width="1" height="6" fill="#fff"/><rect x="672" y="412" width="1" height="7" fill="#fff"/><rect x="691" y="296" width="1" height="6" fill="#fff"/><rect x="691" y="412" width="1" height="7" fill="#fff"/><rect x="708" y="296" width="1" height="9" fill="#fff"/><rect x="708" y="409" width="1" height="10" fill="#fff"/><rect x="142" y="429" width="567" height="1" fill="#fff"/><rect x="142" y="551" width="567" height="1" fill="#fff"/><rect x="142" y="429" width="1" height="9" fill="#fff"/><rect x="142" y="542" width="1" height="10" fill="#fff"/><rect x="161" y="429" width="1" height="6" fill="#fff"/><rect x="161" y="545" width="1" height="7" fill="#fff"/><rect x="180" y="429" width="1" height="6" fill="#fff"/><rect x="180" y="545" width="1" height="7" fill="#fff"/><rect x="198" y="429" width="1" height="6" fill="#fff"/><rect x="198" y="545" width="1" height="7" fill="#fff"/><rect x="217" y="429" width="1" height="6" fill="#fff"/><rect x="217" y="545" width="1" height="7" fill="#fff"/><rect x="236" y="429" width="1" height="9" fill="#fff"/><rect x="236" y="542" width="1" height="10" fill="#fff"/><rect x="255" y="429" width="1" height="6" fill="#fff"/><rect x="255" y="545" width="1" height="7" fill="#fff"/><rect x="274" y="429" width="1" height="6" fill="#fff"/><rect x="274" y="545" width="1" height="7" fill="#fff"/><rect x="293" y="429" width="1" height="6" fill="#fff"/><rect x="293" y="545" width="1" height="7" fill="#fff"/><rect x="312" y="429" width="1" height="6" fill="#fff"/><rect x="312" y="545" width="1" height="7" fill="#fff"/><rect x="331" y="429" width="1" height="9" fill="#fff"/><rect x="331" y="542" width="1" height="10" fill="#fff"/><rect x="350" y="429" width="1" height="6" fill="#fff"/><rect x="350" y="545" width="1" height="7" fill="#fff"/><rect x="369" y="429" width="1" height="6" fill="#fff"/><rect x="369" y="545" width="1" height="7" fill="#fff"/><rect x="388" y="429" width="1" height="6" fill="#fff"/><rect x="388" y="545" width="1" height="7" fill="#fff"/><rect x="407" y="429" width="1" height="6" fill="#fff"/><rect x="407" y="545" width="1" height="7" fill="#fff"/><rect x="426" y="429" width="1" height="9" fill="#fff"/><rect x="426" y="542" width="1" height="10" fill="#fff"/><rect x="445" y="429" width="1" height="6" fill="#fff"/><rect x="445" y="545" width="1" height="7" fill="#fff"/><rect x="464" y="429" width="1" height="6" fill="#fff"/><rect x="464" y="545" width="1" height="7" fill="#fff"/><rect x="483" y="429" width="1" height="6" fill="#fff"/><rect x="483" y="545" width="1" height="7" fill="#fff"/><rect x="502" y="429" width="1" height="6" fill="#fff"/><rect x="502" y="545" width="1" height="7" fill="#fff"/><rect x="521" y="429" width="1" height="9" fill="#fff"/><rect x="521" y="542" width="1" height="10" fill="#fff"/><rect x="540" y="429" width="1" height="6" fill="#fff"/><rect x="540" y="545" width="1" height="7" fill="#fff"/><rect x="559" y="429" width="1" height="6" fill="#fff"/><rect x="559" y="545" width="1" height="7" fill="#fff"/><rect x="577" y="429" width="1" height="6" fill="#fff"/><rect x="577" y="545" width="1" height="7" fill="#fff"/><rect x="596" y="429" width="1" height="6" fill="#fff"/><rect x="596" y="545" width="1" height="7" fill="#fff"/><rect x="615" y="429" width="1" height="9" fill="#fff"/><rect x="615" y="542" width="1" height="10" fill="#fff"/><rect x="634" y="429" width="1" height="6" fill="#fff"/><rect x="634" y="545" width="1" height="7" fill="#fff"/><rect x="653" y="429" width="1" height="6" fill="#fff"/><rect x="653" y="545" width="1" height="7" fill="#fff"/><rect x="672" y="429" width="1" height="6" fill="#fff"/><rect x="672" y="545" width="1" height="7" fill="#fff"/><rect x="691" y="429" width="1" height="6" fill="#fff"/><rect x="691" y="545" width="1" height="7" fill="#fff"/><rect x="708" y="429" width="1" height="9" fill="#fff"/><rect x="708" y="542" width="1" height="10" fill="#fff"/><rect x="142" y="561" width="567" height="1" fill="#fff"/><rect x="142" y="684" width="567" height="1" fill="#fff"/><rect x="142" y="561" width="1" height="9" fill="#fff"/><rect x="142" y="675" width="1" height="10" fill="#fff"/><rect x="161" y="561" width="1" height="6" fill="#fff"/><rect x="161" y="678" width="1" height="7" fill="#fff"/><rect x="180" y="561" width="1" height="6" fill="#fff"/><rect x="180" y="678" width="1" height="7" fill="#fff"/><rect x="198" y="561" width="1" height="6" fill="#fff"/><rect x="198" y="678" width="1" height="7" fill="#fff"/><rect x="217" y="561" width="1" height="6" fill="#fff"/><rect x="217" y="678" width="1" height="7" fill="#fff"/><rect x="236" y="561" width="1" height="9" fill="#fff"/><rect x="236" y="675" width="1" height="10" fill="#fff"/><rect x="255" y="561" width="1" height="6" fill="#fff"/><rect x="255" y="678" width="1" height="7" fill="#fff"/><rect x="274" y="561" width="1" height="6" fill="#fff"/><rect x="274" y="678" width="1" height="7" fill="#fff"/><rect x="293" y="561" width="1" height="6" fill="#fff"/><rect x="293" y="678" width="1" height="7" fill="#fff"/><rect x="312" y="561" width="1" height="6" fill="#fff"/><rect x="312" y="678" width="1" height="7" fill="#fff"/><rect x="331" y="561" width="1" height="9" fill="#fff"/><rect x="331" y="675" width="1" height="10" fill="#fff"/><rect x="350" y="561" width="1" height="6" fill="#fff"/><rect x="350" y="678" width="1" height="7" fill="#fff"/><rect x="369" y="561" width="1" height="6" fill="#fff"/><rect x="369" y="678" width="1" height="7" fill="#fff"/><rect x="388" y="561" width="1" height="6" fill="#fff"/><rect x="388" y="678" width="1" height="7" fill="#fff"/><rect x="407" y="561" width="1" height="6" fill="#fff"/><rect x="407" y="678" width="1" height="7" fill="#fff"/><rect x="426" y="561" width="1" height="9" fill="#fff"/><rect x="426" y="675" width="1" height="10" fill="#fff"/><rect x="445" y="561" width="1" height="6" fill="#fff"/><rect x="445" y="678" width="1" height="7" fill="#fff"/><rect x="464" y="561" width="1" height="6" fill="#fff"/><rect x="464" y="678" width="1" height="7" fill="#fff"/><rect x="483" y="561" width="1" height="6" fill="#fff"/><rect x="483" y="678" width="1" height="7" fill="#fff"/><rect x="502" y="561" width="1" height="6" fill="#fff"/><rect x="502" y="678" width="1" height="7" fill="#fff"/><rect x="521" y="561" width="1" height="9" fill="#fff"/><rect x="521" y="675" width="1" height="10" fill="#fff"/><rect x="540" y="561" width="1" height="6" fill="#fff"/><rect x="540" y="678" width="1" height="7" fill="#fff"/><rect x="559" y="561" width="1" height="6" fill="#fff"/><rect x="559" y="678" width="1" height="7" fill="#fff"/><rect x="577" y="561" width="1" height="6" fill="#fff"/><rect x="577" y="678" width="1" height="7" fill="#fff"/><rect x="596" y="561" width="1" height="6" fill="#fff"/><rect x="596" y="678" width="1" height="7" fill="#fff"/><rect x="615" y="561" width="1" height="9" fill="#fff"/><rect x="615" y="675" width="1" height="10" fill="#fff"/><rect x="634" y="561" width="1" height="6" fill="#fff"/><rect x="634" y="678" width="1" height="7" fill="#fff"/><rect x="653" y="561" width="1" height="6" fill="#fff"/><rect x="653" y="678" width="1" height="7" fill="#fff"/><rect x="672" y="561" width="1" height="6" fill="#fff"/><rect x="672" y="678" width="1" height="7" fill="#fff"/><rect x="691" y="561" width="1" height="6" fill="#fff"/><rect x="691" y="678" width="1" height="7" fill="#fff"/><rect x="708" y="561" width="1" height="9" fill="#fff"/><rect x="708" y="675" width="1" height="10" fill="#fff"/><rect x="141" y="19" width="1" height="124" fill="#fff"/><rect x="132" y="19" width="10" height="1" fill="#fff"/><rect x="135" y="21" width="7" height="1" fill="#fff"/><rect x="135" y="23" width="7" height="1" fill="#fff"/><rect x="135" y="26" width="7" height="1" fill="#fff"/><rect x="135" y="28" width="7" height="1" fill="#fff"/><rect x="135" y="31" width="7" height="1" fill="#fff"/><rect x="135" y="33" width="7" height="1" fill="#fff"/><rect x="135" y="36" width="7" height="1" fill="#fff"/><rect x="135" y="38" width="7" height="1" fill="#fff"/><rect x="135" y="41" width="7" height="1" fill="#fff"/><rect x="132" y="43" width="10" height="1" fill="#fff"/><rect x="135" y="46" width="7" height="1" fill="#fff"/><rect x="135" y="48" width="7" height="1" fill="#fff"/><rect x="135" y="50" width="7" height="1" fill="#fff"/><rect x="135" y="53" width="7" height="1" fill="#fff"/><rect x="135" y="55" width="7" height="1" fill="#fff"/><rect x="135" y="58" width="7" height="1" fill="#fff"/><rect x="135" y="60" width="7" height="1" fill="#fff"/><rect x="135" y="63" width="7" height="1" fill="#fff"/><rect x="135" y="65" width="7" height="1" fill="#fff"/><rect x="132" y="68" width="10" height="1" fill="#fff"/><rect x="135" y="70" width="7" height="1" fill="#fff"/><rect x="135" y="73" width="7" height="1" fill="#fff"/><rect x="135" y="75" width="7" height="1" fill="#fff"/><rect x="135" y="78" width="7" height="1" fill="#fff"/><rect x="135" y="80" width="7" height="1" fill="#fff"/><rect x="135" y="82" width="7" height="1" fill="#fff"/><rect x="135" y="85" width="7" height="1" fill="#fff"/><rect x="135" y="87" width="7" height="1" fill="#fff"/><rect x="135" y="90" width="7" height="1" fill="#fff"/><rect x="132" y="92" width="10" height="1" fill="#fff"/><rect x="135" y="95" width="7" height="1" fill="#fff"/><rect x="135" y="97" width="7" height="1" fill="#fff"/><rect x="135" y="100" width="7" height="1" fill="#fff"/><rect x="135" y="102" width="7" height="1" fill="#fff"/><rect x="135" y="105" width="7" height="1" fill="#fff"/><rect x="135" y="107" width="7" height="1" fill="#fff"/><rect x="135" y="110" width="7" height="1" fill="#fff"/><rect x="135" y="112" width="7" height="1" fill="#fff"/><rect x="135" y="114" width="7" height="1" fill="#fff"/><rect x="132" y="117" width="10" height="1" fill="#fff"/><rect x="135" y="119" width="7" height="1" fill="#fff"/><rect x="135" y="122" width="7" height="1" fill="#fff"/><rect x="135" y="124" width="7" height="1" fill="#fff"/><rect x="135" y="127" width="7" height="1" fill="#fff"/><rect x="135" y="129" width="7" height="1" fill="#fff"/><rect x="135" y="132" width="7" height="1" fill="#fff"/><rect x="135" y="134" width="7" height="1" fill="#fff"/><rect x="135" y="137" width="7" height="1" fill="#fff"/><rect x="135" y="139" width="7" height="1" fill="#fff"/><rect x="132" y="142" width="10" height="1" fill="#fff"/><rect x="707" y="19" width="1" height="124" fill="#fff"/><rect x="707" y="19" width="10" height="1" fill="#fff"/><rect x="707" y="21" width="7" height="1" fill="#fff"/><rect x="707" y="23" width="7" height="1" fill="#fff"/><rect x="707" y="26" width="7" height="1" fill="#fff"/><rect x="707" y="28" width="7" height="1" fill="#fff"/><rect x="707" y="31" width="7" height="1" fill="#fff"/><rect x="707" y="33" width="7" height="1" fill="#fff"/><rect x="707" y="36" width="7" height="1" fill="#fff"/><rect x="707" y="38" width="7" height="1" fill="#fff"/><rect x="707" y="41" width="7" height="1" fill="#fff"/><rect x="707" y="43" width="10" height="1" fill="#fff"/><rect x="707" y="46" width="7" height="1" fill="#fff"/><rect x="707" y="48" width="7" height="1" fill="#fff"/><rect x="707" y="50" width="7" height="1" fill="#fff"/><rect x="707" y="53" width="7" height="1" fill="#fff"/><rect x="707" y="55" width="7" height="1" fill="#fff"/><rect x="707" y="58" width="7" height="1" fill="#fff"/><rect x="707" y="60" width="7" height="1" fill="#fff"/><rect x="707" y="63" width="7" height="1" fill="#fff"/><rect x="707" y="65" width="7" height="1" fill="#fff"/><rect x="707" y="68" width="10" height="1" fill="#fff"/><rect x="707" y="70" width="7" height="1" fill="#fff"/><rect x="707" y="73" width="7" height="1" fill="#fff"/><rect x="707" y="75" width="7" height="1" fill="#fff"/><rect x="707" y="78" width="7" height="1" fill="#fff"/><rect x="707" y="80" width="7" height="1" fill="#fff"/><rect x="707" y="82" width="7" height="1" fill="#fff"/><rect x="707" y="85" width="7" height="1" fill="#fff"/><rect x="707" y="87" width="7" height="1" fill="#fff"/><rect x="707" y="90" width="7" height="1" fill="#fff"/><rect x="707" y="92" width="10" height="1" fill="#fff"/><rect x="707" y="95" width="7" height="1" fill="#fff"/><rect x="707" y="97" width="7" height="1" fill="#fff"/><rect x="707" y="100" width="7" height="1" fill="#fff"/><rect x="707" y="102" width="7" height="1" fill="#fff"/><rect x="707" y="105" width="7" height="1" fill="#fff"/><rect x="707" y="107" width="7" height="1" fill="#fff"/><rect x="707" y="110" width="7" height="1" fill="#fff"/><rect x="707" y="112" width="7" height="1" fill="#fff"/><rect x="707" y="114" width="7" height="1" fill="#fff"/><rect x="707" y="117" width="10" height="1" fill="#fff"/><rect x="707" y="119" width="7" height="1" fill="#fff"/><rect x="707" y="122" width="7" height="1" fill="#fff"/><rect x="707" y="124" width="7" height="1" fill="#fff"/><rect x="707" y="127" width="7" height="1" fill="#fff"/><rect x="707" y="129" width="7" height="1" fill="#fff"/><rect x="707" y="132" width="7" height="1" fill="#fff"/><rect x="707" y="134" width="7" height="1" fill="#fff"/><rect x="707" y="137" width="7" height="1" fill="#fff"/><rect x="707" y="139" width="7" height="1" fill="#fff"/><rect x="707" y="142" width="10" height="1" fill="#fff"/><rect x="141" y="164" width="1" height="124" fill="#fff"/><rect x="132" y="287" width="10" height="1" fill="#fff"/><rect x="135" y="270" width="7" height="1" fill="#fff"/><rect x="135" y="261" width="7" height="1" fill="#fff"/><rect x="135" y="254" width="7" height="1" fill="#fff"/><rect x="135" y="249" width="7" height="1" fill="#fff"/><rect x="135" y="245" width="7" height="1" fill="#fff"/><rect x="135" y="241" width="7" height="1" fill="#fff"/><rect x="135" y="238" width="7" height="1" fill="#fff"/><rect x="135" y="235" width="7" height="1" fill="#fff"/><rect x="132" y="233" width="10" height="1" fill="#fff"/><rect x="135" y="217" width="7" height="1" fill="#fff"/><rect x="135" y="208" width="7" height="1" fill="#fff"/><rect x="135" y="201" width="7" height="1" fill="#fff"/><rect x="135" y="196" width="7" height="1" fill="#fff"/><rect x="135" y="192" width="7" height="1" fill="#fff"/><rect x="135" y="188" width="7" height="1" fill="#fff"/><rect x="135" y="185" width="7" height="1" fill="#fff"/><rect x="135" y="182" width="7" height="1" fill="#fff"/><rect x="132" y="180" width="10" height="1" fill="#fff"/><rect x="135" y="164" width="7" height="1" fill="#fff"/><rect x="707" y="164" width="1" height="124" fill="#fff"/><rect x="707" y="164" width="10" height="1" fill="#fff"/><rect x="707" y="166" width="7" height="1" fill="#fff"/><rect x="707" y="168" width="7" height="1" fill="#fff"/><rect x="707" y="171" width="7" height="1" fill="#fff"/><rect x="707" y="173" width="7" height="1" fill="#fff"/><rect x="707" y="176" width="7" height="1" fill="#fff"/><rect x="707" y="178" width="7" height="1" fill="#fff"/><rect x="707" y="181" width="7" height="1" fill="#fff"/><rect x="707" y="183" width="7" height="1" fill="#fff"/><rect x="707" y="186" width="7" height="1" fill="#fff"/><rect x="707" y="188" width="10" height="1" fill="#fff"/><rect x="707" y="191" width="7" height="1" fill="#fff"/><rect x="707" y="193" width="7" height="1" fill="#fff"/><rect x="707" y="195" width="7" height="1" fill="#fff"/><rect x="707" y="198" width="7" height="1" fill="#fff"/><rect x="707" y="200" width="7" height="1" fill="#fff"/><rect x="707" y="203" width="7" height="1" fill="#fff"/><rect x="707" y="205" width="7" height="1" fill="#fff"/><rect x="707" y="208" width="7" height="1" fill="#fff"/><rect x="707" y="210" width="7" height="1" fill="#fff"/><rect x="707" y="213" width="10" height="1" fill="#fff"/><rect x="707" y="215" width="7" height="1" fill="#fff"/><rect x="707" y="218" width="7" height="1" fill="#fff"/><rect x="707" y="220" width="7" height="1" fill="#fff"/><rect x="707" y="223" width="7" height="1" fill="#fff"/><rect x="707" y="225" width="7" height="1" fill="#fff"/><rect x="707" y="227" width="7" height="1" fill="#fff"/><rect x="707" y="230" width="7" height="1" fill="#fff"/><rect x="707" y="232" width="7" height="1" fill="#fff"/><rect x="707" y="235" width="7" height="1" fill="#fff"/><rect x="707" y="237" width="10" height="1" fill="#fff"/><rect x="707" y="240" width="7" height="1" fill="#fff"/><rect x="707" y="242" width="7" height="1" fill="#fff"/><rect x="707" y="245" width="7" height="1" fill="#fff"/><rect x="707" y="247" width="7" height="1" fill="#fff"/><rect x="707" y="250" width="7" height="1" fill="#fff"/><rect x="707" y="252" width="7" height="1" fill="#fff"/><rect x="707" y="255" width="7" height="1" fill="#fff"/><rect x="707" y="257" width="7" height="1" fill="#fff"/><rect x="707" y="259" width="7" height="1" fill="#fff"/><rect x="707" y="262" width="10" height="1" fill="#fff"/><rect x="707" y="264" width="7" height="1" fill="#fff"/><rect x="707" y="267" width="7" height="1" fill="#fff"/><rect x="707" y="269" width="7" height="1" fill="#fff"/><rect x="707" y="272" width="7" height="1" fill="#fff"/><rect x="707" y="274" width="7" height="1" fill="#fff"/><rect x="707" y="277" width="7" height="1" fill="#fff"/><rect x="707" y="279" width="7" height="1" fill="#fff"/><rect x="707" y="282" width="7" height="1" fill="#fff"/><rect x="707" y="284" width="7" height="1" fill="#fff"/><rect x="707" y="287" width="10" height="1" fill="#fff"/><rect x="142" y="296" width="1" height="123" fill="#fff"/><rect x="133" y="296" width="10" height="1" fill="#fff"/><rect x="136" y="298" width="7" height="1" fill="#fff"/><rect x="136" y="300" width="7" height="1" fill="#fff"/><rect x="136" y="303" width="7" height="1" fill="#fff"/><rect x="136" y="305" width="7" height="1" fill="#fff"/><rect x="136" y="308" width="7" height="1" fill="#fff"/><rect x="136" y="310" width="7" height="1" fill="#fff"/><rect x="136" y="313" width="7" height="1" fill="#fff"/><rect x="136" y="315" width="7" height="1" fill="#fff"/><rect x="136" y="317" width="7" height="1" fill="#fff"/><rect x="133" y="320" width="10" height="1" fill="#fff"/><rect x="136" y="322" width="7" height="1" fill="#fff"/><rect x="136" y="325" width="7" height="1" fill="#fff"/><rect x="136" y="327" width="7" height="1" fill="#fff"/><rect x="136" y="330" width="7" height="1" fill="#fff"/><rect x="136" y="332" width="7" height="1" fill="#fff"/><rect x="136" y="335" width="7" height="1" fill="#fff"/><rect x="136" y="337" width="7" height="1" fill="#fff"/><rect x="136" y="339" width="7" height="1" fill="#fff"/><rect x="136" y="342" width="7" height="1" fill="#fff"/><rect x="133" y="344" width="10" height="1" fill="#fff"/><rect x="136" y="347" width="7" height="1" fill="#fff"/><rect x="136" y="349" width="7" height="1" fill="#fff"/><rect x="136" y="352" width="7" height="1" fill="#fff"/><rect x="136" y="354" width="7" height="1" fill="#fff"/><rect x="136" y="357" width="7" height="1" fill="#fff"/><rect x="136" y="359" width="7" height="1" fill="#fff"/><rect x="136" y="361" width="7" height="1" fill="#fff"/><rect x="136" y="364" width="7" height="1" fill="#fff"/><rect x="136" y="366" width="7" height="1" fill="#fff"/><rect x="133" y="369" width="10" height="1" fill="#fff"/><rect x="136" y="371" width="7" height="1" fill="#fff"/><rect x="136" y="374" width="7" height="1" fill="#fff"/><rect x="136" y="376" width="7" height="1" fill="#fff"/><rect x="136" y="378" width="7" height="1" fill="#fff"/><rect x="136" y="381" width="7" height="1" fill="#fff"/><rect x="136" y="383" width="7" height="1" fill="#fff"/><rect x="136" y="386" width="7" height="1" fill="#fff"/><rect x="136" y="388" width="7" height="1" fill="#fff"/><rect x="136" y="391" width="7" height="1" fill="#fff"/><rect x="133" y="393" width="10" height="1" fill="#fff"/><rect x="136" y="396" width="7" height="1" fill="#fff"/><rect x="136" y="398" width="7" height="1" fill="#fff"/><rect x="136" y="400" width="7" height="1" fill="#fff"/><rect x="136" y="403" width="7" height="1" fill="#fff"/><rect x="136" y="405" width="7" height="1" fill="#fff"/><rect x="136" y="408" width="7" height="1" fill="#fff"/><rect x="136" y="410" width="7" height="1" fill="#fff"/><rect x="136" y="413" width="7" height="1" fill="#fff"/><rect x="136" y="415" width="7" height="1" fill="#fff"/><rect x="133" y="418" width="10" height="1" fill="#fff"/><rect x="708" y="296" width="1" height="123" fill="#fff"/><rect x="708" y="296" width="10" height="1" fill="#fff"/><rect x="708" y="298" width="7" height="1" fill="#fff"/><rect x="708" y="300" width="7" height="1" fill="#fff"/><rect x="708" y="303" width="7" height="1" fill="#fff"/><rect x="708" y="305" width="7" height="1" fill="#fff"/><rect x="708" y="308" width="7" height="1" fill="#fff"/><rect x="708" y="310" width="7" height="1" fill="#fff"/><rect x="708" y="313" width="7" height="1" fill="#fff"/><rect x="708" y="315" width="7" height="1" fill="#fff"/><rect x="708" y="317" width="7" height="1" fill="#fff"/><rect x="708" y="320" width="10" height="1" fill="#fff"/><rect x="708" y="322" width="7" height="1" fill="#fff"/><rect x="708" y="325" width="7" height="1" fill="#fff"/><rect x="708" y="327" width="7" height="1" fill="#fff"/><rect x="708" y="330" width="7" height="1" fill="#fff"/><rect x="708" y="332" width="7" height="1" fill="#fff"/><rect x="708" y="335" width="7" height="1" fill="#fff"/><rect x="708" y="337" width="7" height="1" fill="#fff"/><rect x="708" y="339" width="7" height="1" fill="#fff"/><rect x="708" y="342" width="7" height="1" fill="#fff"/><rect x="708" y="344" width="10" height="1" fill="#fff"/><rect x="708" y="347" width="7" height="1" fill="#fff"/><rect x="708" y="349" width="7" height="1" fill="#fff"/><rect x="708" y="352" width="7" height="1" fill="#fff"/><rect x="708" y="354" width="7" height="1" fill="#fff"/><rect x="708" y="357" width="7" height="1" fill="#fff"/><rect x="708" y="359" width="7" height="1" fill="#fff"/><rect x="708" y="361" width="7" height="1" fill="#fff"/><rect x="708" y="364" width="7" height="1" fill="#fff"/><rect x="708" y="366" width="7" height="1" fill="#fff"/><rect x="708" y="369" width="10" height="1" fill="#fff"/><rect x="708" y="371" width="7" height="1" fill="#fff"/><rect x="708" y="374" width="7" height="1" fill="#fff"/><rect x="708" y="376" width="7" height="1" fill="#fff"/><rect x="708" y="378" width="7" height="1" fill="#fff"/><rect x="708" y="381" width="7" height="1" fill="#fff"/><rect x="708" y="383" width="7" height="1" fill="#fff"/><rect x="708" y="386" width="7" height="1" fill="#fff"/><rect x="708" y="388" width="7" height="1" fill="#fff"/><rect x="708" y="391" width="7" height="1" fill="#fff"/><rect x="708" y="393" width="10" height="1" fill="#fff"/><rect x="708" y="396" width="7" height="1" fill="#fff"/><rect x="708" y="398" width="7" height="1" fill="#fff"/><rect x="708" y="400" width="7" height="1" fill="#fff"/><rect x="708" y="403" width="7" height="1" fill="#fff"/><rect x="708" y="405" width="7" height="1" fill="#fff"/><rect x="708" y="408" width="7" height="1" fill="#fff"/><rect x="708" y="410" width="7" height="1" fill="#fff"/><rect x="708" y="413" width="7" height="1" fill="#fff"/><rect x="708" y="415" width="7" height="1" fill="#fff"/><rect x="708" y="418" width="10" height="1" fill="#fff"/><rect x="142" y="429" width="1" height="123" fill="#fff"/><rect x="133" y="429" width="10" height="1" fill="#fff"/><rect x="136" y="431" width="7" height="1" fill="#fff"/><rect x="136" y="433" width="7" height="1" fill="#fff"/><rect x="136" y="436" width="7" height="1" fill="#fff"/><rect x="136" y="438" width="7" height="1" fill="#fff"/><rect x="136" y="441" width="7" height="1" fill="#fff"/><rect x="136" y="443" width="7" height="1" fill="#fff"/><rect x="136" y="446" width="7" height="1" fill="#fff"/><rect x="136" y="448" width="7" height="1" fill="#fff"/><rect x="136" y="450" width="7" height="1" fill="#fff"/><rect x="133" y="453" width="10" height="1" fill="#fff"/><rect x="136" y="455" width="7" height="1" fill="#fff"/><rect x="136" y="458" width="7" height="1" fill="#fff"/><rect x="136" y="460" width="7" height="1" fill="#fff"/><rect x="136" y="463" width="7" height="1" fill="#fff"/><rect x="136" y="465" width="7" height="1" fill="#fff"/><rect x="136" y="468" width="7" height="1" fill="#fff"/><rect x="136" y="470" width="7" height="1" fill="#fff"/><rect x="136" y="472" width="7" height="1" fill="#fff"/><rect x="136" y="475" width="7" height="1" fill="#fff"/><rect x="133" y="477" width="10" height="1" fill="#fff"/><rect x="136" y="480" width="7" height="1" fill="#fff"/><rect x="136" y="482" width="7" height="1" fill="#fff"/><rect x="136" y="485" width="7" height="1" fill="#fff"/><rect x="136" y="487" width="7" height="1" fill="#fff"/><rect x="136" y="490" width="7" height="1" fill="#fff"/><rect x="136" y="492" width="7" height="1" fill="#fff"/><rect x="136" y="494" width="7" height="1" fill="#fff"/><rect x="136" y="497" width="7" height="1" fill="#fff"/><rect x="136" y="499" width="7" height="1" fill="#fff"/><rect x="133" y="502" width="10" height="1" fill="#fff"/><rect x="136" y="504" width="7" height="1" fill="#fff"/><rect x="136" y="507" width="7" height="1" fill="#fff"/><rect x="136" y="509" width="7" height="1" fill="#fff"/><rect x="136" y="511" width="7" height="1" fill="#fff"/><rect x="136" y="514" width="7" height="1" fill="#fff"/><rect x="136" y="516" width="7" height="1" fill="#fff"/><rect x="136" y="519" width="7" height="1" fill="#fff"/><rect x="136" y="521" width="7" height="1" fill="#fff"/><rect x="136" y="524" width="7" height="1" fill="#fff"/><rect x="133" y="526" width="10" height="1" fill="#fff"/><rect x="136" y="529" width="7" height="1" fill="#fff"/><rect x="136" y="531" width="7" height="1" fill="#fff"/><rect x="136" y="533" width="7" height="1" fill="#fff"/><rect x="136" y="536" width="7" height="1" fill="#fff"/><rect x="136" y="538" width="7" height="1" fill="#fff"/><rect x="136" y="541" width="7" height="1" fill="#fff"/><rect x="136" y="543" width="7" height="1" fill="#fff"/><rect x="136" y="546" width="7" height="1" fill="#fff"/><rect x="136" y="548" width="7" height="1" fill="#fff"/><rect x="133" y="551" width="10" height="1" fill="#fff"/><rect x="708" y="429" width="1" height="123" fill="#fff"/><rect x="708" y="429" width="10" height="1" fill="#fff"/><rect x="708" y="431" width="7" height="1" fill="#fff"/><rect x="708" y="433" width="7" height="1" fill="#fff"/><rect x="708" y="436" width="7" height="1" fill="#fff"/><rect x="708" y="438" width="7" height="1" fill="#fff"/><rect x="708" y="441" width="7" height="1" fill="#fff"/><rect x="708" y="443" width="7" height="1" fill="#fff"/><rect x="708" y="446" width="7" height="1" fill="#fff"/><rect x="708" y="448" width="7" height="1" fill="#fff"/><rect x="708" y="450" width="7" height="1" fill="#fff"/><rect x="708" y="453" width="10" height="1" fill="#fff"/><rect x="708" y="455" width="7" height="1" fill="#fff"/><rect x="708" y="458" width="7" height="1" fill="#fff"/><rect x="708" y="460" width="7" height="1" fill="#fff"/><rect x="708" y="463" width="7" height="1" fill="#fff"/><rect x="708" y="465" width="7" height="1" fill="#fff"/><rect x="708" y="468" width="7" height="1" fill="#fff"/><rect x="708" y="470" width="7" height="1" fill="#fff"/><rect x="708" y="472" width="7" height="1" fill="#fff"/><rect x="708" y="475" width="7" height="1" fill="#fff"/><rect x="708" y="477" width="10" height="1" fill="#fff"/><rect x="708" y="480" width="7" height="1" fill="#fff"/><rect x="708" y="482" width="7" height="1" fill="#fff"/><rect x="708" y="485" width="7" height="1" fill="#fff"/><rect x="708" y="487" width="7" height="1" fill="#fff"/><rect x="708" y="490" width="7" height="1" fill="#fff"/><rect x="708" y="492" width="7" height="1" fill="#fff"/><rect x="708" y="494" width="7" height="1" fill="#fff"/><rect x="708" y="497" width="7" height="1" fill="#fff"/><rect x="708" y="499" width="7" height="1" fill="#fff"/><rect x="708" y="502" width="10" height="1" fill="#fff"/><rect x="708" y="504" width="7" height="1" fill="#fff"/><rect x="708" y="507" width="7" height="1" fill="#fff"/><rect x="708" y="509" width="7" height="1" fill="#fff"/><rect x="708" y="511" width="7" height="1" fill="#fff"/><rect x="708" y="514" width="7" height="1" fill="#fff"/><rect x="708" y="516" width="7" height="1" fill="#fff"/><rect x="708" y="519" width="7" height="1" fill="#fff"/><rect x="708" y="521" width="7" height="1" fill="#fff"/><rect x="708" y="524" width="7" height="1" fill="#fff"/><rect x="708" y="526" width="10" height="1" fill="#fff"/><rect x="708" y="529" width="7" height="1" fill="#fff"/><rect x="708" y="531" width="7" height="1" fill="#fff"/><rect x="708" y="533" width="7" height="1" fill="#fff"/><rect x="708" y="536" width="7" height="1" fill="#fff"/><rect x="708" y="538" width="7" height="1" fill="#fff"/><rect x="708" y="541" width="7" height="1" fill="#fff"/><rect x="708" y="543" width="7" height="1" fill="#fff"/><rect x="708" y="546" width="7" height="1" fill="#fff"/><rect x="708" y="548" width="7" height="1" fill="#fff"/><rect x="708" y="551" width="10" height="1" fill="#fff"/><rect x="142" y="561" width="1" height="124" fill="#fff"/><rect x="133" y="561" width="10" height="1" fill="#fff"/><rect x="136" y="563" width="7" height="1" fill="#fff"/><rect x="136" y="565" width="7" height="1" fill="#fff"/><rect x="136" y="568" width="7" height="1" fill="#fff"/><rect x="136" y="570" width="7" height="1" fill="#fff"/><rect x="136" y="573" width="7" height="1" fill="#fff"/><rect x="136" y="575" width="7" height="1" fill="#fff"/><rect x="136" y="578" width="7" height="1" fill="#fff"/><rect x="136" y="580" width="7" height="1" fill="#fff"/><rect x="136" y="583" width="7" height="1" fill="#fff"/><rect x="133" y="585" width="10" height="1" fill="#fff"/><rect x="136" y="588" width="7" height="1" fill="#fff"/><rect x="136" y="590" width="7" height="1" fill="#fff"/><rect x="136" y="592" width="7" height="1" fill="#fff"/><rect x="136" y="595" width="7" height="1" fill="#fff"/><rect x="136" y="597" width="7" height="1" fill="#fff"/><rect x="136" y="600" width="7" height="1" fill="#fff"/><rect x="136" y="602" width="7" height="1" fill="#fff"/><rect x="136" y="605" width="7" height="1" fill="#fff"/><rect x="136" y="607" width="7" height="1" fill="#fff"/><rect x="133" y="610" width="10" height="1" fill="#fff"/><rect x="136" y="612" width="7" height="1" fill="#fff"/><rect x="136" y="615" width="7" height="1" fill="#fff"/><rect x="136" y="617" width="7" height="1" fill="#fff"/><rect x="136" y="620" width="7" height="1" fill="#fff"/><rect x="136" y="622" width="7" height="1" fill="#fff"/><rect x="136" y="624" width="7" height="1" fill="#fff"/><rect x="136" y="627" width="7" height="1" fill="#fff"/><rect x="136" y="629" width="7" height="1" fill="#fff"/><rect x="136" y="632" width="7" height="1" fill="#fff"/><rect x="133" y="634" width="10" height="1" fill="#fff"/><rect x="136" y="637" width="7" height="1" fill="#fff"/><rect x="136" y="639" width="7" height="1" fill="#fff"/><rect x="136" y="642" width="7" height="1" fill="#fff"/><rect x="136" y="644" width="7" height="1" fill="#fff"/><rect x="136" y="647" width="7" height="1" fill="#fff"/><rect x="136" y="649" width="7" height="1" fill="#fff"/><rect x="136" y="652" width="7" height="1" fill="#fff"/><rect x="136" y="654" width="7" height="1" fill="#fff"/><rect x="136" y="656" width="7" height="1" fill="#fff"/><rect x="133" y="659" width="10" height="1" fill="#fff"/><rect x="136" y="661" width="7" height="1" fill="#fff"/><rect x="136" y="664" width="7" height="1" fill="#fff"/><rect x="136" y="666" width="7" height="1" fill="#fff"/><rect x="136" y="669" width="7" height="1" fill="#fff"/><rect x="136" y="671" width="7" height="1" fill="#fff"/><rect x="136" y="674" width="7" height="1" fill="#fff"/><rect x="136" y="676" width="7" height="1" fill="#fff"/><rect x="136" y="679" width="7" height="1" fill="#fff"/><rect x="136" y="681" width="7" height="1" fill="#fff"/><rect x="133" y="684" width="10" height="1" fill="#fff"/><rect x="708" y="561" width="1" height="124" fill="#fff"/><rect x="708" y="561" width="10" height="1" fill="#fff"/><rect x="708" y="563" width="7" height="1" fill="#fff"/><rect x="708" y="565" width="7" height="1" fill="#fff"/><rect x="708" y="568" width="7" height="1" fill="#fff"/><rect x="708" y="570" width="7" height="1" fill="#fff"/><rect x="708" y="573" width="7" height="1" fill="#fff"/><rect x="708" y="575" width="7" height="1" fill="#fff"/><rect x="708" y="578" width="7" height="1" fill="#fff"/><rect x="708" y="580" width="7" height="1" fill="#fff"/><rect x="708" y="583" width="7" height="1" fill="#fff"/><rect x="708" y="585" width="10" height="1" fill="#fff"/><rect x="708" y="588" width="7" height="1" fill="#fff"/><rect x="708" y="590" width="7" height="1" fill="#fff"/><rect x="708" y="592" width="7" height="1" fill="#fff"/><rect x="708" y="595" width="7" height="1" fill="#fff"/><rect x="708" y="597" width="7" height="1" fill="#fff"/><rect x="708" y="600" width="7" height="1" fill="#fff"/><rect x="708" y="602" width="7" height="1" fill="#fff"/><rect x="708" y="605" width="7" height="1" fill="#fff"/><rect x="708" y="607" width="7" height="1" fill="#fff"/><rect x="708" y="610" width="10" height="1" fill="#fff"/><rect x="708" y="612" width="7" height="1" fill="#fff"/><rect x="708" y="615" width="7" height="1" fill="#fff"/><rect x="708" y="617" width="7" height="1" fill="#fff"/><rect x="708" y="620" width="7" height="1" fill="#fff"/><rect x="708" y="622" width="7" height="1" fill="#fff"/><rect x="708" y="624" width="7" height="1" fill="#fff"/><rect x="708" y="627" width="7" height="1" fill="#fff"/><rect x="708" y="629" width="7" height="1" fill="#fff"/><rect x="708" y="632" width="7" height="1" fill="#fff"/><rect x="708" y="634" width="10" height="1" fill="#fff"/><rect x="708" y="637" width="7" height="1" fill="#fff"/><rect x="708" y="639" width="7" height="1" fill="#fff"/><rect x="708" y="642" width="7" height="1" fill="#fff"/><rect x="708" y="644" width="7" height="1" fill="#fff"/><rect x="708" y="647" width="7" height="1" fill="#fff"/><rect x="708" y="649" width="7" height="1" fill="#fff"/><rect x="708" y="652" width="7" height="1" fill="#fff"/><rect x="708" y="654" width="7" height="1" fill="#fff"/><rect x="708" y="656" width="7" height="1" fill="#fff"/><rect x="708" y="659" width="10" height="1" fill="#fff"/><rect x="708" y="661" width="7" height="1" fill="#fff"/><rect x="708" y="664" width="7" height="1" fill="#fff"/><rect x="708" y="666" width="7" height="1" fill="#fff"/><rect x="708" y="669" width="7" height="1" fill="#fff"/><rect x="708" y="671" width="7" height="1" fill="#fff"/><rect x="708" y="674" width="7" height="1" fill="#fff"/><rect x="708" y="676" width="7" height="1" fill="#fff"/><rect x="708" y="679" width="7" height="1" fill="#fff"/><rect x="708" y="681" width="7" height="1" fill="#fff"/><rect x="708" y="684" width="10" height="1" fill="#fff"/><rect x="135" y="164" width="7" height="1" fill="#fff"/><text x="153.65" y="13.7" font-size="14.6" text-anchor="middle" fill="#fff" textLength="21.9" lengthAdjust="spacingAndGlyphs">NPI</text><text x="197.8" y="13.7" font-size="14.6" text-anchor="middle" fill="#fff" textLength="45.8" lengthAdjust="spacingAndGlyphs">Vector</text><text x="248" y="13.7" font-size="14.6" text-anchor="middle" fill="#fff" textLength="32.8" lengthAdjust="spacingAndGlyphs">Data</text><text x="156.4" y="158.8" font-size="15" text-anchor="middle" fill="#fff" textLength="27" lengthAdjust="spacingAndGlyphs">MEx</text><text x="205.9" y="158.8" font-size="15" text-anchor="middle" fill="#fff" textLength="52.2" lengthAdjust="spacingAndGlyphs">ELS-01</text><text x="250.45" y="158.8" font-size="15" text-anchor="middle" fill="#fff" textLength="14.7" lengthAdjust="spacingAndGlyphs">LR</text><text x="103.05" y="22.85" font-size="12.14" text-anchor="middle" fill="#fff" textLength="48.5" lengthAdjust="spacingAndGlyphs">3.1e+01</text><text x="102.05" y="47.45" font-size="12.14" text-anchor="middle" fill="#fff" textLength="50.5" lengthAdjust="spacingAndGlyphs">2.5e+01</text><text x="102.05" y="72.05" font-size="12.14" text-anchor="middle" fill="#fff" textLength="50.5" lengthAdjust="spacingAndGlyphs">1.9e+01</text><text x="102.05" y="96.65" font-size="12.14" text-anchor="middle" fill="#fff" textLength="50.5" lengthAdjust="spacingAndGlyphs">1.2e+01</text><text x="102.05" y="121.25" font-size="12.14" text-anchor="middle" fill="#fff" textLength="50.5" lengthAdjust="spacingAndGlyphs">6.2e+00</text><text x="727.25" y="23.05" font-size="12.14" text-anchor="middle" fill="#fff" textLength="12.5" lengthAdjust="spacingAndGlyphs">81</text><text x="727.25" y="47.45" font-size="12.14" text-anchor="middle" fill="#fff" textLength="12.5" lengthAdjust="spacingAndGlyphs">78</text><text x="727.25" y="72.05" font-size="12.14" text-anchor="middle" fill="#fff" textLength="12.5" lengthAdjust="spacingAndGlyphs">75</text><text x="727.25" y="96.25" font-size="12.14" text-anchor="middle" fill="#fff" textLength="12.5" lengthAdjust="spacingAndGlyphs">72</text><text x="727.25" y="120.65" font-size="12.14" text-anchor="middle" fill="#fff" textLength="12.5" lengthAdjust="spacingAndGlyphs">69</text><text x="118.1" y="184.3" font-size="12.3" text-anchor="middle" fill="#fff" textLength="14.8" lengthAdjust="spacingAndGlyphs">10</text><text x="126.6" y="177" font-size="7.5" text-anchor="middle" fill="#fff">2</text><text x="118.1" y="237.3" font-size="12.3" text-anchor="middle" fill="#fff" textLength="14.8" lengthAdjust="spacingAndGlyphs">10</text><text x="126.6" y="230" font-size="7.5" text-anchor="middle" fill="#fff">1</text><text x="731" y="168.25" font-size="12.14" text-anchor="middle" fill="#fff" textLength="20" lengthAdjust="spacingAndGlyphs">190</text><text x="731" y="192.55" font-size="12.14" text-anchor="middle" fill="#fff" textLength="20" lengthAdjust="spacingAndGlyphs">150</text><text x="731" y="217.05" font-size="12.14" text-anchor="middle" fill="#fff" textLength="20" lengthAdjust="spacingAndGlyphs">110</text><text x="727.5" y="241.55" font-size="12.14" text-anchor="middle" fill="#fff" textLength="13" lengthAdjust="spacingAndGlyphs">70</text><text x="727.5" y="266.25" font-size="12.14" text-anchor="middle" fill="#fff" textLength="13" lengthAdjust="spacingAndGlyphs">30</text><text x="120.2" y="300" font-size="11.43" text-anchor="middle" fill="#fff" textLength="18" lengthAdjust="spacingAndGlyphs">1.5</text><text x="730" y="300" font-size="11.43" text-anchor="middle" fill="#fff" textLength="16" lengthAdjust="spacingAndGlyphs">1.5</text><text x="121.7" y="324.4" font-size="11.43" text-anchor="middle" fill="#fff" textLength="15" lengthAdjust="spacingAndGlyphs">1.1</text><text x="728.35" y="324.4" font-size="11.43" text-anchor="middle" fill="#fff" textLength="12.7" lengthAdjust="spacingAndGlyphs">1.1</text><text x="119.2" y="348.6" font-size="11.43" text-anchor="middle" fill="#fff" textLength="20" lengthAdjust="spacingAndGlyphs">0.7</text><text x="731.6" y="348.6" font-size="11.43" text-anchor="middle" fill="#fff" textLength="19.2" lengthAdjust="spacingAndGlyphs">0.7</text><text x="119.2" y="372.8" font-size="11.43" text-anchor="middle" fill="#fff" textLength="20" lengthAdjust="spacingAndGlyphs">0.3</text><text x="731.6" y="372.8" font-size="11.43" text-anchor="middle" fill="#fff" textLength="19.2" lengthAdjust="spacingAndGlyphs">0.3</text><text x="116.7" y="397.2" font-size="11.43" text-anchor="middle" fill="#fff" textLength="25" lengthAdjust="spacingAndGlyphs">-0.1</text><text x="735" y="397.2" font-size="11.43" text-anchor="middle" fill="#fff" textLength="26" lengthAdjust="spacingAndGlyphs">-0.1</text><text x="108.8" y="433.55" font-size="12.14" text-anchor="middle" fill="#fff" textLength="40" lengthAdjust="spacingAndGlyphs">23500</text><text x="108.8" y="457.85" font-size="12.14" text-anchor="middle" fill="#fff" textLength="40" lengthAdjust="spacingAndGlyphs">18800</text><text x="109.8" y="482.15" font-size="12.14" text-anchor="middle" fill="#fff" textLength="38" lengthAdjust="spacingAndGlyphs">14100</text><text x="113.05" y="506.45" font-size="12.14" text-anchor="middle" fill="#fff" textLength="31.5" lengthAdjust="spacingAndGlyphs">9400</text><text x="113.05" y="530.75" font-size="12.14" text-anchor="middle" fill="#fff" textLength="31.5" lengthAdjust="spacingAndGlyphs">4700</text><text x="733.75" y="433.55" font-size="12.14" text-anchor="middle" fill="#fff" textLength="22.5" lengthAdjust="spacingAndGlyphs">260</text><text x="733.75" y="457.85" font-size="12.14" text-anchor="middle" fill="#fff" textLength="22.5" lengthAdjust="spacingAndGlyphs">206</text><text x="733.75" y="482.15" font-size="12.14" text-anchor="middle" fill="#fff" textLength="22.5" lengthAdjust="spacingAndGlyphs">152</text><text x="730" y="506.45" font-size="12.14" text-anchor="middle" fill="#fff" textLength="15" lengthAdjust="spacingAndGlyphs">98</text><text x="730" y="530.75" font-size="12.14" text-anchor="middle" fill="#fff" textLength="15" lengthAdjust="spacingAndGlyphs">44</text><text x="116.65" y="565.05" font-size="12.14" text-anchor="middle" fill="#fff" textLength="25.7" lengthAdjust="spacingAndGlyphs">0.15</text><text x="735.35" y="565.05" font-size="12.14" text-anchor="middle" fill="#fff" textLength="25.7" lengthAdjust="spacingAndGlyphs">0.15</text><text x="116.65" y="589.75" font-size="12.14" text-anchor="middle" fill="#fff" textLength="25.7" lengthAdjust="spacingAndGlyphs">0.10</text><text x="735.35" y="589.75" font-size="12.14" text-anchor="middle" fill="#fff" textLength="25.7" lengthAdjust="spacingAndGlyphs">0.10</text><text x="116.65" y="614.25" font-size="12.14" text-anchor="middle" fill="#fff" textLength="25.7" lengthAdjust="spacingAndGlyphs">0.05</text><text x="735.35" y="614.25" font-size="12.14" text-anchor="middle" fill="#fff" textLength="25.7" lengthAdjust="spacingAndGlyphs">0.05</text><text x="116.65" y="638.75" font-size="12.14" text-anchor="middle" fill="#fff" textLength="25.7" lengthAdjust="spacingAndGlyphs">0.00</text><text x="735.35" y="638.75" font-size="12.14" text-anchor="middle" fill="#fff" textLength="25.7" lengthAdjust="spacingAndGlyphs">0.00</text><text x="111" y="663.45" font-size="12.14" text-anchor="middle" fill="#fff" textLength="37" lengthAdjust="spacingAndGlyphs">-0.05</text><text x="741" y="663.45" font-size="12.14" text-anchor="middle" fill="#fff" textLength="37" lengthAdjust="spacingAndGlyphs">-0.05</text><text x="111" y="688.05" font-size="12.14" text-anchor="middle" fill="#fff" textLength="37" lengthAdjust="spacingAndGlyphs">-0.10</text><text x="741" y="688.05" font-size="12.14" text-anchor="middle" fill="#fff" textLength="37" lengthAdjust="spacingAndGlyphs">-0.10</text><text x="67.3" y="701.7" font-size="16.57" text-anchor="middle" fill="#fff" textLength="77.4" lengthAdjust="spacingAndGlyphs">2008/302</text><text x="141.9" y="701.7" font-size="16.57" text-anchor="middle" fill="#fff" textLength="42.2" lengthAdjust="spacingAndGlyphs">20:00</text><text x="236.7" y="701.7" font-size="16.57" text-anchor="middle" fill="#fff" textLength="43.4" lengthAdjust="spacingAndGlyphs">20:40</text><text x="331.35" y="701.7" font-size="16.57" text-anchor="middle" fill="#fff" textLength="39.3" lengthAdjust="spacingAndGlyphs">21:20</text><text x="427.15" y="701.7" font-size="16.57" text-anchor="middle" fill="#fff" textLength="43.1" lengthAdjust="spacingAndGlyphs">22:00</text><text x="521.05" y="701.7" font-size="16.57" text-anchor="middle" fill="#fff" textLength="43.1" lengthAdjust="spacingAndGlyphs">22:40</text><text x="615.75" y="701.7" font-size="16.57" text-anchor="middle" fill="#fff" textLength="41.5" lengthAdjust="spacingAndGlyphs">23:20</text><text x="709.65" y="701.7" font-size="16.57" text-anchor="middle" fill="#fff" textLength="41.7" lengthAdjust="spacingAndGlyphs">00:00</text><text transform="translate(40.2 80.15) rotate(-90)" font-size="17.15" text-anchor="middle" fill="#fff" textLength="50.9" lengthAdjust="spacingAndGlyphs">Sector</text><text transform="translate(55 80.45) rotate(-90)" font-size="16.28" text-anchor="middle" fill="#fff" textLength="61.7" lengthAdjust="spacingAndGlyphs">Unitless</text><text transform="translate(783.8 80.2) rotate(90)" font-size="11.48" text-anchor="middle" fill="#fff" textLength="68.8" lengthAdjust="spacingAndGlyphs">Sensor Data</text><text transform="translate(771.8 80.2) rotate(90)" font-size="11.63" text-anchor="middle" fill="#fff" textLength="105.6" lengthAdjust="spacingAndGlyphs">ESH Sun Elevation</text><text transform="translate(760.5 80.1) rotate(90)" font-size="12.06" text-anchor="middle" fill="#fff" textLength="32.2" lengthAdjust="spacingAndGlyphs">Angle</text><text transform="translate(749.8 80.65) rotate(90)" font-size="10.32" text-anchor="middle" fill="#fff" textLength="36.7" lengthAdjust="spacingAndGlyphs">degree</text><text transform="translate(71.2 224.75) rotate(-90)" font-size="14.83" text-anchor="middle" fill="#fff" textLength="102.5" lengthAdjust="spacingAndGlyphs">Electron Energy</text><text transform="translate(83 225.15) rotate(-90)" font-size="12.79" text-anchor="middle" fill="#fff" textLength="15.3" lengthAdjust="spacingAndGlyphs">eV</text><text transform="translate(802.2 225.65) rotate(90)" font-size="15.7" text-anchor="middle" fill="#fff" textLength="91.3" lengthAdjust="spacingAndGlyphs">Sensor Data</text><text transform="translate(787.2 226.25) rotate(90)" font-size="15.7" text-anchor="middle" fill="#fff" textLength="112.5" lengthAdjust="spacingAndGlyphs">Model Scanner</text><text transform="translate(772.2 225.65) rotate(90)" font-size="15.7" text-anchor="middle" fill="#fff" textLength="38.7" lengthAdjust="spacingAndGlyphs">Angle</text><text transform="translate(758.5 225.05) rotate(90)" font-size="13.81" text-anchor="middle" fill="#fff" textLength="57.5" lengthAdjust="spacingAndGlyphs">degrees</text><text transform="translate(48.4 357) rotate(-90)" font-size="13.37" text-anchor="middle" fill="#fff" textLength="79" lengthAdjust="spacingAndGlyphs">Sensor Data</text><text transform="translate(61.2 357) rotate(-90)" font-size="14.68" text-anchor="middle" fill="#fff" textLength="119.4" lengthAdjust="spacingAndGlyphs">MU Scanner +30V</text><text transform="translate(73.2 357) rotate(-90)" font-size="12.06" text-anchor="middle" fill="#fff" textLength="60.6" lengthAdjust="spacingAndGlyphs">Raw Data</text><text transform="translate(86 355.65) rotate(-90)" font-size="13.37" text-anchor="middle" fill="#fff" textLength="26.7" lengthAdjust="spacingAndGlyphs">Raw</text><text transform="translate(802.5 356.75) rotate(90)" font-size="14.54" text-anchor="middle" fill="#ff0000" textLength="78.5" lengthAdjust="spacingAndGlyphs">Sensor Data</text><text transform="translate(790 356.9) rotate(90)" font-size="14.54" text-anchor="middle" fill="#ff0000" textLength="103.8" lengthAdjust="spacingAndGlyphs">MU Scanner Int</text><text transform="translate(777.5 356.75) rotate(90)" font-size="14.54" text-anchor="middle" fill="#ff0000" textLength="61.5" lengthAdjust="spacingAndGlyphs">Raw Data</text><text transform="translate(764.5 356.3) rotate(90)" font-size="13.52" text-anchor="middle" fill="#ff0000" textLength="25" lengthAdjust="spacingAndGlyphs">Raw</text><text transform="translate(42.5 490.05) rotate(-90)" font-size="12" text-anchor="middle" fill="#fff" textLength="67.5" lengthAdjust="spacingAndGlyphs">Sensor Data</text><text transform="translate(53.6 489.4) rotate(-90)" font-size="12" text-anchor="middle" fill="#fff" textLength="108.8" lengthAdjust="spacingAndGlyphs">Model Scanner Pos</text><text transform="translate(64 490.05) rotate(-90)" font-size="12" text-anchor="middle" fill="#fff" textLength="22.5" lengthAdjust="spacingAndGlyphs">Raw</text><text transform="translate(75.3 490.05) rotate(-90)" font-size="12" text-anchor="middle" fill="#fff" textLength="42.5" lengthAdjust="spacingAndGlyphs">unitless</text><text transform="translate(801.8 490) rotate(90)" font-size="15.55" text-anchor="middle" fill="#ff0000" textLength="85" lengthAdjust="spacingAndGlyphs">Sensor Data</text><text transform="translate(789.2 490.65) rotate(90)" font-size="15.7" text-anchor="middle" fill="#ff0000" textLength="113.7" lengthAdjust="spacingAndGlyphs">MU Scanner Pos</text><text transform="translate(776 490) rotate(90)" font-size="16.72" text-anchor="middle" fill="#ff0000" textLength="65" lengthAdjust="spacingAndGlyphs">Telemetry</text><text transform="translate(761.5 490.05) rotate(90)" font-size="14.24" text-anchor="middle" fill="#ff0000" textLength="52.5" lengthAdjust="spacingAndGlyphs">Unitless</text><text transform="translate(36.1 622.5) rotate(-90)" font-size="15.7" text-anchor="middle" fill="#fff" textLength="83" lengthAdjust="spacingAndGlyphs">Sensor Data</text><text transform="translate(49.7 622) rotate(-90)" font-size="15.55" text-anchor="middle" fill="#fff" textLength="106" lengthAdjust="spacingAndGlyphs">Model Constant</text><text transform="translate(64.5 618.5) rotate(-90)" font-size="14.5" text-anchor="middle" fill="#fff" textLength="59" lengthAdjust="spacingAndGlyphs">velocity</text><text transform="translate(76.5 622.75) rotate(-90)" font-size="14.5" text-anchor="middle" fill="#fff" textLength="69.5" lengthAdjust="spacingAndGlyphs">index/sec</text><text transform="translate(814.5 621.85) rotate(90)" font-size="15.41" text-anchor="middle" fill="#00ff00" textLength="84.5" lengthAdjust="spacingAndGlyphs">Sensor Data</text><text transform="translate(802 622.65) rotate(90)" font-size="15.12" text-anchor="middle" fill="#00ff00" textLength="105.5" lengthAdjust="spacingAndGlyphs">Model Constant</text><text transform="translate(787.7 622.25) rotate(90)" font-size="13.52" text-anchor="middle" fill="#00ff00" textLength="83.7" lengthAdjust="spacingAndGlyphs">acceleration</text><text transform="translate(775.5 622.7) rotate(90)" font-size="14.24" text-anchor="middle" fill="#00ff00" textLength="92.6" lengthAdjust="spacingAndGlyphs">index/sec**2</text><rect x="863" y="26" width="21" height="107" fill="#fff"/><rect x="864" y="27" width="19" height="105" fill="url(#cbg)"/><rect x="876" y="132" width="8" height="1" fill="#fff"/><rect x="879" y="126" width="5" height="1" fill="#fff"/><rect x="879" y="123" width="5" height="1" fill="#fff"/><rect x="879" y="121" width="5" height="1" fill="#fff"/><rect x="879" y="119" width="5" height="1" fill="#fff"/><rect x="879" y="118" width="5" height="1" fill="#fff"/><rect x="879" y="117" width="5" height="1" fill="#fff"/><rect x="879" y="116" width="5" height="1" fill="#fff"/><rect x="879" y="115" width="5" height="1" fill="#fff"/><rect x="876" y="114" width="8" height="1" fill="#fff"/><rect x="879" y="109" width="5" height="1" fill="#fff"/><rect x="879" y="106" width="5" height="1" fill="#fff"/><rect x="879" y="103" width="5" height="1" fill="#fff"/><rect x="879" y="102" width="5" height="1" fill="#fff"/><rect x="879" y="100" width="5" height="1" fill="#fff"/><rect x="879" y="99" width="5" height="1" fill="#fff"/><rect x="879" y="98" width="5" height="1" fill="#fff"/><rect x="879" y="97" width="5" height="1" fill="#fff"/><rect x="876" y="96" width="8" height="1" fill="#fff"/><rect x="879" y="91" width="5" height="1" fill="#fff"/><rect x="879" y="88" width="5" height="1" fill="#fff"/><rect x="879" y="86" width="5" height="1" fill="#fff"/><rect x="879" y="84" width="5" height="1" fill="#fff"/><rect x="879" y="83" width="5" height="1" fill="#fff"/><rect x="879" y="82" width="5" height="1" fill="#fff"/><rect x="879" y="81" width="5" height="1" fill="#fff"/><rect x="879" y="80" width="5" height="1" fill="#fff"/><rect x="876" y="79" width="8" height="1" fill="#fff"/><rect x="879" y="73" width="5" height="1" fill="#fff"/><rect x="879" y="70" width="5" height="1" fill="#fff"/><rect x="879" y="68" width="5" height="1" fill="#fff"/><rect x="879" y="66" width="5" height="1" fill="#fff"/><rect x="879" y="65" width="5" height="1" fill="#fff"/><rect x="879" y="64" width="5" height="1" fill="#fff"/><rect x="879" y="63" width="5" height="1" fill="#fff"/><rect x="879" y="62" width="5" height="1" fill="#fff"/><rect x="876" y="61" width="8" height="1" fill="#fff"/><rect x="879" y="56" width="5" height="1" fill="#fff"/><rect x="879" y="53" width="5" height="1" fill="#fff"/><rect x="879" y="50" width="5" height="1" fill="#fff"/><rect x="879" y="49" width="5" height="1" fill="#fff"/><rect x="879" y="47" width="5" height="1" fill="#fff"/><rect x="879" y="46" width="5" height="1" fill="#fff"/><rect x="879" y="45" width="5" height="1" fill="#fff"/><rect x="879" y="44" width="5" height="1" fill="#fff"/><rect x="876" y="43" width="8" height="1" fill="#fff"/><rect x="879" y="38" width="5" height="1" fill="#fff"/><rect x="879" y="35" width="5" height="1" fill="#fff"/><rect x="879" y="33" width="5" height="1" fill="#fff"/><rect x="879" y="31" width="5" height="1" fill="#fff"/><rect x="879" y="30" width="5" height="1" fill="#fff"/><rect x="879" y="29" width="5" height="1" fill="#fff"/><rect x="879" y="28" width="5" height="1" fill="#fff"/><rect x="879" y="27" width="5" height="1" fill="#fff"/><rect x="876" y="26" width="8" height="1" fill="#fff"/><rect x="863" y="171" width="21" height="107" fill="#fff"/><rect x="864" y="172" width="19" height="105" fill="url(#cbg)"/><rect x="876" y="277" width="8" height="1" fill="#fff"/><rect x="879" y="261" width="5" height="1" fill="#fff"/><rect x="879" y="252" width="5" height="1" fill="#fff"/><rect x="879" y="245" width="5" height="1" fill="#fff"/><rect x="879" y="240" width="5" height="1" fill="#fff"/><rect x="879" y="236" width="5" height="1" fill="#fff"/><rect x="879" y="232" width="5" height="1" fill="#fff"/><rect x="879" y="229" width="5" height="1" fill="#fff"/><rect x="879" y="226" width="5" height="1" fill="#fff"/><rect x="876" y="224" width="8" height="1" fill="#fff"/><rect x="879" y="208" width="5" height="1" fill="#fff"/><rect x="879" y="199" width="5" height="1" fill="#fff"/><rect x="879" y="192" width="5" height="1" fill="#fff"/><rect x="879" y="187" width="5" height="1" fill="#fff"/><rect x="879" y="183" width="5" height="1" fill="#fff"/><rect x="879" y="179" width="5" height="1" fill="#fff"/><rect x="879" y="176" width="5" height="1" fill="#fff"/><rect x="879" y="173" width="5" height="1" fill="#fff"/><rect x="876" y="171" width="8" height="1" fill="#fff"/><text font-weight="bold" x="873.9" y="23.1" font-size="9.6" text-anchor="middle" fill="#fff" textLength="12" lengthAdjust="spacingAndGlyphs">NF</text><text x="874" y="167.9" font-size="9.4" text-anchor="middle" fill="#fff" textLength="17.2" lengthAdjust="spacingAndGlyphs">DEF</text><text x="892.2" y="28.8" font-size="8.2" text-anchor="middle" fill="#fff" textLength="6.5" lengthAdjust="spacingAndGlyphs">10</text><text x="896.5" y="25.7" font-size="5.2" fill="#fff" textLength="4.3" lengthAdjust="spacingAndGlyphs">12</text><text x="892.2" y="46.47" font-size="8.2" text-anchor="middle" fill="#fff" textLength="6.5" lengthAdjust="spacingAndGlyphs">10</text><text x="896.5" y="43.37" font-size="5.2" fill="#fff" textLength="4.3" lengthAdjust="spacingAndGlyphs">11</text><text x="892.2" y="64.13" font-size="8.2" text-anchor="middle" fill="#fff" textLength="6.5" lengthAdjust="spacingAndGlyphs">10</text><text x="896.5" y="61.03" font-size="5.2" fill="#fff" textLength="4.3" lengthAdjust="spacingAndGlyphs">10</text><text x="892.2" y="81.8" font-size="8.2" text-anchor="middle" fill="#fff" textLength="6.5" lengthAdjust="spacingAndGlyphs">10</text><text x="896.5" y="78.7" font-size="5.2" fill="#fff" textLength="2.5" lengthAdjust="spacingAndGlyphs">9</text><text x="892.2" y="99.47" font-size="8.2" text-anchor="middle" fill="#fff" textLength="6.5" lengthAdjust="spacingAndGlyphs">10</text><text x="896.5" y="96.37" font-size="5.2" fill="#fff" textLength="2.5" lengthAdjust="spacingAndGlyphs">8</text><text x="892.2" y="117.13" font-size="8.2" text-anchor="middle" fill="#fff" textLength="6.5" lengthAdjust="spacingAndGlyphs">10</text><text x="896.5" y="114.03" font-size="5.2" fill="#fff" textLength="2.5" lengthAdjust="spacingAndGlyphs">7</text><text x="892.2" y="134.8" font-size="8.2" text-anchor="middle" fill="#fff" textLength="6.5" lengthAdjust="spacingAndGlyphs">10</text><text x="896.5" y="131.7" font-size="5.2" fill="#fff" textLength="2.5" lengthAdjust="spacingAndGlyphs">6</text><text x="892.5" y="174" font-size="8.8" text-anchor="middle" fill="#fff" textLength="7" lengthAdjust="spacingAndGlyphs">10</text><text x="897" y="170.2" font-size="5.8" fill="#fff" textLength="7" lengthAdjust="spacingAndGlyphs">-4</text><text x="892.5" y="227" font-size="8.8" text-anchor="middle" fill="#fff" textLength="7" lengthAdjust="spacingAndGlyphs">10</text><text x="897" y="223.2" font-size="5.8" fill="#fff" textLength="7" lengthAdjust="spacingAndGlyphs">-5</text><text x="892.5" y="280" font-size="8.8" text-anchor="middle" fill="#fff" textLength="7" lengthAdjust="spacingAndGlyphs">10</text><text x="897" y="276.2" font-size="5.8" fill="#fff" textLength="7" lengthAdjust="spacingAndGlyphs">-6</text><text transform="translate(919.8 78.85) rotate(90)" font-size="11.5" text-anchor="middle" fill="#fff" textLength="108.3" lengthAdjust="spacingAndGlyphs">cnts/(cm**2-sr-sec)</text><text transform="translate(922.5 223.35) rotate(90)" font-size="11" text-anchor="middle" fill="#fff" textLength="126.1" lengthAdjust="spacingAndGlyphs">ergs/(cm**2-sr-sec-eV)</text>
</svg></body></html>
